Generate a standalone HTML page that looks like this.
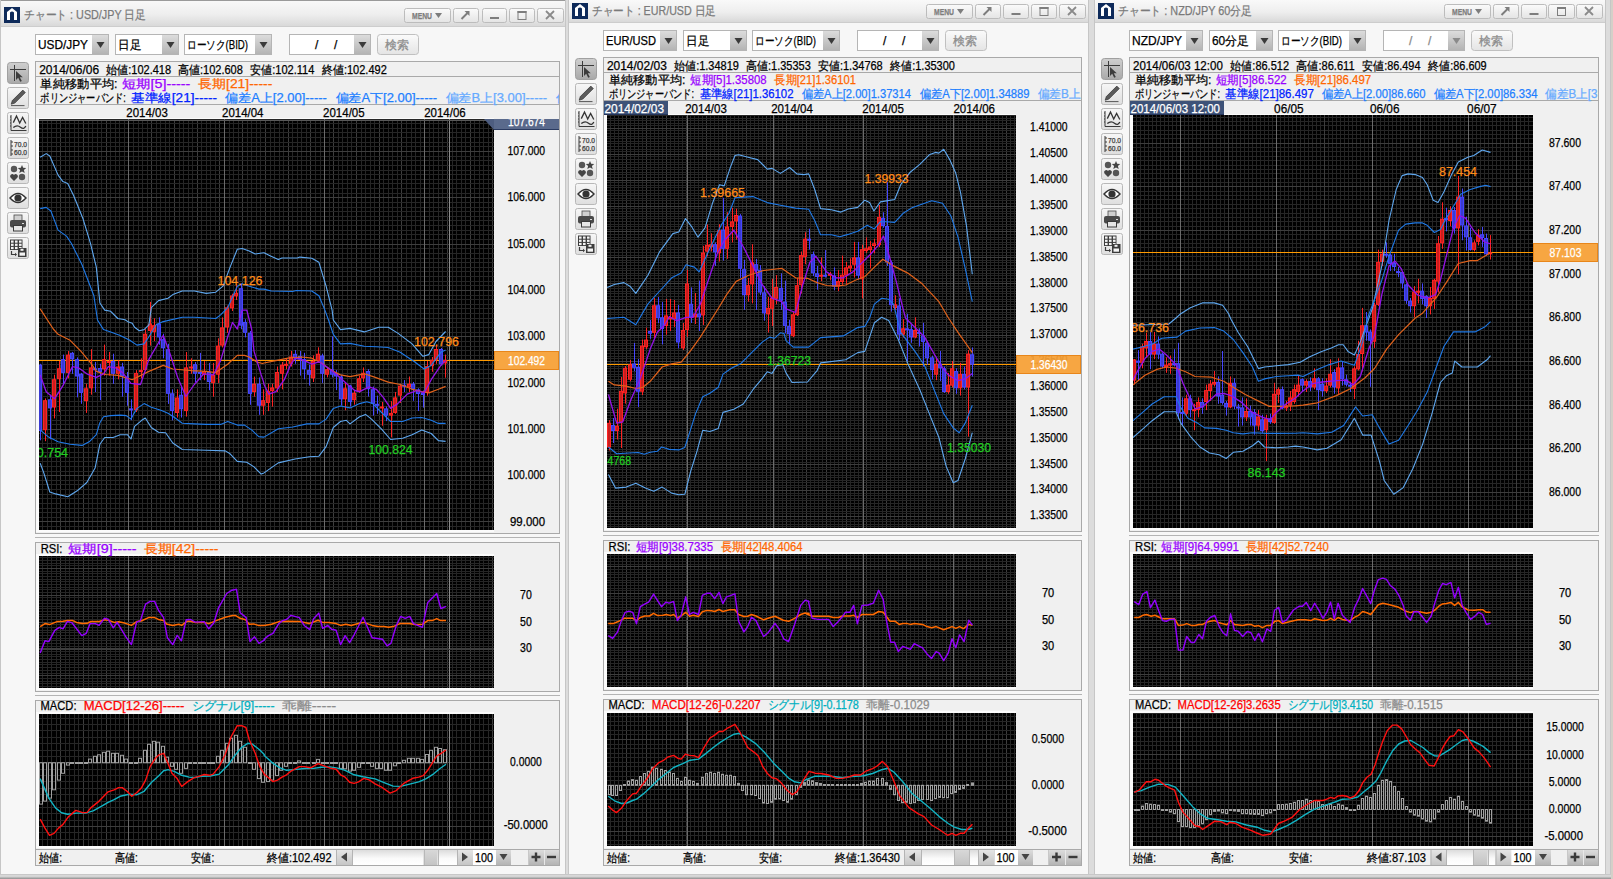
<!DOCTYPE html><html><head><meta charset="utf-8"><style>html,body{margin:0;padding:0;background:#d4d0c8;overflow:hidden}svg{display:block;font-family:"Liberation Sans",sans-serif;font-size:12px}</style></head><body>
<svg width="1613" height="879" viewBox="0 0 1613 879">
<defs>
<linearGradient id="gTitle" x1="0" y1="0" x2="0" y2="1"><stop offset="0" stop-color="#f9f9f9"/><stop offset="0.55" stop-color="#eeeeee"/><stop offset="1" stop-color="#d9d9d9"/></linearGradient>
<linearGradient id="gBtn" x1="0" y1="0" x2="0" y2="1"><stop offset="0" stop-color="#fbfbfb"/><stop offset="1" stop-color="#e4e4e4"/></linearGradient>
<linearGradient id="gDrop" x1="0" y1="0" x2="0" y2="1"><stop offset="0" stop-color="#dcdcdc"/><stop offset="1" stop-color="#b4b4b4"/></linearGradient>
<linearGradient id="gTool" x1="0" y1="0" x2="0" y2="1"><stop offset="0" stop-color="#f7f7f7"/><stop offset="1" stop-color="#dedede"/></linearGradient>
<linearGradient id="gToolSel" x1="0" y1="0" x2="0" y2="1"><stop offset="0" stop-color="#cfcfcf"/><stop offset="1" stop-color="#a9a9a9"/></linearGradient>
<linearGradient id="gBottom" x1="0" y1="0" x2="0" y2="1"><stop offset="0" stop-color="#dedede"/><stop offset="0.5" stop-color="#d4d4d4"/><stop offset="1" stop-color="#8f8f8f"/></linearGradient>
<linearGradient id="gTrack" x1="0" y1="0" x2="0" y2="1"><stop offset="0" stop-color="#dcdcdc"/><stop offset="0.55" stop-color="#fafafa"/><stop offset="1" stop-color="#ffffff"/></linearGradient>
<linearGradient id="gSBtn" x1="0" y1="0" x2="0" y2="1"><stop offset="0" stop-color="#e4e4e4"/><stop offset="1" stop-color="#c6c6c6"/></linearGradient>
<linearGradient id="gThumb" x1="0" y1="0" x2="0" y2="1"><stop offset="0" stop-color="#d8d8d8"/><stop offset="1" stop-color="#c4c4c4"/></linearGradient>
</defs>
<rect x="0" y="0" width="1613" height="879" fill="#d4d0c8"/>
<rect x="1" y="0" width="564" height="874" fill="#f7f7f7"/>
<rect x="1" y="0" width="564" height="26" fill="url(#gTitle)"/>
<rect x="1" y="26" width="564" height="1" fill="#cdcdcd"/>
<rect x="0" y="0" width="565" height="1" fill="#9a9a9a"/>
<rect x="4" y="7" width="16" height="16" fill="#0e2a5a"/>
<path d="M7,20 v-8 l5,-4 l5,4 v8 h-3 v-7.5 q-2,-2 -4,0 v7.5 z" fill="#fff"/>
<text x="24" y="19" fill="#7a7a7a" stroke="#7a7a7a" stroke-width="0.25" textLength="122" lengthAdjust="spacingAndGlyphs">チャート : USD/JPY 日足</text>
<rect x="404.5" y="8.5" width="46" height="14" rx="2" fill="url(#gBtn)" stroke="#bcbcbc"/>
<text x="412" y="19" fill="#7d7d7d" stroke="#7d7d7d" stroke-width="0.25" font-size="9" textLength="20" lengthAdjust="spacingAndGlyphs" font-weight="bold">MENU</text>
<path d="M435,13 h7 l-3.5,5 z" fill="#7d7d7d"/>
<rect x="453.5" y="8.5" width="25" height="14" rx="2" fill="url(#gBtn)" stroke="#bcbcbc"/>
<path d="M461.5,19.0 l6,-6" stroke="#7d7d7d" stroke-width="2"/><path d="M464.5,11.0 h5 v5 z" fill="#7d7d7d"/>
<rect x="482.5" y="8.5" width="24" height="14" rx="2" fill="url(#gBtn)" stroke="#bcbcbc"/>
<rect x="490.0" y="17.0" width="9" height="2" fill="#7d7d7d"/>
<rect x="509.5" y="8.5" width="25" height="14" rx="2" fill="url(#gBtn)" stroke="#bcbcbc"/>
<rect x="518.0" y="11.5" width="8" height="8" fill="none" stroke="#7d7d7d"/><rect x="517.5" y="11.0" width="9" height="2" fill="#7d7d7d"/>
<rect x="537.5" y="8.5" width="26" height="14" rx="2" fill="url(#gBtn)" stroke="#bcbcbc"/>
<path d="M546.0,11.0 l8,8 M554.0,11.0 l-8,8" stroke="#8a8a8a" stroke-width="1.8"/>
<rect x="35" y="34" width="74" height="21" fill="#ffffff"/>
<rect x="92" y="35" width="16" height="19" fill="url(#gDrop)"/>
<rect x="35" y="34" width="74" height="1" fill="#b5b5b5"/>
<rect x="35" y="54" width="74" height="1" fill="#b5b5b5"/>
<rect x="35" y="34" width="1" height="21" fill="#b5b5b5"/>
<rect x="108" y="34" width="1" height="21" fill="#b5b5b5"/>
<path d="M96.5,42 h8 l-4,6 z" fill="#3a3a3a"/>
<text x="38" y="49" fill="#000" stroke="#000" stroke-width="0.25" textLength="50" lengthAdjust="spacingAndGlyphs">USD/JPY</text>
<rect x="115" y="34" width="64" height="21" fill="#ffffff"/>
<rect x="162" y="35" width="16" height="19" fill="url(#gDrop)"/>
<rect x="115" y="34" width="64" height="1" fill="#b5b5b5"/>
<rect x="115" y="54" width="64" height="1" fill="#b5b5b5"/>
<rect x="115" y="34" width="1" height="21" fill="#b5b5b5"/>
<rect x="178" y="34" width="1" height="21" fill="#b5b5b5"/>
<path d="M166.5,42 h8 l-4,6 z" fill="#3a3a3a"/>
<text x="118" y="49" fill="#000" stroke="#000" stroke-width="0.25" textLength="23" lengthAdjust="spacingAndGlyphs">日足</text>
<rect x="184" y="34" width="88" height="21" fill="#ffffff"/>
<rect x="255" y="35" width="16" height="19" fill="url(#gDrop)"/>
<rect x="184" y="34" width="88" height="1" fill="#b5b5b5"/>
<rect x="184" y="54" width="88" height="1" fill="#b5b5b5"/>
<rect x="184" y="34" width="1" height="21" fill="#b5b5b5"/>
<rect x="271" y="34" width="1" height="21" fill="#b5b5b5"/>
<path d="M259.5,42 h8 l-4,6 z" fill="#3a3a3a"/>
<text x="187" y="49" fill="#000" stroke="#000" stroke-width="0.25" textLength="61" lengthAdjust="spacingAndGlyphs">ローソク(BID)</text>
<rect x="289" y="34" width="82" height="21" fill="#ffffff"/>
<rect x="354" y="35" width="16" height="19" fill="url(#gDrop)"/>
<rect x="289" y="34" width="82" height="1" fill="#b5b5b5"/>
<rect x="289" y="54" width="82" height="1" fill="#b5b5b5"/>
<rect x="289" y="34" width="1" height="21" fill="#b5b5b5"/>
<rect x="370" y="34" width="1" height="21" fill="#b5b5b5"/>
<path d="M358.5,42 h8 l-4,6 z" fill="#3a3a3a"/>
<text x="315" y="49" fill="#000" stroke="#000" stroke-width="0.25">/</text>
<text x="334" y="49" fill="#000" stroke="#000" stroke-width="0.25">/</text>
<rect x="377.5" y="34.5" width="41" height="20" rx="3" fill="url(#gBtn)" stroke="#c0c0c0"/>
<text x="385" y="49" fill="#8c8c8c" stroke="#8c8c8c" stroke-width="0.25" textLength="24" lengthAdjust="spacingAndGlyphs">検索</text>
<rect x="7.5" y="62.5" width="21" height="21" rx="3" fill="url(#gToolSel)" stroke="#a0a0a0"/>
<path d="M10,69.5 h16 M14.5,65 v16" stroke="#3c3c3c" stroke-width="1" fill="none"/>
<path d="M16,71 l0,9 l2.2,-2.2 l2,4 l1.6,-0.8 l-2,-3.8 l3,0 z" fill="#3c3c3c"/>
<rect x="7.5" y="87.5" width="21" height="21" rx="2" fill="url(#gTool)" stroke="#b8b8b8"/>
<path d="M11.2,104.2 L12.3,100.6 L22.8,90.1 L25.3,92.6 L14.8,103.1 Z" fill="#5a5a5a" stroke="#333" stroke-width="0.7"/>
<path d="M11,105.6 H24.5" stroke="#555" stroke-width="1"/>
<rect x="7.5" y="112.5" width="21" height="21" rx="2" fill="url(#gTool)" stroke="#b8b8b8"/>
<path d="M11,115 V130.5 H26.5" stroke="#3a3a3a" fill="none" stroke-width="1"/>
<path d="M10,117 h1 M10,120 h1 M10,123 h1 M10,126 h1" stroke="#3a3a3a" stroke-width="1"/>
<path d="M13.3,122.6 L16.5,116.1 L19.7,123 L22.6,117.5 L25.8,123.5" stroke="#333" fill="none" stroke-width="1.3"/>
<path d="M13.3,127.6 Q17,124.3 20.5,127.2 T25.8,126" stroke="#333" fill="none" stroke-width="1.3"/>
<rect x="7.5" y="137.5" width="21" height="21" rx="2" fill="url(#gTool)" stroke="#b8b8b8"/>
<path d="M11,140 v16 M11,142 h2 M11,146 h2 M11,150 h2 M11,154 h2" stroke="#3c3c3c" fill="none"/>
<text x="14" y="147" fill="#3c3c3c" stroke="#3c3c3c" stroke-width="0.25" font-size="7" textLength="13" lengthAdjust="spacingAndGlyphs">70.0</text>
<text x="14" y="155" fill="#3c3c3c" stroke="#3c3c3c" stroke-width="0.25" font-size="7" textLength="13" lengthAdjust="spacingAndGlyphs">60.0</text>
<rect x="7.5" y="162.5" width="21" height="21" rx="2" fill="url(#gTool)" stroke="#b8b8b8"/>
<circle cx="14" cy="169" r="3.2" fill="#555"/><circle cx="22" cy="177" r="3.2" fill="#555"/>
<path d="M22,165 l1.2,2.8 l3,0.2 l-2.3,2 l0.8,3 l-2.7,-1.6 l-2.7,1.6 l0.8,-3 l-2.3,-2 l3,-0.2 z" fill="#444"/>
<path d="M14,181 l-3.5,-3.5 a2,2 0 0 1 3.5,-2.5 a2,2 0 0 1 3.5,2.5 z" fill="#444"/>
<rect x="7.5" y="187.5" width="21" height="21" rx="2" fill="url(#gTool)" stroke="#b8b8b8"/>
<path d="M10,198 q8,-9 16,0 q-8,9 -16,0 z" fill="#fff" stroke="#333" stroke-width="1.4"/>
<circle cx="18" cy="198" r="3.6" fill="#333"/>
<rect x="7.5" y="212.5" width="21" height="21" rx="2" fill="url(#gTool)" stroke="#b8b8b8"/>
<rect x="14" y="215" width="8" height="6" fill="#d0d0d0" stroke="#4a4a4a" stroke-width="0.8"/>
<rect x="10" y="220" width="16" height="7.5" rx="2" fill="#4a4a4a"/>
<rect x="22" y="223" width="2" height="1" fill="#ddd"/>
<rect x="13.5" y="225.5" width="9" height="5.5" fill="#e6e6e6" stroke="#3a3a3a" stroke-width="1"/>
<rect x="7.5" y="237.5" width="21" height="21" rx="2" fill="url(#gTool)" stroke="#b8b8b8"/>
<rect x="10" y="239.5" width="12.5" height="10.5" fill="#3c3c3c"/>
<rect x="11" y="240.5" width="2.6" height="2.2" fill="#f4f4f4"/>
<rect x="15" y="240.5" width="2.6" height="2.2" fill="#f4f4f4"/>
<rect x="19" y="240.5" width="2.6" height="2.2" fill="#f4f4f4"/>
<rect x="11" y="243.7" width="2.6" height="2.2" fill="#f4f4f4"/>
<rect x="15" y="243.7" width="2.6" height="2.2" fill="#f4f4f4"/>
<rect x="19" y="243.7" width="2.6" height="2.2" fill="#f4f4f4"/>
<rect x="11" y="246.9" width="2.6" height="2.2" fill="#f4f4f4"/>
<rect x="15" y="246.9" width="2.6" height="2.2" fill="#f4f4f4"/>
<rect x="19" y="246.9" width="2.6" height="2.2" fill="#f4f4f4"/>
<path d="M11.5,251 v3.5 h3.5" stroke="#3c3c3c" fill="none" stroke-width="1.2"/><path d="M15,252.8 l2,1.7 l-2,1.7 z" fill="#3c3c3c"/>
<rect x="18" y="248" width="8.5" height="9" fill="#3c3c3c"/>
<rect x="19.5" y="252.5" width="5.5" height="3.2" fill="#f4f4f4"/><rect x="20.5" y="248.8" width="3" height="2" fill="#f4f4f4"/>
<rect x="35" y="61" width="525" height="473" fill="#f0f0f0"/>
<rect x="35" y="61" width="525" height="1" fill="#a9a9a9"/>
<rect x="35" y="533" width="525" height="1" fill="#a9a9a9"/>
<rect x="35" y="61" width="1" height="473" fill="#a9a9a9"/>
<rect x="559" y="61" width="1" height="473" fill="#a9a9a9"/>
<rect x="35" y="76" width="525" height="1" fill="#a9a9a9"/>
<rect x="35" y="104" width="525" height="1" fill="#a9a9a9"/>
<rect x="36" y="118" width="458" height="414" fill="#fbfbfb"/>
<rect x="39" y="119" width="455" height="411" fill="#000"/>
<rect x="494" y="118" width="65" height="414" fill="#f0f0f0"/>
<rect x="35" y="537" width="525" height="1" fill="#b4b4b4"/>
<rect x="35" y="542" width="525" height="150" fill="#f0f0f0"/>
<rect x="35" y="542" width="525" height="1" fill="#a9a9a9"/>
<rect x="35" y="691" width="525" height="1" fill="#a9a9a9"/>
<rect x="35" y="542" width="1" height="150" fill="#a9a9a9"/>
<rect x="559" y="542" width="1" height="150" fill="#a9a9a9"/>
<rect x="36" y="554" width="458" height="136" fill="#fbfbfb"/>
<rect x="39" y="556" width="455" height="132" fill="#000"/>
<rect x="494" y="554" width="65" height="136" fill="#f0f0f0"/>
<rect x="35" y="695" width="525" height="1" fill="#b4b4b4"/>
<rect x="35" y="700" width="525" height="166" fill="#f0f0f0"/>
<rect x="35" y="700" width="525" height="1" fill="#a9a9a9"/>
<rect x="35" y="865" width="525" height="1" fill="#a9a9a9"/>
<rect x="35" y="700" width="1" height="166" fill="#a9a9a9"/>
<rect x="559" y="700" width="1" height="166" fill="#a9a9a9"/>
<rect x="36" y="712" width="458" height="136" fill="#fbfbfb"/>
<rect x="39" y="714" width="455" height="132" fill="#000"/>
<rect x="494" y="712" width="65" height="136" fill="#f0f0f0"/>
<rect x="35" y="849" width="525" height="1" fill="#a9a9a9"/>
<rect x="569" y="0" width="519" height="874" fill="#f7f7f7"/>
<rect x="569" y="0" width="519" height="22" fill="url(#gTitle)"/>
<rect x="569" y="22" width="519" height="1" fill="#cdcdcd"/>
<rect x="572" y="3" width="16" height="16" fill="#0e2a5a"/>
<path d="M575,16 v-8 l5,-4 l5,4 v8 h-3 v-7.5 q-2,-2 -4,0 v7.5 z" fill="#fff"/>
<text x="592" y="15" fill="#7a7a7a" stroke="#7a7a7a" stroke-width="0.25" textLength="124" lengthAdjust="spacingAndGlyphs">チャート : EUR/USD 日足</text>
<rect x="926.5" y="4.5" width="46" height="14" rx="2" fill="url(#gBtn)" stroke="#bcbcbc"/>
<text x="934" y="15" fill="#7d7d7d" stroke="#7d7d7d" stroke-width="0.25" font-size="9" textLength="20" lengthAdjust="spacingAndGlyphs" font-weight="bold">MENU</text>
<path d="M957,9 h7 l-3.5,5 z" fill="#7d7d7d"/>
<rect x="975.5" y="4.5" width="25" height="14" rx="2" fill="url(#gBtn)" stroke="#bcbcbc"/>
<path d="M983.5,15.0 l6,-6" stroke="#7d7d7d" stroke-width="2"/><path d="M986.5,7.0 h5 v5 z" fill="#7d7d7d"/>
<rect x="1003.5" y="4.5" width="25" height="14" rx="2" fill="url(#gBtn)" stroke="#bcbcbc"/>
<rect x="1011.5" y="13.0" width="9" height="2" fill="#7d7d7d"/>
<rect x="1031.5" y="4.5" width="25" height="14" rx="2" fill="url(#gBtn)" stroke="#bcbcbc"/>
<rect x="1040.0" y="7.5" width="8" height="8" fill="none" stroke="#7d7d7d"/><rect x="1039.5" y="7.0" width="9" height="2" fill="#7d7d7d"/>
<rect x="1059.5" y="4.5" width="26" height="14" rx="2" fill="url(#gBtn)" stroke="#bcbcbc"/>
<path d="M1068.0,7.0 l8,8 M1076.0,7.0 l-8,8" stroke="#8a8a8a" stroke-width="1.8"/>
<rect x="603" y="30" width="74" height="21" fill="#ffffff"/>
<rect x="660" y="31" width="16" height="19" fill="url(#gDrop)"/>
<rect x="603" y="30" width="74" height="1" fill="#b5b5b5"/>
<rect x="603" y="50" width="74" height="1" fill="#b5b5b5"/>
<rect x="603" y="30" width="1" height="21" fill="#b5b5b5"/>
<rect x="676" y="30" width="1" height="21" fill="#b5b5b5"/>
<path d="M664.5,38 h8 l-4,6 z" fill="#3a3a3a"/>
<text x="606" y="45" fill="#000" stroke="#000" stroke-width="0.25" textLength="50" lengthAdjust="spacingAndGlyphs">EUR/USD</text>
<rect x="683" y="30" width="64" height="21" fill="#ffffff"/>
<rect x="730" y="31" width="16" height="19" fill="url(#gDrop)"/>
<rect x="683" y="30" width="64" height="1" fill="#b5b5b5"/>
<rect x="683" y="50" width="64" height="1" fill="#b5b5b5"/>
<rect x="683" y="30" width="1" height="21" fill="#b5b5b5"/>
<rect x="746" y="30" width="1" height="21" fill="#b5b5b5"/>
<path d="M734.5,38 h8 l-4,6 z" fill="#3a3a3a"/>
<text x="686" y="45" fill="#000" stroke="#000" stroke-width="0.25" textLength="23" lengthAdjust="spacingAndGlyphs">日足</text>
<rect x="752" y="30" width="88" height="21" fill="#ffffff"/>
<rect x="823" y="31" width="16" height="19" fill="url(#gDrop)"/>
<rect x="752" y="30" width="88" height="1" fill="#b5b5b5"/>
<rect x="752" y="50" width="88" height="1" fill="#b5b5b5"/>
<rect x="752" y="30" width="1" height="21" fill="#b5b5b5"/>
<rect x="839" y="30" width="1" height="21" fill="#b5b5b5"/>
<path d="M827.5,38 h8 l-4,6 z" fill="#3a3a3a"/>
<text x="755" y="45" fill="#000" stroke="#000" stroke-width="0.25" textLength="61" lengthAdjust="spacingAndGlyphs">ローソク(BID)</text>
<rect x="857" y="30" width="82" height="21" fill="#ffffff"/>
<rect x="922" y="31" width="16" height="19" fill="url(#gDrop)"/>
<rect x="857" y="30" width="82" height="1" fill="#b5b5b5"/>
<rect x="857" y="50" width="82" height="1" fill="#b5b5b5"/>
<rect x="857" y="30" width="1" height="21" fill="#b5b5b5"/>
<rect x="938" y="30" width="1" height="21" fill="#b5b5b5"/>
<path d="M926.5,38 h8 l-4,6 z" fill="#3a3a3a"/>
<text x="883" y="45" fill="#000" stroke="#000" stroke-width="0.25">/</text>
<text x="902" y="45" fill="#000" stroke="#000" stroke-width="0.25">/</text>
<rect x="945.5" y="30.5" width="41" height="20" rx="3" fill="url(#gBtn)" stroke="#c0c0c0"/>
<text x="953" y="45" fill="#8c8c8c" stroke="#8c8c8c" stroke-width="0.25" textLength="24" lengthAdjust="spacingAndGlyphs">検索</text>
<rect x="575.5" y="58.5" width="21" height="21" rx="3" fill="url(#gToolSel)" stroke="#a0a0a0"/>
<path d="M578,65.5 h16 M582.5,61 v16" stroke="#3c3c3c" stroke-width="1" fill="none"/>
<path d="M584,67 l0,9 l2.2,-2.2 l2,4 l1.6,-0.8 l-2,-3.8 l3,0 z" fill="#3c3c3c"/>
<rect x="575.5" y="83.5" width="21" height="21" rx="2" fill="url(#gTool)" stroke="#b8b8b8"/>
<path d="M579.2,100.2 L580.3,96.6 L590.8,86.1 L593.3,88.6 L582.8,99.1 Z" fill="#5a5a5a" stroke="#333" stroke-width="0.7"/>
<path d="M579,101.6 H592.5" stroke="#555" stroke-width="1"/>
<rect x="575.5" y="108.5" width="21" height="21" rx="2" fill="url(#gTool)" stroke="#b8b8b8"/>
<path d="M579,111 V126.5 H594.5" stroke="#3a3a3a" fill="none" stroke-width="1"/>
<path d="M578,113 h1 M578,116 h1 M578,119 h1 M578,122 h1" stroke="#3a3a3a" stroke-width="1"/>
<path d="M581.3,118.6 L584.5,112.1 L587.7,119 L590.6,113.5 L593.8,119.5" stroke="#333" fill="none" stroke-width="1.3"/>
<path d="M581.3,123.6 Q585,120.3 588.5,123.2 T593.8,122" stroke="#333" fill="none" stroke-width="1.3"/>
<rect x="575.5" y="133.5" width="21" height="21" rx="2" fill="url(#gTool)" stroke="#b8b8b8"/>
<path d="M579,136 v16 M579,138 h2 M579,142 h2 M579,146 h2 M579,150 h2" stroke="#3c3c3c" fill="none"/>
<text x="582" y="143" fill="#3c3c3c" stroke="#3c3c3c" stroke-width="0.25" font-size="7" textLength="13" lengthAdjust="spacingAndGlyphs">70.0</text>
<text x="582" y="151" fill="#3c3c3c" stroke="#3c3c3c" stroke-width="0.25" font-size="7" textLength="13" lengthAdjust="spacingAndGlyphs">60.0</text>
<rect x="575.5" y="158.5" width="21" height="21" rx="2" fill="url(#gTool)" stroke="#b8b8b8"/>
<circle cx="582" cy="165" r="3.2" fill="#555"/><circle cx="590" cy="173" r="3.2" fill="#555"/>
<path d="M590,161 l1.2,2.8 l3,0.2 l-2.3,2 l0.8,3 l-2.7,-1.6 l-2.7,1.6 l0.8,-3 l-2.3,-2 l3,-0.2 z" fill="#444"/>
<path d="M582,177 l-3.5,-3.5 a2,2 0 0 1 3.5,-2.5 a2,2 0 0 1 3.5,2.5 z" fill="#444"/>
<rect x="575.5" y="183.5" width="21" height="21" rx="2" fill="url(#gTool)" stroke="#b8b8b8"/>
<path d="M578,194 q8,-9 16,0 q-8,9 -16,0 z" fill="#fff" stroke="#333" stroke-width="1.4"/>
<circle cx="586" cy="194" r="3.6" fill="#333"/>
<rect x="575.5" y="208.5" width="21" height="21" rx="2" fill="url(#gTool)" stroke="#b8b8b8"/>
<rect x="582" y="211" width="8" height="6" fill="#d0d0d0" stroke="#4a4a4a" stroke-width="0.8"/>
<rect x="578" y="216" width="16" height="7.5" rx="2" fill="#4a4a4a"/>
<rect x="590" y="219" width="2" height="1" fill="#ddd"/>
<rect x="581.5" y="221.5" width="9" height="5.5" fill="#e6e6e6" stroke="#3a3a3a" stroke-width="1"/>
<rect x="575.5" y="233.5" width="21" height="21" rx="2" fill="url(#gTool)" stroke="#b8b8b8"/>
<rect x="578" y="235.5" width="12.5" height="10.5" fill="#3c3c3c"/>
<rect x="579" y="236.5" width="2.6" height="2.2" fill="#f4f4f4"/>
<rect x="583" y="236.5" width="2.6" height="2.2" fill="#f4f4f4"/>
<rect x="587" y="236.5" width="2.6" height="2.2" fill="#f4f4f4"/>
<rect x="579" y="239.7" width="2.6" height="2.2" fill="#f4f4f4"/>
<rect x="583" y="239.7" width="2.6" height="2.2" fill="#f4f4f4"/>
<rect x="587" y="239.7" width="2.6" height="2.2" fill="#f4f4f4"/>
<rect x="579" y="242.9" width="2.6" height="2.2" fill="#f4f4f4"/>
<rect x="583" y="242.9" width="2.6" height="2.2" fill="#f4f4f4"/>
<rect x="587" y="242.9" width="2.6" height="2.2" fill="#f4f4f4"/>
<path d="M579.5,247 v3.5 h3.5" stroke="#3c3c3c" fill="none" stroke-width="1.2"/><path d="M583,248.8 l2,1.7 l-2,1.7 z" fill="#3c3c3c"/>
<rect x="586" y="244" width="8.5" height="9" fill="#3c3c3c"/>
<rect x="587.5" y="248.5" width="5.5" height="3.2" fill="#f4f4f4"/><rect x="588.5" y="244.8" width="3" height="2" fill="#f4f4f4"/>
<rect x="603" y="57" width="479" height="475" fill="#f0f0f0"/>
<rect x="603" y="57" width="479" height="1" fill="#a9a9a9"/>
<rect x="603" y="531" width="479" height="1" fill="#a9a9a9"/>
<rect x="603" y="57" width="1" height="475" fill="#a9a9a9"/>
<rect x="1081" y="57" width="1" height="475" fill="#a9a9a9"/>
<rect x="603" y="72" width="479" height="1" fill="#a9a9a9"/>
<rect x="603" y="100" width="479" height="1" fill="#a9a9a9"/>
<rect x="604" y="114" width="412" height="416" fill="#fbfbfb"/>
<rect x="607" y="115" width="409" height="413" fill="#000"/>
<rect x="1016" y="114" width="65" height="416" fill="#f0f0f0"/>
<rect x="603" y="535" width="479" height="1" fill="#b4b4b4"/>
<rect x="603" y="540" width="479" height="151" fill="#f0f0f0"/>
<rect x="603" y="540" width="479" height="1" fill="#a9a9a9"/>
<rect x="603" y="690" width="479" height="1" fill="#a9a9a9"/>
<rect x="603" y="540" width="1" height="151" fill="#a9a9a9"/>
<rect x="1081" y="540" width="1" height="151" fill="#a9a9a9"/>
<rect x="604" y="552" width="412" height="137" fill="#fbfbfb"/>
<rect x="607" y="554" width="409" height="133" fill="#000"/>
<rect x="1016" y="552" width="65" height="137" fill="#f0f0f0"/>
<rect x="603" y="694" width="479" height="1" fill="#b4b4b4"/>
<rect x="603" y="699" width="479" height="167" fill="#f0f0f0"/>
<rect x="603" y="699" width="479" height="1" fill="#a9a9a9"/>
<rect x="603" y="865" width="479" height="1" fill="#a9a9a9"/>
<rect x="603" y="699" width="1" height="167" fill="#a9a9a9"/>
<rect x="1081" y="699" width="1" height="167" fill="#a9a9a9"/>
<rect x="604" y="711" width="412" height="137" fill="#fbfbfb"/>
<rect x="607" y="713" width="409" height="133" fill="#000"/>
<rect x="1016" y="711" width="65" height="137" fill="#f0f0f0"/>
<rect x="603" y="849" width="479" height="1" fill="#a9a9a9"/>
<rect x="1095" y="0" width="510" height="874" fill="#f7f7f7"/>
<rect x="1095" y="0" width="510" height="22" fill="url(#gTitle)"/>
<rect x="1095" y="22" width="510" height="1" fill="#cdcdcd"/>
<rect x="1098" y="3" width="16" height="16" fill="#0e2a5a"/>
<path d="M1101,16 v-8 l5,-4 l5,4 v8 h-3 v-7.5 q-2,-2 -4,0 v7.5 z" fill="#fff"/>
<text x="1118" y="15" fill="#7a7a7a" stroke="#7a7a7a" stroke-width="0.25" textLength="134" lengthAdjust="spacingAndGlyphs">チャート : NZD/JPY 60分足</text>
<rect x="1444.5" y="4.5" width="46" height="14" rx="2" fill="url(#gBtn)" stroke="#bcbcbc"/>
<text x="1452" y="15" fill="#7d7d7d" stroke="#7d7d7d" stroke-width="0.25" font-size="9" textLength="20" lengthAdjust="spacingAndGlyphs" font-weight="bold">MENU</text>
<path d="M1475,9 h7 l-3.5,5 z" fill="#7d7d7d"/>
<rect x="1493.5" y="4.5" width="25" height="14" rx="2" fill="url(#gBtn)" stroke="#bcbcbc"/>
<path d="M1501.5,15.0 l6,-6" stroke="#7d7d7d" stroke-width="2"/><path d="M1504.5,7.0 h5 v5 z" fill="#7d7d7d"/>
<rect x="1521.5" y="4.5" width="25" height="14" rx="2" fill="url(#gBtn)" stroke="#bcbcbc"/>
<rect x="1529.5" y="13.0" width="9" height="2" fill="#7d7d7d"/>
<rect x="1548.5" y="4.5" width="26" height="14" rx="2" fill="url(#gBtn)" stroke="#bcbcbc"/>
<rect x="1557.5" y="7.5" width="8" height="8" fill="none" stroke="#7d7d7d"/><rect x="1557.0" y="7.0" width="9" height="2" fill="#7d7d7d"/>
<rect x="1576.5" y="4.5" width="26" height="14" rx="2" fill="url(#gBtn)" stroke="#bcbcbc"/>
<path d="M1585.0,7.0 l8,8 M1593.0,7.0 l-8,8" stroke="#8a8a8a" stroke-width="1.8"/>
<rect x="1129" y="30" width="74" height="21" fill="#ffffff"/>
<rect x="1186" y="31" width="16" height="19" fill="url(#gDrop)"/>
<rect x="1129" y="30" width="74" height="1" fill="#b5b5b5"/>
<rect x="1129" y="50" width="74" height="1" fill="#b5b5b5"/>
<rect x="1129" y="30" width="1" height="21" fill="#b5b5b5"/>
<rect x="1202" y="30" width="1" height="21" fill="#b5b5b5"/>
<path d="M1190.5,38 h8 l-4,6 z" fill="#3a3a3a"/>
<text x="1132" y="45" fill="#000" stroke="#000" stroke-width="0.25" textLength="50" lengthAdjust="spacingAndGlyphs">NZD/JPY</text>
<rect x="1209" y="30" width="64" height="21" fill="#ffffff"/>
<rect x="1256" y="31" width="16" height="19" fill="url(#gDrop)"/>
<rect x="1209" y="30" width="64" height="1" fill="#b5b5b5"/>
<rect x="1209" y="50" width="64" height="1" fill="#b5b5b5"/>
<rect x="1209" y="30" width="1" height="21" fill="#b5b5b5"/>
<rect x="1272" y="30" width="1" height="21" fill="#b5b5b5"/>
<path d="M1260.5,38 h8 l-4,6 z" fill="#3a3a3a"/>
<text x="1212" y="45" fill="#000" stroke="#000" stroke-width="0.25" textLength="37" lengthAdjust="spacingAndGlyphs">60分足</text>
<rect x="1278" y="30" width="88" height="21" fill="#ffffff"/>
<rect x="1349" y="31" width="16" height="19" fill="url(#gDrop)"/>
<rect x="1278" y="30" width="88" height="1" fill="#b5b5b5"/>
<rect x="1278" y="50" width="88" height="1" fill="#b5b5b5"/>
<rect x="1278" y="30" width="1" height="21" fill="#b5b5b5"/>
<rect x="1365" y="30" width="1" height="21" fill="#b5b5b5"/>
<path d="M1353.5,38 h8 l-4,6 z" fill="#3a3a3a"/>
<text x="1281" y="45" fill="#000" stroke="#000" stroke-width="0.25" textLength="61" lengthAdjust="spacingAndGlyphs">ローソク(BID)</text>
<rect x="1383" y="30" width="82" height="21" fill="#ffffff"/>
<rect x="1448" y="31" width="16" height="19" fill="url(#gDrop)"/>
<rect x="1383" y="30" width="82" height="1" fill="#b5b5b5"/>
<rect x="1383" y="50" width="82" height="1" fill="#b5b5b5"/>
<rect x="1383" y="30" width="1" height="21" fill="#b5b5b5"/>
<rect x="1464" y="30" width="1" height="21" fill="#b5b5b5"/>
<path d="M1452.5,38 h8 l-4,6 z" fill="#8a8a8a"/>
<text x="1409" y="45" fill="#8a8a8a" stroke="#8a8a8a" stroke-width="0.25">/</text>
<text x="1428" y="45" fill="#8a8a8a" stroke="#8a8a8a" stroke-width="0.25">/</text>
<rect x="1471.5" y="30.5" width="41" height="20" rx="3" fill="url(#gBtn)" stroke="#c0c0c0"/>
<text x="1479" y="45" fill="#8c8c8c" stroke="#8c8c8c" stroke-width="0.25" textLength="24" lengthAdjust="spacingAndGlyphs">検索</text>
<rect x="1101.5" y="58.5" width="21" height="21" rx="3" fill="url(#gToolSel)" stroke="#a0a0a0"/>
<path d="M1104,65.5 h16 M1108.5,61 v16" stroke="#3c3c3c" stroke-width="1" fill="none"/>
<path d="M1110,67 l0,9 l2.2,-2.2 l2,4 l1.6,-0.8 l-2,-3.8 l3,0 z" fill="#3c3c3c"/>
<rect x="1101.5" y="83.5" width="21" height="21" rx="2" fill="url(#gTool)" stroke="#b8b8b8"/>
<path d="M1105.2,100.2 L1106.3,96.6 L1116.8,86.1 L1119.3,88.6 L1108.8,99.1 Z" fill="#5a5a5a" stroke="#333" stroke-width="0.7"/>
<path d="M1105,101.6 H1118.5" stroke="#555" stroke-width="1"/>
<rect x="1101.5" y="108.5" width="21" height="21" rx="2" fill="url(#gTool)" stroke="#b8b8b8"/>
<path d="M1105,111 V126.5 H1120.5" stroke="#3a3a3a" fill="none" stroke-width="1"/>
<path d="M1104,113 h1 M1104,116 h1 M1104,119 h1 M1104,122 h1" stroke="#3a3a3a" stroke-width="1"/>
<path d="M1107.3,118.6 L1110.5,112.1 L1113.7,119 L1116.6,113.5 L1119.8,119.5" stroke="#333" fill="none" stroke-width="1.3"/>
<path d="M1107.3,123.6 Q1111,120.3 1114.5,123.2 T1119.8,122" stroke="#333" fill="none" stroke-width="1.3"/>
<rect x="1101.5" y="133.5" width="21" height="21" rx="2" fill="url(#gTool)" stroke="#b8b8b8"/>
<path d="M1105,136 v16 M1105,138 h2 M1105,142 h2 M1105,146 h2 M1105,150 h2" stroke="#3c3c3c" fill="none"/>
<text x="1108" y="143" fill="#3c3c3c" stroke="#3c3c3c" stroke-width="0.25" font-size="7" textLength="13" lengthAdjust="spacingAndGlyphs">70.0</text>
<text x="1108" y="151" fill="#3c3c3c" stroke="#3c3c3c" stroke-width="0.25" font-size="7" textLength="13" lengthAdjust="spacingAndGlyphs">60.0</text>
<rect x="1101.5" y="158.5" width="21" height="21" rx="2" fill="url(#gTool)" stroke="#b8b8b8"/>
<circle cx="1108" cy="165" r="3.2" fill="#555"/><circle cx="1116" cy="173" r="3.2" fill="#555"/>
<path d="M1116,161 l1.2,2.8 l3,0.2 l-2.3,2 l0.8,3 l-2.7,-1.6 l-2.7,1.6 l0.8,-3 l-2.3,-2 l3,-0.2 z" fill="#444"/>
<path d="M1108,177 l-3.5,-3.5 a2,2 0 0 1 3.5,-2.5 a2,2 0 0 1 3.5,2.5 z" fill="#444"/>
<rect x="1101.5" y="183.5" width="21" height="21" rx="2" fill="url(#gTool)" stroke="#b8b8b8"/>
<path d="M1104,194 q8,-9 16,0 q-8,9 -16,0 z" fill="#fff" stroke="#333" stroke-width="1.4"/>
<circle cx="1112" cy="194" r="3.6" fill="#333"/>
<rect x="1101.5" y="208.5" width="21" height="21" rx="2" fill="url(#gTool)" stroke="#b8b8b8"/>
<rect x="1108" y="211" width="8" height="6" fill="#d0d0d0" stroke="#4a4a4a" stroke-width="0.8"/>
<rect x="1104" y="216" width="16" height="7.5" rx="2" fill="#4a4a4a"/>
<rect x="1116" y="219" width="2" height="1" fill="#ddd"/>
<rect x="1107.5" y="221.5" width="9" height="5.5" fill="#e6e6e6" stroke="#3a3a3a" stroke-width="1"/>
<rect x="1101.5" y="233.5" width="21" height="21" rx="2" fill="url(#gTool)" stroke="#b8b8b8"/>
<rect x="1104" y="235.5" width="12.5" height="10.5" fill="#3c3c3c"/>
<rect x="1105" y="236.5" width="2.6" height="2.2" fill="#f4f4f4"/>
<rect x="1109" y="236.5" width="2.6" height="2.2" fill="#f4f4f4"/>
<rect x="1113" y="236.5" width="2.6" height="2.2" fill="#f4f4f4"/>
<rect x="1105" y="239.7" width="2.6" height="2.2" fill="#f4f4f4"/>
<rect x="1109" y="239.7" width="2.6" height="2.2" fill="#f4f4f4"/>
<rect x="1113" y="239.7" width="2.6" height="2.2" fill="#f4f4f4"/>
<rect x="1105" y="242.9" width="2.6" height="2.2" fill="#f4f4f4"/>
<rect x="1109" y="242.9" width="2.6" height="2.2" fill="#f4f4f4"/>
<rect x="1113" y="242.9" width="2.6" height="2.2" fill="#f4f4f4"/>
<path d="M1105.5,247 v3.5 h3.5" stroke="#3c3c3c" fill="none" stroke-width="1.2"/><path d="M1109,248.8 l2,1.7 l-2,1.7 z" fill="#3c3c3c"/>
<rect x="1112" y="244" width="8.5" height="9" fill="#3c3c3c"/>
<rect x="1113.5" y="248.5" width="5.5" height="3.2" fill="#f4f4f4"/><rect x="1114.5" y="244.8" width="3" height="2" fill="#f4f4f4"/>
<rect x="1129" y="57" width="470" height="475" fill="#f0f0f0"/>
<rect x="1129" y="57" width="470" height="1" fill="#a9a9a9"/>
<rect x="1129" y="531" width="470" height="1" fill="#a9a9a9"/>
<rect x="1129" y="57" width="1" height="475" fill="#a9a9a9"/>
<rect x="1598" y="57" width="1" height="475" fill="#a9a9a9"/>
<rect x="1129" y="72" width="470" height="1" fill="#a9a9a9"/>
<rect x="1129" y="100" width="470" height="1" fill="#a9a9a9"/>
<rect x="1130" y="114" width="403" height="416" fill="#fbfbfb"/>
<rect x="1133" y="115" width="400" height="413" fill="#000"/>
<rect x="1533" y="114" width="65" height="416" fill="#f0f0f0"/>
<rect x="1129" y="535" width="470" height="1" fill="#b4b4b4"/>
<rect x="1129" y="540" width="470" height="151" fill="#f0f0f0"/>
<rect x="1129" y="540" width="470" height="1" fill="#a9a9a9"/>
<rect x="1129" y="690" width="470" height="1" fill="#a9a9a9"/>
<rect x="1129" y="540" width="1" height="151" fill="#a9a9a9"/>
<rect x="1598" y="540" width="1" height="151" fill="#a9a9a9"/>
<rect x="1130" y="552" width="403" height="137" fill="#fbfbfb"/>
<rect x="1133" y="554" width="400" height="133" fill="#000"/>
<rect x="1533" y="552" width="65" height="137" fill="#f0f0f0"/>
<rect x="1129" y="694" width="470" height="1" fill="#b4b4b4"/>
<rect x="1129" y="699" width="470" height="167" fill="#f0f0f0"/>
<rect x="1129" y="699" width="470" height="1" fill="#a9a9a9"/>
<rect x="1129" y="865" width="470" height="1" fill="#a9a9a9"/>
<rect x="1129" y="699" width="1" height="167" fill="#a9a9a9"/>
<rect x="1598" y="699" width="1" height="167" fill="#a9a9a9"/>
<rect x="1130" y="711" width="403" height="137" fill="#fbfbfb"/>
<rect x="1133" y="713" width="400" height="133" fill="#000"/>
<rect x="1533" y="711" width="65" height="137" fill="#f0f0f0"/>
<rect x="1129" y="849" width="470" height="1" fill="#a9a9a9"/>
<rect x="565" y="0" width="4" height="879" fill="#dcdcdc"/>
<rect x="565" y="0" width="1" height="874" fill="#c6c6c6"/>
<rect x="568" y="0" width="1" height="874" fill="#c6c6c6"/>
<rect x="1088" y="0" width="7" height="879" fill="#dcdcdc"/>
<rect x="1088" y="0" width="1" height="874" fill="#c6c6c6"/>
<rect x="1094" y="0" width="1" height="874" fill="#c6c6c6"/>
<rect x="1605" y="0" width="6" height="879" fill="#dcdcdc"/>
<rect x="1605" y="0" width="1" height="874" fill="#c6c6c6"/>
<rect x="1610" y="0" width="1" height="874" fill="#c6c6c6"/>
<rect x="0" y="0" width="1" height="880" fill="#c6c6c6"/>
<rect x="0" y="874" width="1611" height="5" fill="url(#gBottom)"/>
<rect x="0" y="874" width="1611" height="1" fill="#c8c8c8"/>
<rect x="1611" y="0" width="2" height="879" fill="#d4d0c8"/>
<clipPath id="c1"><rect x="36" y="60" width="523" height="60"/></clipPath>
<clipPath id="c2"><rect x="604" y="56" width="477" height="60"/></clipPath>
<clipPath id="c3"><rect x="1130" y="56" width="468" height="60"/></clipPath>
<g clip-path="url(#c1)">
<text x="39.2" y="74" fill="#000" stroke="#000" stroke-width="0.25" textLength="59.9" lengthAdjust="spacingAndGlyphs">2014/06/06</text>
<text x="106.2" y="74" fill="#000" stroke="#000" stroke-width="0.25" textLength="64.9" lengthAdjust="spacingAndGlyphs">始値:102.418</text>
<text x="178.0" y="74" fill="#000" stroke="#000" stroke-width="0.25" textLength="64.8" lengthAdjust="spacingAndGlyphs">高値:102.608</text>
<text x="250.1" y="74" fill="#000" stroke="#000" stroke-width="0.25" textLength="64.3" lengthAdjust="spacingAndGlyphs">安値:102.114</text>
<text x="321.9" y="74" fill="#000" stroke="#000" stroke-width="0.25" textLength="64.9" lengthAdjust="spacingAndGlyphs">終値:102.492</text>
<text x="40.4" y="88" fill="#000" stroke="#000" stroke-width="0.25" textLength="77.1" lengthAdjust="spacingAndGlyphs">単純移動平均:</text>
<text x="121.9" y="88" fill="#9900ff" stroke="#9900ff" stroke-width="0.25" textLength="68.5" lengthAdjust="spacingAndGlyphs">短期[5]-----</text>
<text x="198.2" y="88" fill="#ff6600" stroke="#ff6600" stroke-width="0.25" textLength="74.2" lengthAdjust="spacingAndGlyphs">長期[21]-----</text>
<text x="40.4" y="102" fill="#000" stroke="#000" stroke-width="0.25" textLength="85.5" lengthAdjust="spacingAndGlyphs">ボリンジャーバンド:</text>
<text x="131.1" y="102" fill="#0022ff" stroke="#0022ff" stroke-width="0.25" textLength="86.0" lengthAdjust="spacingAndGlyphs">基準線[21]-----</text>
<text x="225.3" y="102" fill="#1e7fff" stroke="#1e7fff" stroke-width="0.25" textLength="101.6" lengthAdjust="spacingAndGlyphs">偏差A上[2.00]-----</text>
<text x="335.5" y="102" fill="#1e7fff" stroke="#1e7fff" stroke-width="0.25" textLength="101.6" lengthAdjust="spacingAndGlyphs">偏差A下[2.00]-----</text>
<text x="445.5" y="102" fill="#66aaff" stroke="#66aaff" stroke-width="0.25" textLength="101.6" lengthAdjust="spacingAndGlyphs">偏差B上[3.00]-----</text>
<text x="555.5" y="102" fill="#66aaff" stroke="#66aaff" stroke-width="0.25" textLength="13" lengthAdjust="spacingAndGlyphs">偏</text>
</g>
<g clip-path="url(#c2)">
<text x="606.9" y="70" fill="#000" stroke="#000" stroke-width="0.25" textLength="59.9" lengthAdjust="spacingAndGlyphs">2014/02/03</text>
<text x="674.2" y="70" fill="#000" stroke="#000" stroke-width="0.25" textLength="64.7" lengthAdjust="spacingAndGlyphs">始値:1.34819</text>
<text x="746.0" y="70" fill="#000" stroke="#000" stroke-width="0.25" textLength="64.8" lengthAdjust="spacingAndGlyphs">高値:1.35353</text>
<text x="818.0" y="70" fill="#000" stroke="#000" stroke-width="0.25" textLength="64.7" lengthAdjust="spacingAndGlyphs">安値:1.34768</text>
<text x="890.3" y="70" fill="#000" stroke="#000" stroke-width="0.25" textLength="64.6" lengthAdjust="spacingAndGlyphs">終値:1.35300</text>
<text x="608.5" y="84" fill="#000" stroke="#000" stroke-width="0.25" textLength="77" lengthAdjust="spacingAndGlyphs">単純移動平均:</text>
<text x="690.2" y="84" fill="#9900ff" stroke="#9900ff" stroke-width="0.25" textLength="76.4" lengthAdjust="spacingAndGlyphs">短期[5]1.35808</text>
<text x="774.3" y="84" fill="#ff6600" stroke="#ff6600" stroke-width="0.25" textLength="81.7" lengthAdjust="spacingAndGlyphs">長期[21]1.36101</text>
<text x="608.5" y="98" fill="#000" stroke="#000" stroke-width="0.25" textLength="85.5" lengthAdjust="spacingAndGlyphs">ボリンジャーバンド:</text>
<text x="699.5" y="98" fill="#0022ff" stroke="#0022ff" stroke-width="0.25" textLength="94" lengthAdjust="spacingAndGlyphs">基準線[21]1.36102</text>
<text x="801.8" y="98" fill="#1e7fff" stroke="#1e7fff" stroke-width="0.25" textLength="109.2" lengthAdjust="spacingAndGlyphs">偏差A上[2.00]1.37314</text>
<text x="919.8" y="98" fill="#1e7fff" stroke="#1e7fff" stroke-width="0.25" textLength="109.8" lengthAdjust="spacingAndGlyphs">偏差A下[2.00]1.34889</text>
<text x="1037.5" y="98" fill="#66aaff" stroke="#66aaff" stroke-width="0.25" textLength="43" lengthAdjust="spacingAndGlyphs">偏差B上</text>
</g>
<g clip-path="url(#c3)">
<text x="1133.0" y="70" fill="#000" stroke="#000" stroke-width="0.25" textLength="89.8" lengthAdjust="spacingAndGlyphs">2014/06/03 12:00</text>
<text x="1230.4" y="70" fill="#000" stroke="#000" stroke-width="0.25" textLength="58.6" lengthAdjust="spacingAndGlyphs">始値:86.512</text>
<text x="1296.2" y="70" fill="#000" stroke="#000" stroke-width="0.25" textLength="58.4" lengthAdjust="spacingAndGlyphs">高値:86.611</text>
<text x="1362.4" y="70" fill="#000" stroke="#000" stroke-width="0.25" textLength="58.1" lengthAdjust="spacingAndGlyphs">安値:86.494</text>
<text x="1428.4" y="70" fill="#000" stroke="#000" stroke-width="0.25" textLength="58.3" lengthAdjust="spacingAndGlyphs">終値:86.609</text>
<text x="1134.5" y="84" fill="#000" stroke="#000" stroke-width="0.25" textLength="77" lengthAdjust="spacingAndGlyphs">単純移動平均:</text>
<text x="1215.9" y="84" fill="#9900ff" stroke="#9900ff" stroke-width="0.25" textLength="70.8" lengthAdjust="spacingAndGlyphs">短期[5]86.522</text>
<text x="1294.2" y="84" fill="#ff6600" stroke="#ff6600" stroke-width="0.25" textLength="77.0" lengthAdjust="spacingAndGlyphs">長期[21]86.497</text>
<text x="1134.5" y="98" fill="#000" stroke="#000" stroke-width="0.25" textLength="85.5" lengthAdjust="spacingAndGlyphs">ボリンジャーバンド:</text>
<text x="1225.2" y="98" fill="#0022ff" stroke="#0022ff" stroke-width="0.25" textLength="88.6" lengthAdjust="spacingAndGlyphs">基準線[21]86.497</text>
<text x="1321.6" y="98" fill="#1e7fff" stroke="#1e7fff" stroke-width="0.25" textLength="103.9" lengthAdjust="spacingAndGlyphs">偏差A上[2.00]86.660</text>
<text x="1433.5" y="98" fill="#1e7fff" stroke="#1e7fff" stroke-width="0.25" textLength="104" lengthAdjust="spacingAndGlyphs">偏差A下[2.00]86.334</text>
<text x="1545.4" y="98" fill="#66aaff" stroke="#66aaff" stroke-width="0.25" textLength="52.1" lengthAdjust="spacingAndGlyphs">偏差B上[3</text>
</g>
<text x="126.3" y="117" fill="#000" stroke="#000" stroke-width="0.25" textLength="41.5" lengthAdjust="spacingAndGlyphs">2014/03</text>
<text x="222.0" y="117" fill="#000" stroke="#000" stroke-width="0.25" textLength="41.5" lengthAdjust="spacingAndGlyphs">2014/04</text>
<text x="323.1" y="117" fill="#000" stroke="#000" stroke-width="0.25" textLength="41.5" lengthAdjust="spacingAndGlyphs">2014/05</text>
<text x="424.2" y="117" fill="#000" stroke="#000" stroke-width="0.25" textLength="41.5" lengthAdjust="spacingAndGlyphs">2014/06</text>
<text x="507.5" y="155.0" fill="#000" stroke="#000" stroke-width="0.25" textLength="37.5" lengthAdjust="spacingAndGlyphs">107.000</text>
<text x="507.5" y="201.3" fill="#000" stroke="#000" stroke-width="0.25" textLength="37.5" lengthAdjust="spacingAndGlyphs">106.000</text>
<text x="507.5" y="247.6" fill="#000" stroke="#000" stroke-width="0.25" textLength="37.5" lengthAdjust="spacingAndGlyphs">105.000</text>
<text x="507.5" y="293.9" fill="#000" stroke="#000" stroke-width="0.25" textLength="37.5" lengthAdjust="spacingAndGlyphs">104.000</text>
<text x="507.5" y="340.2" fill="#000" stroke="#000" stroke-width="0.25" textLength="37.5" lengthAdjust="spacingAndGlyphs">103.000</text>
<text x="507.5" y="386.6" fill="#000" stroke="#000" stroke-width="0.25" textLength="37.5" lengthAdjust="spacingAndGlyphs">102.000</text>
<text x="507.5" y="432.9" fill="#000" stroke="#000" stroke-width="0.25" textLength="37.5" lengthAdjust="spacingAndGlyphs">101.000</text>
<text x="507.5" y="479.2" fill="#000" stroke="#000" stroke-width="0.25" textLength="37.5" lengthAdjust="spacingAndGlyphs">100.000</text>
<text x="510.0" y="525.5" fill="#000" stroke="#000" stroke-width="0.25" textLength="35.0" lengthAdjust="spacingAndGlyphs">99.000</text>
<text x="520.1" y="598.5" fill="#000" stroke="#000" stroke-width="0.25" textLength="11.7" lengthAdjust="spacingAndGlyphs">70</text>
<text x="520.1" y="625.8" fill="#000" stroke="#000" stroke-width="0.25" textLength="11.7" lengthAdjust="spacingAndGlyphs">50</text>
<text x="520.1" y="652" fill="#000" stroke="#000" stroke-width="0.25" textLength="11.7" lengthAdjust="spacingAndGlyphs">30</text>
<text x="510.1" y="766" fill="#000" stroke="#000" stroke-width="0.25" textLength="31.6" lengthAdjust="spacingAndGlyphs">0.0000</text>
<text x="503.7" y="829" fill="#000" stroke="#000" stroke-width="0.25" textLength="44.0" lengthAdjust="spacingAndGlyphs">-50.0000</text>
<text x="40.7" y="553" fill="#000" stroke="#000" stroke-width="0.25" textLength="21.8" lengthAdjust="spacingAndGlyphs">RSI:</text>
<text x="68.2" y="553" fill="#9900ff" stroke="#9900ff" stroke-width="0.25" textLength="68.3" lengthAdjust="spacingAndGlyphs">短期[9]-----</text>
<text x="143.9" y="553" fill="#ff6600" stroke="#ff6600" stroke-width="0.25" textLength="74.6" lengthAdjust="spacingAndGlyphs">長期[42]-----</text>
<text x="40.5" y="709.5" fill="#000" stroke="#000" stroke-width="0.25" textLength="36" lengthAdjust="spacingAndGlyphs">MACD:</text>
<text x="83.7" y="709.5" fill="#ff0000" stroke="#ff0000" stroke-width="0.25" textLength="100.7" lengthAdjust="spacingAndGlyphs">MACD[12-26]-----</text>
<text x="191.7" y="709.5" fill="#00b0c0" stroke="#00b0c0" stroke-width="0.25" textLength="82.8" lengthAdjust="spacingAndGlyphs">シグナル[9]-----</text>
<text x="282.2" y="709.5" fill="#8c8c8c" stroke="#8c8c8c" stroke-width="0.25" textLength="54.1" lengthAdjust="spacingAndGlyphs">乖離-----</text>
<text x="685.2" y="113" fill="#000" stroke="#000" stroke-width="0.25" textLength="41.6" lengthAdjust="spacingAndGlyphs">2014/03</text>
<text x="771.2" y="113" fill="#000" stroke="#000" stroke-width="0.25" textLength="41.6" lengthAdjust="spacingAndGlyphs">2014/04</text>
<text x="862.3" y="113" fill="#000" stroke="#000" stroke-width="0.25" textLength="41.6" lengthAdjust="spacingAndGlyphs">2014/05</text>
<text x="953.4" y="113" fill="#000" stroke="#000" stroke-width="0.25" textLength="41.6" lengthAdjust="spacingAndGlyphs">2014/06</text>
<text x="1030.0" y="131.2" fill="#000" stroke="#000" stroke-width="0.25" textLength="37.5" lengthAdjust="spacingAndGlyphs">1.41000</text>
<text x="1030.0" y="157.1" fill="#000" stroke="#000" stroke-width="0.25" textLength="37.5" lengthAdjust="spacingAndGlyphs">1.40500</text>
<text x="1030.0" y="183.0" fill="#000" stroke="#000" stroke-width="0.25" textLength="37.5" lengthAdjust="spacingAndGlyphs">1.40000</text>
<text x="1030.0" y="208.9" fill="#000" stroke="#000" stroke-width="0.25" textLength="37.5" lengthAdjust="spacingAndGlyphs">1.39500</text>
<text x="1030.0" y="234.7" fill="#000" stroke="#000" stroke-width="0.25" textLength="37.5" lengthAdjust="spacingAndGlyphs">1.39000</text>
<text x="1030.0" y="260.6" fill="#000" stroke="#000" stroke-width="0.25" textLength="37.5" lengthAdjust="spacingAndGlyphs">1.38500</text>
<text x="1030.0" y="286.5" fill="#000" stroke="#000" stroke-width="0.25" textLength="37.5" lengthAdjust="spacingAndGlyphs">1.38000</text>
<text x="1030.0" y="312.3" fill="#000" stroke="#000" stroke-width="0.25" textLength="37.5" lengthAdjust="spacingAndGlyphs">1.37500</text>
<text x="1030.0" y="338.2" fill="#000" stroke="#000" stroke-width="0.25" textLength="37.5" lengthAdjust="spacingAndGlyphs">1.37000</text>
<text x="1030.0" y="364.1" fill="#000" stroke="#000" stroke-width="0.25" textLength="37.5" lengthAdjust="spacingAndGlyphs">1.36500</text>
<text x="1030.0" y="389.9" fill="#000" stroke="#000" stroke-width="0.25" textLength="37.5" lengthAdjust="spacingAndGlyphs">1.36000</text>
<text x="1030.0" y="415.8" fill="#000" stroke="#000" stroke-width="0.25" textLength="37.5" lengthAdjust="spacingAndGlyphs">1.35500</text>
<text x="1030.0" y="441.7" fill="#000" stroke="#000" stroke-width="0.25" textLength="37.5" lengthAdjust="spacingAndGlyphs">1.35000</text>
<text x="1030.0" y="467.6" fill="#000" stroke="#000" stroke-width="0.25" textLength="37.5" lengthAdjust="spacingAndGlyphs">1.34500</text>
<text x="1030.0" y="493.4" fill="#000" stroke="#000" stroke-width="0.25" textLength="37.5" lengthAdjust="spacingAndGlyphs">1.34000</text>
<text x="1030.0" y="519.3" fill="#000" stroke="#000" stroke-width="0.25" textLength="37.5" lengthAdjust="spacingAndGlyphs">1.33500</text>
<text x="1041.9" y="596.5" fill="#000" stroke="#000" stroke-width="0.25" textLength="12.3" lengthAdjust="spacingAndGlyphs">70</text>
<text x="1041.9" y="623.8" fill="#000" stroke="#000" stroke-width="0.25" textLength="12.3" lengthAdjust="spacingAndGlyphs">50</text>
<text x="1041.9" y="650.4" fill="#000" stroke="#000" stroke-width="0.25" textLength="12.3" lengthAdjust="spacingAndGlyphs">30</text>
<text x="1031.7" y="743" fill="#000" stroke="#000" stroke-width="0.25" textLength="32.4" lengthAdjust="spacingAndGlyphs">0.5000</text>
<text x="1031.7" y="789" fill="#000" stroke="#000" stroke-width="0.25" textLength="32.4" lengthAdjust="spacingAndGlyphs">0.0000</text>
<text x="1028.3" y="835" fill="#000" stroke="#000" stroke-width="0.25" textLength="38.5" lengthAdjust="spacingAndGlyphs">-0.5000</text>
<text x="608.6" y="551" fill="#000" stroke="#000" stroke-width="0.25" textLength="21.9" lengthAdjust="spacingAndGlyphs">RSI:</text>
<text x="636.0" y="551" fill="#9900ff" stroke="#9900ff" stroke-width="0.25" textLength="77.0" lengthAdjust="spacingAndGlyphs">短期[9]38.7335</text>
<text x="720.5" y="551" fill="#ff6600" stroke="#ff6600" stroke-width="0.25" textLength="82.1" lengthAdjust="spacingAndGlyphs">長期[42]48.4064</text>
<text x="608.5" y="709" fill="#000" stroke="#000" stroke-width="0.25" textLength="36" lengthAdjust="spacingAndGlyphs">MACD:</text>
<text x="651.8" y="709" fill="#ff0000" stroke="#ff0000" stroke-width="0.25" textLength="108.9" lengthAdjust="spacingAndGlyphs">MACD[12-26]-0.2207</text>
<text x="767.5" y="709" fill="#00b0c0" stroke="#00b0c0" stroke-width="0.25" textLength="91.4" lengthAdjust="spacingAndGlyphs">シグナル[9]-0.1178</text>
<text x="866.4" y="709" fill="#8c8c8c" stroke="#8c8c8c" stroke-width="0.25" textLength="63.0" lengthAdjust="spacingAndGlyphs">乖離-0.1029</text>
<text x="1274.1" y="113" fill="#000" stroke="#000" stroke-width="0.25" textLength="29.6" lengthAdjust="spacingAndGlyphs">06/05</text>
<text x="1369.9" y="113" fill="#000" stroke="#000" stroke-width="0.25" textLength="29.6" lengthAdjust="spacingAndGlyphs">06/06</text>
<text x="1467.1" y="113" fill="#000" stroke="#000" stroke-width="0.25" textLength="29.6" lengthAdjust="spacingAndGlyphs">06/07</text>
<text x="1549.0" y="146.8" fill="#000" stroke="#000" stroke-width="0.25" textLength="32.0" lengthAdjust="spacingAndGlyphs">87.600</text>
<text x="1549.0" y="190.4" fill="#000" stroke="#000" stroke-width="0.25" textLength="32.0" lengthAdjust="spacingAndGlyphs">87.400</text>
<text x="1549.0" y="234.0" fill="#000" stroke="#000" stroke-width="0.25" textLength="32.0" lengthAdjust="spacingAndGlyphs">87.200</text>
<text x="1549.0" y="277.6" fill="#000" stroke="#000" stroke-width="0.25" textLength="32.0" lengthAdjust="spacingAndGlyphs">87.000</text>
<text x="1549.0" y="321.2" fill="#000" stroke="#000" stroke-width="0.25" textLength="32.0" lengthAdjust="spacingAndGlyphs">86.800</text>
<text x="1549.0" y="364.9" fill="#000" stroke="#000" stroke-width="0.25" textLength="32.0" lengthAdjust="spacingAndGlyphs">86.600</text>
<text x="1549.0" y="408.5" fill="#000" stroke="#000" stroke-width="0.25" textLength="32.0" lengthAdjust="spacingAndGlyphs">86.400</text>
<text x="1549.0" y="452.1" fill="#000" stroke="#000" stroke-width="0.25" textLength="32.0" lengthAdjust="spacingAndGlyphs">86.200</text>
<text x="1549.0" y="495.8" fill="#000" stroke="#000" stroke-width="0.25" textLength="32.0" lengthAdjust="spacingAndGlyphs">86.000</text>
<text x="1558.9" y="596.5" fill="#000" stroke="#000" stroke-width="0.25" textLength="12.3" lengthAdjust="spacingAndGlyphs">70</text>
<text x="1558.9" y="623.8" fill="#000" stroke="#000" stroke-width="0.25" textLength="12.3" lengthAdjust="spacingAndGlyphs">50</text>
<text x="1558.9" y="650.4" fill="#000" stroke="#000" stroke-width="0.25" textLength="12.3" lengthAdjust="spacingAndGlyphs">30</text>
<text x="1546.3" y="731" fill="#000" stroke="#000" stroke-width="0.25" textLength="37.5" lengthAdjust="spacingAndGlyphs">15.0000</text>
<text x="1546.3" y="759" fill="#000" stroke="#000" stroke-width="0.25" textLength="37.5" lengthAdjust="spacingAndGlyphs">10.0000</text>
<text x="1548.7" y="786" fill="#000" stroke="#000" stroke-width="0.25" textLength="32.4" lengthAdjust="spacingAndGlyphs">5.0000</text>
<text x="1548.7" y="813" fill="#000" stroke="#000" stroke-width="0.25" textLength="32.4" lengthAdjust="spacingAndGlyphs">0.0000</text>
<text x="1544.5" y="840" fill="#000" stroke="#000" stroke-width="0.25" textLength="38.5" lengthAdjust="spacingAndGlyphs">-5.0000</text>
<text x="1135.1" y="551" fill="#000" stroke="#000" stroke-width="0.25" textLength="21.9" lengthAdjust="spacingAndGlyphs">RSI:</text>
<text x="1161.4" y="551" fill="#9900ff" stroke="#9900ff" stroke-width="0.25" textLength="77.6" lengthAdjust="spacingAndGlyphs">短期[9]64.9991</text>
<text x="1246.1" y="551" fill="#ff6600" stroke="#ff6600" stroke-width="0.25" textLength="82.7" lengthAdjust="spacingAndGlyphs">長期[42]52.7240</text>
<text x="1135.1" y="709" fill="#000" stroke="#000" stroke-width="0.25" textLength="35.9" lengthAdjust="spacingAndGlyphs">MACD:</text>
<text x="1177.5" y="709" fill="#ff0000" stroke="#ff0000" stroke-width="0.25" textLength="103.2" lengthAdjust="spacingAndGlyphs">MACD[12-26]3.2635</text>
<text x="1287.9" y="709" fill="#00b0c0" stroke="#00b0c0" stroke-width="0.25" textLength="85.1" lengthAdjust="spacingAndGlyphs">シグナル[9]3.4150</text>
<text x="1380.2" y="709" fill="#8c8c8c" stroke="#8c8c8c" stroke-width="0.25" textLength="62.4" lengthAdjust="spacingAndGlyphs">乖離-0.1515</text>
<clipPath id="w1m"><rect x="39" y="119" width="455" height="411"/></clipPath><g clip-path="url(#w1m)">
<rect x="42" y="119" width="1" height="411" fill="#262626"/><rect x="47" y="119" width="1" height="411" fill="#262626"/><rect x="51" y="119" width="1" height="411" fill="#262626"/><rect x="56" y="119" width="1" height="411" fill="#262626"/><rect x="60" y="119" width="1" height="411" fill="#3d3d3d"/><rect x="65" y="119" width="1" height="411" fill="#262626"/><rect x="69" y="119" width="1" height="411" fill="#262626"/><rect x="74" y="119" width="1" height="411" fill="#262626"/><rect x="78" y="119" width="1" height="411" fill="#262626"/><rect x="83" y="119" width="1" height="411" fill="#3d3d3d"/><rect x="88" y="119" width="1" height="411" fill="#262626"/><rect x="92" y="119" width="1" height="411" fill="#262626"/><rect x="97" y="119" width="1" height="411" fill="#262626"/><rect x="101" y="119" width="1" height="411" fill="#262626"/><rect x="106" y="119" width="1" height="411" fill="#3d3d3d"/><rect x="110" y="119" width="1" height="411" fill="#262626"/><rect x="115" y="119" width="1" height="411" fill="#262626"/><rect x="119" y="119" width="1" height="411" fill="#262626"/><rect x="124" y="119" width="1" height="411" fill="#262626"/><rect x="128" y="119" width="1" height="411" fill="#3d3d3d"/><rect x="133" y="119" width="1" height="411" fill="#262626"/><rect x="138" y="119" width="1" height="411" fill="#262626"/><rect x="142" y="119" width="1" height="411" fill="#262626"/><rect x="147" y="119" width="1" height="411" fill="#262626"/><rect x="151" y="119" width="1" height="411" fill="#3d3d3d"/><rect x="156" y="119" width="1" height="411" fill="#262626"/><rect x="160" y="119" width="1" height="411" fill="#262626"/><rect x="165" y="119" width="1" height="411" fill="#262626"/><rect x="169" y="119" width="1" height="411" fill="#262626"/><rect x="174" y="119" width="1" height="411" fill="#3d3d3d"/><rect x="179" y="119" width="1" height="411" fill="#262626"/><rect x="183" y="119" width="1" height="411" fill="#262626"/><rect x="188" y="119" width="1" height="411" fill="#262626"/><rect x="192" y="119" width="1" height="411" fill="#262626"/><rect x="197" y="119" width="1" height="411" fill="#3d3d3d"/><rect x="201" y="119" width="1" height="411" fill="#262626"/><rect x="206" y="119" width="1" height="411" fill="#262626"/><rect x="210" y="119" width="1" height="411" fill="#262626"/><rect x="215" y="119" width="1" height="411" fill="#262626"/><rect x="219" y="119" width="1" height="411" fill="#3d3d3d"/><rect x="224" y="119" width="1" height="411" fill="#262626"/><rect x="229" y="119" width="1" height="411" fill="#262626"/><rect x="233" y="119" width="1" height="411" fill="#262626"/><rect x="238" y="119" width="1" height="411" fill="#262626"/><rect x="242" y="119" width="1" height="411" fill="#3d3d3d"/><rect x="247" y="119" width="1" height="411" fill="#262626"/><rect x="251" y="119" width="1" height="411" fill="#262626"/><rect x="256" y="119" width="1" height="411" fill="#262626"/><rect x="260" y="119" width="1" height="411" fill="#262626"/><rect x="265" y="119" width="1" height="411" fill="#3d3d3d"/><rect x="270" y="119" width="1" height="411" fill="#262626"/><rect x="274" y="119" width="1" height="411" fill="#262626"/><rect x="279" y="119" width="1" height="411" fill="#262626"/><rect x="283" y="119" width="1" height="411" fill="#262626"/><rect x="288" y="119" width="1" height="411" fill="#3d3d3d"/><rect x="292" y="119" width="1" height="411" fill="#262626"/><rect x="297" y="119" width="1" height="411" fill="#262626"/><rect x="301" y="119" width="1" height="411" fill="#262626"/><rect x="306" y="119" width="1" height="411" fill="#262626"/><rect x="310" y="119" width="1" height="411" fill="#3d3d3d"/><rect x="315" y="119" width="1" height="411" fill="#262626"/><rect x="320" y="119" width="1" height="411" fill="#262626"/><rect x="324" y="119" width="1" height="411" fill="#262626"/><rect x="329" y="119" width="1" height="411" fill="#262626"/><rect x="333" y="119" width="1" height="411" fill="#3d3d3d"/><rect x="338" y="119" width="1" height="411" fill="#262626"/><rect x="342" y="119" width="1" height="411" fill="#262626"/><rect x="347" y="119" width="1" height="411" fill="#262626"/><rect x="351" y="119" width="1" height="411" fill="#262626"/><rect x="356" y="119" width="1" height="411" fill="#3d3d3d"/><rect x="361" y="119" width="1" height="411" fill="#262626"/><rect x="365" y="119" width="1" height="411" fill="#262626"/><rect x="370" y="119" width="1" height="411" fill="#262626"/><rect x="374" y="119" width="1" height="411" fill="#262626"/><rect x="379" y="119" width="1" height="411" fill="#3d3d3d"/><rect x="383" y="119" width="1" height="411" fill="#262626"/><rect x="388" y="119" width="1" height="411" fill="#262626"/><rect x="392" y="119" width="1" height="411" fill="#262626"/><rect x="397" y="119" width="1" height="411" fill="#262626"/><rect x="401" y="119" width="1" height="411" fill="#3d3d3d"/><rect x="406" y="119" width="1" height="411" fill="#262626"/><rect x="411" y="119" width="1" height="411" fill="#262626"/><rect x="415" y="119" width="1" height="411" fill="#262626"/><rect x="420" y="119" width="1" height="411" fill="#262626"/><rect x="424" y="119" width="1" height="411" fill="#3d3d3d"/><rect x="429" y="119" width="1" height="411" fill="#262626"/><rect x="433" y="119" width="1" height="411" fill="#262626"/><rect x="438" y="119" width="1" height="411" fill="#262626"/><rect x="442" y="119" width="1" height="411" fill="#262626"/><rect x="447" y="119" width="1" height="411" fill="#3d3d3d"/><rect x="452" y="119" width="1" height="411" fill="#262626"/><rect x="456" y="119" width="1" height="411" fill="#262626"/><rect x="461" y="119" width="1" height="411" fill="#262626"/><rect x="465" y="119" width="1" height="411" fill="#262626"/><rect x="470" y="119" width="1" height="411" fill="#3d3d3d"/><rect x="474" y="119" width="1" height="411" fill="#262626"/><rect x="479" y="119" width="1" height="411" fill="#262626"/><rect x="483" y="119" width="1" height="411" fill="#262626"/><rect x="488" y="119" width="1" height="411" fill="#262626"/><rect x="492" y="119" width="1" height="411" fill="#3d3d3d"/><rect x="39" y="119" width="455" height="1" fill="#262626"/><rect x="39" y="123" width="455" height="1" fill="#262626"/><rect x="39" y="128" width="455" height="1" fill="#262626"/><rect x="39" y="132" width="455" height="1" fill="#262626"/><rect x="39" y="137" width="455" height="1" fill="#262626"/><rect x="39" y="142" width="455" height="1" fill="#262626"/><rect x="39" y="146" width="455" height="1" fill="#262626"/><rect x="39" y="151" width="455" height="1" fill="#3d3d3d"/><rect x="39" y="156" width="455" height="1" fill="#262626"/><rect x="39" y="160" width="455" height="1" fill="#262626"/><rect x="39" y="165" width="455" height="1" fill="#262626"/><rect x="39" y="170" width="455" height="1" fill="#262626"/><rect x="39" y="174" width="455" height="1" fill="#262626"/><rect x="39" y="179" width="455" height="1" fill="#262626"/><rect x="39" y="183" width="455" height="1" fill="#262626"/><rect x="39" y="188" width="455" height="1" fill="#262626"/><rect x="39" y="193" width="455" height="1" fill="#262626"/><rect x="39" y="197" width="455" height="1" fill="#3d3d3d"/><rect x="39" y="202" width="455" height="1" fill="#262626"/><rect x="39" y="207" width="455" height="1" fill="#262626"/><rect x="39" y="211" width="455" height="1" fill="#262626"/><rect x="39" y="216" width="455" height="1" fill="#262626"/><rect x="39" y="220" width="455" height="1" fill="#262626"/><rect x="39" y="225" width="455" height="1" fill="#262626"/><rect x="39" y="230" width="455" height="1" fill="#262626"/><rect x="39" y="234" width="455" height="1" fill="#262626"/><rect x="39" y="239" width="455" height="1" fill="#262626"/><rect x="39" y="244" width="455" height="1" fill="#3d3d3d"/><rect x="39" y="248" width="455" height="1" fill="#262626"/><rect x="39" y="253" width="455" height="1" fill="#262626"/><rect x="39" y="258" width="455" height="1" fill="#262626"/><rect x="39" y="262" width="455" height="1" fill="#262626"/><rect x="39" y="267" width="455" height="1" fill="#262626"/><rect x="39" y="271" width="455" height="1" fill="#262626"/><rect x="39" y="276" width="455" height="1" fill="#262626"/><rect x="39" y="281" width="455" height="1" fill="#262626"/><rect x="39" y="285" width="455" height="1" fill="#262626"/><rect x="39" y="290" width="455" height="1" fill="#3d3d3d"/><rect x="39" y="295" width="455" height="1" fill="#262626"/><rect x="39" y="299" width="455" height="1" fill="#262626"/><rect x="39" y="304" width="455" height="1" fill="#262626"/><rect x="39" y="308" width="455" height="1" fill="#262626"/><rect x="39" y="313" width="455" height="1" fill="#262626"/><rect x="39" y="318" width="455" height="1" fill="#262626"/><rect x="39" y="322" width="455" height="1" fill="#262626"/><rect x="39" y="327" width="455" height="1" fill="#262626"/><rect x="39" y="332" width="455" height="1" fill="#262626"/><rect x="39" y="336" width="455" height="1" fill="#3d3d3d"/><rect x="39" y="341" width="455" height="1" fill="#262626"/><rect x="39" y="346" width="455" height="1" fill="#262626"/><rect x="39" y="350" width="455" height="1" fill="#262626"/><rect x="39" y="355" width="455" height="1" fill="#262626"/><rect x="39" y="359" width="455" height="1" fill="#262626"/><rect x="39" y="364" width="455" height="1" fill="#262626"/><rect x="39" y="369" width="455" height="1" fill="#262626"/><rect x="39" y="373" width="455" height="1" fill="#262626"/><rect x="39" y="378" width="455" height="1" fill="#262626"/><rect x="39" y="383" width="455" height="1" fill="#3d3d3d"/><rect x="39" y="387" width="455" height="1" fill="#262626"/><rect x="39" y="392" width="455" height="1" fill="#262626"/><rect x="39" y="396" width="455" height="1" fill="#262626"/><rect x="39" y="401" width="455" height="1" fill="#262626"/><rect x="39" y="406" width="455" height="1" fill="#262626"/><rect x="39" y="410" width="455" height="1" fill="#262626"/><rect x="39" y="415" width="455" height="1" fill="#262626"/><rect x="39" y="420" width="455" height="1" fill="#262626"/><rect x="39" y="424" width="455" height="1" fill="#262626"/><rect x="39" y="429" width="455" height="1" fill="#3d3d3d"/><rect x="39" y="433" width="455" height="1" fill="#262626"/><rect x="39" y="438" width="455" height="1" fill="#262626"/><rect x="39" y="443" width="455" height="1" fill="#262626"/><rect x="39" y="447" width="455" height="1" fill="#262626"/><rect x="39" y="452" width="455" height="1" fill="#262626"/><rect x="39" y="457" width="455" height="1" fill="#262626"/><rect x="39" y="461" width="455" height="1" fill="#262626"/><rect x="39" y="466" width="455" height="1" fill="#262626"/><rect x="39" y="471" width="455" height="1" fill="#262626"/><rect x="39" y="475" width="455" height="1" fill="#3d3d3d"/><rect x="39" y="480" width="455" height="1" fill="#262626"/><rect x="39" y="484" width="455" height="1" fill="#262626"/><rect x="39" y="489" width="455" height="1" fill="#262626"/><rect x="39" y="494" width="455" height="1" fill="#262626"/><rect x="39" y="498" width="455" height="1" fill="#262626"/><rect x="39" y="503" width="455" height="1" fill="#262626"/><rect x="39" y="508" width="455" height="1" fill="#262626"/><rect x="39" y="512" width="455" height="1" fill="#262626"/><rect x="39" y="517" width="455" height="1" fill="#262626"/><rect x="39" y="521" width="455" height="1" fill="#3d3d3d"/><rect x="39" y="526" width="455" height="1" fill="#262626"/><rect x="128" y="119" width="1" height="411" fill="#6a6a6a"/><rect x="224" y="119" width="1" height="411" fill="#6a6a6a"/><rect x="324" y="119" width="1" height="411" fill="#6a6a6a"/><rect x="424" y="119" width="1" height="411" fill="#6a6a6a"/><rect x="449" y="119" width="1" height="411" fill="#8a8a8a"/>
<rect x="39" y="120" width="455" height="1" fill="#5a5a5a"/>
<rect x="39" y="360" width="455" height="1" fill="#ff9a00"/>
<rect x="40" y="363.8" width="1" height="76.5" fill="#4646ff"/><rect x="38.5" y="365.2" width="3" height="65.3" fill="#3a3ad0" stroke="#4646ff" stroke-width="1"/><rect x="45" y="398.4" width="1" height="42.8" fill="#ff2222"/><rect x="43.5" y="400.7" width="3" height="29.0" fill="#c81e1e" stroke="#ff2222" stroke-width="1"/><rect x="50" y="394.7" width="1" height="44.6" fill="#4646ff"/><rect x="48.5" y="399.8" width="3" height="8.1" fill="#3a3ad0" stroke="#4646ff" stroke-width="1"/><rect x="54" y="374.7" width="1" height="43.7" fill="#ff2222"/><rect x="52.5" y="379.7" width="3" height="27.3" fill="#c81e1e" stroke="#ff2222" stroke-width="1"/><rect x="59" y="361.0" width="1" height="51.0" fill="#ff2222"/><rect x="57.5" y="368.8" width="3" height="9.9" fill="#c81e1e" stroke="#ff2222" stroke-width="1"/><rect x="63" y="354.6" width="1" height="29.2" fill="#4646ff"/><rect x="61.5" y="359.7" width="3" height="12.7" fill="#3a3ad0" stroke="#4646ff" stroke-width="1"/><rect x="68" y="351.0" width="1" height="27.3" fill="#ff2222"/><rect x="66.5" y="355.1" width="3" height="17.3" fill="#c81e1e" stroke="#ff2222" stroke-width="1"/><rect x="72" y="351.9" width="1" height="21.9" fill="#4646ff"/><rect x="70.5" y="353.3" width="3" height="5.4" fill="#3a3ad0" stroke="#4646ff" stroke-width="1"/><rect x="77" y="357.4" width="1" height="40.0" fill="#4646ff"/><rect x="75.5" y="359.7" width="3" height="16.3" fill="#3a3ad0" stroke="#4646ff" stroke-width="1"/><rect x="81" y="372.9" width="1" height="30.9" fill="#4646ff"/><rect x="79.5" y="374.3" width="3" height="18.1" fill="#3a3ad0" stroke="#4646ff" stroke-width="1"/><rect x="86" y="383.8" width="1" height="29.1" fill="#ff2222"/><rect x="84.5" y="388.8" width="3" height="11.8" fill="#c81e1e" stroke="#ff2222" stroke-width="1"/><rect x="91" y="349.2" width="1" height="45.5" fill="#ff2222"/><rect x="89.5" y="367.9" width="3" height="19.9" fill="#c81e1e" stroke="#ff2222" stroke-width="1"/><rect x="95" y="361.9" width="1" height="30.1" fill="#4646ff"/><rect x="93.5" y="368.8" width="3" height="1.0" fill="#3a3ad0" stroke="#4646ff" stroke-width="1"/><rect x="100" y="363.8" width="1" height="36.4" fill="#4646ff"/><rect x="98.5" y="368.5" width="3" height="3.0" fill="#3a3ad0" stroke="#4646ff" stroke-width="1"/><rect x="104" y="344.6" width="1" height="31.0" fill="#ff2222"/><rect x="102.5" y="359.7" width="3" height="9.0" fill="#c81e1e" stroke="#ff2222" stroke-width="1"/><rect x="109" y="351.9" width="1" height="23.7" fill="#ff2222"/><rect x="107.5" y="361.5" width="3" height="1.0" fill="#c81e1e" stroke="#ff2222" stroke-width="1"/><rect x="113" y="353.7" width="1" height="30.1" fill="#4646ff"/><rect x="111.5" y="361.5" width="3" height="11.8" fill="#3a3ad0" stroke="#4646ff" stroke-width="1"/><rect x="118" y="360.1" width="1" height="19.2" fill="#ff2222"/><rect x="116.5" y="367.0" width="3" height="6.3" fill="#c81e1e" stroke="#ff2222" stroke-width="1"/><rect x="122" y="362.8" width="1" height="33.8" fill="#4646ff"/><rect x="120.5" y="367.0" width="3" height="9.0" fill="#3a3ad0" stroke="#4646ff" stroke-width="1"/><rect x="127" y="372.0" width="1" height="33.7" fill="#4646ff"/><rect x="125.5" y="377.0" width="3" height="15.4" fill="#3a3ad0" stroke="#4646ff" stroke-width="1"/><rect x="131" y="399.3" width="1" height="20.9" fill="#4646ff"/><rect x="129.5" y="408.9" width="3" height="1.0" fill="#3a3ad0" stroke="#4646ff" stroke-width="1"/><rect x="136" y="370.1" width="1" height="41.9" fill="#ff2222"/><rect x="134.5" y="373.4" width="3" height="36.3" fill="#c81e1e" stroke="#ff2222" stroke-width="1"/><rect x="141" y="358.3" width="1" height="20.0" fill="#ff2222"/><rect x="139.5" y="370.6" width="3" height="1.0" fill="#c81e1e" stroke="#ff2222" stroke-width="1"/><rect x="145" y="329.2" width="1" height="41.8" fill="#ff2222"/><rect x="143.5" y="334.2" width="3" height="35.4" fill="#c81e1e" stroke="#ff2222" stroke-width="1"/><rect x="150" y="301.9" width="1" height="43.7" fill="#ff2222"/><rect x="148.5" y="324.2" width="3" height="6.3" fill="#c81e1e" stroke="#ff2222" stroke-width="1"/><rect x="154" y="318.3" width="1" height="22.7" fill="#ff2222"/><rect x="152.5" y="325.7" width="3" height="5.7" fill="#c81e1e" stroke="#ff2222" stroke-width="1"/><rect x="159" y="317.3" width="1" height="27.4" fill="#4646ff"/><rect x="157.5" y="324.2" width="3" height="12.7" fill="#3a3ad0" stroke="#4646ff" stroke-width="1"/><rect x="163" y="333.7" width="1" height="24.6" fill="#4646ff"/><rect x="161.5" y="339.7" width="3" height="8.1" fill="#3a3ad0" stroke="#4646ff" stroke-width="1"/><rect x="168" y="343.8" width="1" height="60.1" fill="#4646ff"/><rect x="166.5" y="349.7" width="3" height="43.6" fill="#3a3ad0" stroke="#4646ff" stroke-width="1"/><rect x="172" y="389.3" width="1" height="31.0" fill="#4646ff"/><rect x="170.5" y="393.8" width="3" height="16.8" fill="#3a3ad0" stroke="#4646ff" stroke-width="1"/><rect x="177" y="389.3" width="1" height="28.2" fill="#ff2222"/><rect x="175.5" y="398.0" width="3" height="14.5" fill="#c81e1e" stroke="#ff2222" stroke-width="1"/><rect x="181" y="386.6" width="1" height="30.9" fill="#4646ff"/><rect x="179.5" y="395.3" width="3" height="13.5" fill="#3a3ad0" stroke="#4646ff" stroke-width="1"/><rect x="186" y="352.0" width="1" height="64.6" fill="#ff2222"/><rect x="184.5" y="367.9" width="3" height="42.7" fill="#c81e1e" stroke="#ff2222" stroke-width="1"/><rect x="191" y="358.3" width="1" height="15.5" fill="#ff2222"/><rect x="189.5" y="367.0" width="3" height="1.0" fill="#c81e1e" stroke="#ff2222" stroke-width="1"/><rect x="195" y="362.0" width="1" height="20.0" fill="#4646ff"/><rect x="193.5" y="364.7" width="3" height="8.6" fill="#3a3ad0" stroke="#4646ff" stroke-width="1"/><rect x="200" y="352.9" width="1" height="27.3" fill="#4646ff"/><rect x="198.5" y="372.5" width="3" height="1.0" fill="#3a3ad0" stroke="#4646ff" stroke-width="1"/><rect x="204" y="361.1" width="1" height="19.1" fill="#ff2222"/><rect x="202.5" y="371.6" width="3" height="2.6" fill="#c81e1e" stroke="#ff2222" stroke-width="1"/><rect x="209" y="362.9" width="1" height="27.3" fill="#4646ff"/><rect x="207.5" y="372.5" width="3" height="9.0" fill="#3a3ad0" stroke="#4646ff" stroke-width="1"/><rect x="213" y="362.9" width="1" height="33.7" fill="#ff2222"/><rect x="211.5" y="375.2" width="3" height="7.2" fill="#c81e1e" stroke="#ff2222" stroke-width="1"/><rect x="218" y="338.3" width="1" height="44.6" fill="#ff2222"/><rect x="216.5" y="346.1" width="3" height="28.1" fill="#c81e1e" stroke="#ff2222" stroke-width="1"/><rect x="222" y="317.4" width="1" height="30.0" fill="#ff2222"/><rect x="220.5" y="327.9" width="3" height="17.2" fill="#c81e1e" stroke="#ff2222" stroke-width="1"/><rect x="227" y="305.5" width="1" height="27.3" fill="#ff2222"/><rect x="225.5" y="307.8" width="3" height="19.1" fill="#c81e1e" stroke="#ff2222" stroke-width="1"/><rect x="232" y="293.7" width="1" height="17.3" fill="#ff2222"/><rect x="230.5" y="296.0" width="3" height="11.8" fill="#c81e1e" stroke="#ff2222" stroke-width="1"/><rect x="236" y="284.6" width="1" height="15.4" fill="#ff2222"/><rect x="234.5" y="293.3" width="3" height="2.6" fill="#c81e1e" stroke="#ff2222" stroke-width="1"/><rect x="241" y="283.7" width="1" height="45.5" fill="#4646ff"/><rect x="239.5" y="288.7" width="3" height="36.4" fill="#3a3ad0" stroke="#4646ff" stroke-width="1"/><rect x="245" y="319.2" width="1" height="18.2" fill="#4646ff"/><rect x="243.5" y="322.4" width="3" height="9.9" fill="#3a3ad0" stroke="#4646ff" stroke-width="1"/><rect x="250" y="331.0" width="1" height="73.8" fill="#4646ff"/><rect x="248.5" y="333.3" width="3" height="60.1" fill="#3a3ad0" stroke="#4646ff" stroke-width="1"/><rect x="254" y="376.6" width="1" height="20.0" fill="#ff2222"/><rect x="252.5" y="384.3" width="3" height="7.2" fill="#c81e1e" stroke="#ff2222" stroke-width="1"/><rect x="259" y="377.4" width="1" height="37.4" fill="#4646ff"/><rect x="257.5" y="384.3" width="3" height="20.9" fill="#3a3ad0" stroke="#4646ff" stroke-width="1"/><rect x="263" y="389.3" width="1" height="25.5" fill="#ff2222"/><rect x="261.5" y="400.7" width="3" height="4.5" fill="#c81e1e" stroke="#ff2222" stroke-width="1"/><rect x="268" y="383.8" width="1" height="27.3" fill="#ff2222"/><rect x="266.5" y="391.6" width="3" height="10.8" fill="#c81e1e" stroke="#ff2222" stroke-width="1"/><rect x="272" y="383.8" width="1" height="22.8" fill="#ff2222"/><rect x="270.5" y="388.0" width="3" height="2.6" fill="#c81e1e" stroke="#ff2222" stroke-width="1"/><rect x="277" y="366.5" width="1" height="25.5" fill="#ff2222"/><rect x="275.5" y="372.5" width="3" height="15.4" fill="#c81e1e" stroke="#ff2222" stroke-width="1"/><rect x="282" y="362.0" width="1" height="27.3" fill="#ff2222"/><rect x="280.5" y="365.2" width="3" height="8.1" fill="#c81e1e" stroke="#ff2222" stroke-width="1"/><rect x="286" y="358.3" width="1" height="10.9" fill="#ff2222"/><rect x="284.5" y="364.3" width="3" height="1.0" fill="#c81e1e" stroke="#ff2222" stroke-width="1"/><rect x="291" y="351.0" width="1" height="15.5" fill="#ff2222"/><rect x="289.5" y="357.0" width="3" height="6.3" fill="#c81e1e" stroke="#ff2222" stroke-width="1"/><rect x="295" y="350.1" width="1" height="13.7" fill="#4646ff"/><rect x="293.5" y="354.3" width="3" height="3.5" fill="#3a3ad0" stroke="#4646ff" stroke-width="1"/><rect x="300" y="351.0" width="1" height="24.6" fill="#4646ff"/><rect x="298.5" y="356.4" width="3" height="2.3" fill="#3a3ad0" stroke="#4646ff" stroke-width="1"/><rect x="304" y="352.8" width="1" height="26.5" fill="#4646ff"/><rect x="302.5" y="359.7" width="3" height="9.0" fill="#3a3ad0" stroke="#4646ff" stroke-width="1"/><rect x="309" y="364.7" width="1" height="20.9" fill="#4646ff"/><rect x="307.5" y="370.6" width="3" height="3.6" fill="#3a3ad0" stroke="#4646ff" stroke-width="1"/><rect x="313" y="355.5" width="1" height="26.5" fill="#ff2222"/><rect x="311.5" y="361.5" width="3" height="16.3" fill="#c81e1e" stroke="#ff2222" stroke-width="1"/><rect x="318" y="347.3" width="1" height="15.5" fill="#ff2222"/><rect x="316.5" y="354.2" width="3" height="6.3" fill="#c81e1e" stroke="#ff2222" stroke-width="1"/><rect x="322" y="353.7" width="1" height="29.2" fill="#4646ff"/><rect x="320.5" y="356.0" width="3" height="17.3" fill="#3a3ad0" stroke="#4646ff" stroke-width="1"/><rect x="327" y="367.4" width="1" height="10.0" fill="#ff2222"/><rect x="325.5" y="369.7" width="3" height="4.5" fill="#c81e1e" stroke="#ff2222" stroke-width="1"/><rect x="332" y="336.4" width="1" height="41.0" fill="#4646ff"/><rect x="330.5" y="369.7" width="3" height="4.5" fill="#3a3ad0" stroke="#4646ff" stroke-width="1"/><rect x="336" y="370.1" width="1" height="20.0" fill="#4646ff"/><rect x="334.5" y="373.4" width="3" height="2.6" fill="#3a3ad0" stroke="#4646ff" stroke-width="1"/><rect x="341" y="374.7" width="1" height="30.9" fill="#4646ff"/><rect x="339.5" y="377.0" width="3" height="21.8" fill="#3a3ad0" stroke="#4646ff" stroke-width="1"/><rect x="345" y="382.9" width="1" height="27.3" fill="#ff2222"/><rect x="343.5" y="388.8" width="3" height="10.0" fill="#c81e1e" stroke="#ff2222" stroke-width="1"/><rect x="350" y="384.7" width="1" height="21.8" fill="#4646ff"/><rect x="348.5" y="386.1" width="3" height="15.4" fill="#3a3ad0" stroke="#4646ff" stroke-width="1"/><rect x="354" y="390.1" width="1" height="14.6" fill="#ff2222"/><rect x="352.5" y="393.4" width="3" height="6.3" fill="#c81e1e" stroke="#ff2222" stroke-width="1"/><rect x="359" y="375.6" width="1" height="17.3" fill="#ff2222"/><rect x="357.5" y="378.8" width="3" height="12.7" fill="#c81e1e" stroke="#ff2222" stroke-width="1"/><rect x="363" y="367.4" width="1" height="14.6" fill="#ff2222"/><rect x="361.5" y="373.3" width="3" height="4.5" fill="#c81e1e" stroke="#ff2222" stroke-width="1"/><rect x="368" y="369.2" width="1" height="27.3" fill="#4646ff"/><rect x="366.5" y="371.5" width="3" height="17.2" fill="#3a3ad0" stroke="#4646ff" stroke-width="1"/><rect x="373" y="386.5" width="1" height="29.1" fill="#4646ff"/><rect x="371.5" y="389.7" width="3" height="13.6" fill="#3a3ad0" stroke="#4646ff" stroke-width="1"/><rect x="377" y="395.6" width="1" height="18.2" fill="#4646ff"/><rect x="375.5" y="404.3" width="3" height="1.0" fill="#3a3ad0" stroke="#4646ff" stroke-width="1"/><rect x="382" y="402.0" width="1" height="23.7" fill="#ff2222"/><rect x="380.5" y="407.0" width="3" height="1.0" fill="#c81e1e" stroke="#ff2222" stroke-width="1"/><rect x="386" y="406.5" width="1" height="14.6" fill="#4646ff"/><rect x="384.5" y="408.9" width="3" height="6.2" fill="#3a3ad0" stroke="#4646ff" stroke-width="1"/><rect x="391" y="401.1" width="1" height="36.3" fill="#ff2222"/><rect x="389.5" y="413.4" width="3" height="1.7" fill="#c81e1e" stroke="#ff2222" stroke-width="1"/><rect x="395" y="392.0" width="1" height="21.8" fill="#ff2222"/><rect x="393.5" y="397.9" width="3" height="14.5" fill="#c81e1e" stroke="#ff2222" stroke-width="1"/><rect x="400" y="383.8" width="1" height="19.1" fill="#ff2222"/><rect x="398.5" y="386.1" width="3" height="9.0" fill="#c81e1e" stroke="#ff2222" stroke-width="1"/><rect x="404" y="380.1" width="1" height="11.9" fill="#4646ff"/><rect x="402.5" y="385.2" width="3" height="1.0" fill="#3a3ad0" stroke="#4646ff" stroke-width="1"/><rect x="409" y="376.5" width="1" height="15.5" fill="#ff2222"/><rect x="407.5" y="384.3" width="3" height="2.6" fill="#c81e1e" stroke="#ff2222" stroke-width="1"/><rect x="413" y="382.0" width="1" height="18.8" fill="#4646ff"/><rect x="411.5" y="384.3" width="3" height="4.6" fill="#3a3ad0" stroke="#4646ff" stroke-width="1"/><rect x="418" y="388.3" width="1" height="22.7" fill="#4646ff"/><rect x="416.5" y="389.9" width="3" height="3.6" fill="#3a3ad0" stroke="#4646ff" stroke-width="1"/><rect x="423" y="390.5" width="1" height="17.1" fill="#4646ff"/><rect x="421.5" y="393.3" width="3" height="1.2" fill="#3a3ad0" stroke="#4646ff" stroke-width="1"/><rect x="427" y="361.0" width="1" height="34.7" fill="#ff2222"/><rect x="425.5" y="366.6" width="3" height="25.7" fill="#c81e1e" stroke="#ff2222" stroke-width="1"/><rect x="432" y="357.0" width="1" height="14.8" fill="#ff2222"/><rect x="430.5" y="360.3" width="3" height="5.3" fill="#c81e1e" stroke="#ff2222" stroke-width="1"/><rect x="436" y="345.6" width="1" height="18.2" fill="#ff2222"/><rect x="434.5" y="349.5" width="3" height="9.8" fill="#c81e1e" stroke="#ff2222" stroke-width="1"/><rect x="441" y="347.9" width="1" height="17.6" fill="#4646ff"/><rect x="439.5" y="349.5" width="3" height="14.4" fill="#3a3ad0" stroke="#4646ff" stroke-width="1"/><rect x="445" y="354.6" width="1" height="23.1" fill="#ff2222"/><rect x="443.5" y="360.5" width="3" height="2.4" fill="#c81e1e" stroke="#ff2222" stroke-width="1"/>
<polyline points="40.2,157.2 46.2,153.6 49.8,156.0 58.1,175.1 62.9,181.6 67.7,183.5 73.6,195.5 83.2,219.3 90.4,243.2 96.3,267.1 99.9,303.0 104.7,310.1 110.7,311.3 117.8,318.5 125.0,319.7 128.6,322.1 132.2,323.3 134.6,327.2 139.3,330.8 144.1,329.6 148.9,324.8 151.3,307.7 158.5,300.6 168.0,298.2 172.8,294.6 182.3,291.0 194.3,291.0 206.2,293.4 215.8,292.2 223.0,286.2 230.1,267.1 237.3,249.2 242.1,248.5 249.2,250.9 255.2,254.0 263.6,252.8 264.0,252.8 270.0,255.7 278.3,259.5 281.9,258.0 297.4,258.0 299.8,257.1 311.8,258.3 318.9,262.3 326.1,286.2 332.1,310.1 333.3,320.0 340.5,329.6 350.0,328.4 364.3,331.9 378.7,327.2 388.2,327.2 397.8,333.1 412.1,343.9 422.9,356.3 428.8,354.6 436.0,341.5 445.6,331.5" fill="none" stroke="#5fa8f0" stroke-width="1.1" stroke-linejoin="round"/>
<polyline points="40.2,208.6 46.2,207.4 50.9,211.0 58.1,230.1 66.5,236.1 71.3,243.2 82.0,264.7 93.9,295.8 97.5,320.0 103.5,329.6 110.7,331.9 120.2,335.5 129.8,340.3 137.0,345.1 144.1,343.9 148.9,336.7 156.1,324.8 163.2,321.6 182.3,317.3 194.3,317.3 215.8,318.5 220.6,314.9 227.7,307.7 237.3,286.2 242.1,283.8 249.2,286.2 258.8,289.1 264.0,289.1 271.2,291.0 292.7,291.5 296.3,290.5 311.8,291.0 318.9,295.8 324.9,310.1 328.5,320.0 333.3,334.3 340.5,343.9 350.0,343.4 364.3,346.3 376.3,346.8 388.2,347.5 400.2,352.3 414.5,361.8 424.1,369.0 431.2,365.4 440.8,352.3 445.6,349.9" fill="none" stroke="#1f7ae8" stroke-width="1.1" stroke-linejoin="round"/>
<polyline points="40.2,429.9 48.6,437.1 58.1,441.8 70.1,444.2 82.0,445.4 89.2,441.8 96.3,434.7 99.9,422.7 103.5,416.8 110.7,415.6 120.2,415.1 126.2,415.6 131.0,419.1 133.4,414.4 137.0,408.4 144.1,403.6 151.3,407.2 160.8,410.3 168.0,413.2 175.2,418.0 182.3,423.2 194.3,423.9 206.2,424.4 220.6,424.4 227.7,421.5 237.3,425.1 244.5,425.1 251.6,429.9 258.8,436.6 263.6,437.1 264.0,437.1 278.3,428.7 292.7,427.0 307.0,423.9 318.9,423.9 326.1,419.1 333.3,408.4 340.5,406.0 350.0,407.9 359.6,403.6 366.7,401.7 372.7,403.6 381.1,412.0 390.6,421.5 402.6,421.5 412.1,418.0 421.7,417.5 431.2,420.3 438.4,423.4 445.6,423.4" fill="none" stroke="#1f7ae8" stroke-width="1.1" stroke-linejoin="round"/>
<polyline points="40.2,463.3 43.8,472.9 49.8,492.0 55.7,493.9 67.7,496.8 77.2,490.8 86.8,482.5 95.1,468.1 99.9,444.2 104.7,437.5 113.1,437.5 120.2,434.7 127.4,434.7 131.0,439.0 134.6,426.3 141.7,420.3 145.3,418.0 151.3,427.5 158.5,432.3 165.6,432.8 172.8,443.0 182.3,449.5 206.2,450.2 225.3,450.9 230.1,453.8 237.3,461.4 246.8,462.2 254.0,466.9 261.2,474.1 264.0,472.9 278.3,462.9 295.1,459.0 309.4,456.7 318.9,456.2 326.1,446.6 333.3,427.5 340.5,421.5 346.4,420.3 350.0,423.9 359.6,416.8 365.5,414.4 371.5,419.1 381.1,428.7 390.6,439.5 402.6,438.3 412.1,434.7 421.7,429.9 431.2,433.5 438.4,440.6 445.6,441.4" fill="none" stroke="#5fa8f0" stroke-width="1.1" stroke-linejoin="round"/>
<polyline points="40.2,308.9 53.3,329.0 58.1,334.3 70.1,340.3 80.8,351.1 91.6,364.2 96.3,371.4 105.9,374.5 117.8,375.4 132.2,379.7 139.3,376.1 148.9,371.4 163.2,365.4 172.8,369.0 191.9,370.6 206.2,371.4 215.8,372.6 227.7,364.2 237.3,355.4 244.5,355.4 249.2,357.0 256.4,361.8 262.4,363.5 264.0,363.0 275.9,360.6 287.9,358.2 302.2,357.0 311.8,358.2 321.3,363.0 333.3,371.4 340.5,374.9 350.0,376.6 364.3,373.8 373.9,376.9 388.2,382.1 400.2,384.5 412.1,389.3 421.7,391.7 428.8,392.9 438.4,389.3 445.6,386.4" fill="none" stroke="#e2621a" stroke-width="1.2" stroke-linejoin="round"/>
<polyline points="40.2,374.9 46.2,391.7 54.5,398.8 62.9,385.7 72.4,366.6 78.4,367.8 86.8,373.8 96.3,377.3 103.5,373.8 108.3,366.6 115.5,367.8 122.6,372.6 131.0,383.3 140.5,384.5 148.9,359.4 158.5,342.7 163.2,335.5 169.2,351.1 177.6,377.3 185.9,396.5 194.3,384.5 203.8,373.8 213.4,374.9 220.6,360.6 227.7,336.7 232.5,322.4 237.3,329.0 242.1,310.1 246.8,310.1 251.6,329.0 254.0,351.1 261.2,374.9 263.6,382.1 264.0,384.5 268.8,394.1 275.9,391.7 284.3,379.7 290.3,365.4 295.1,358.2 304.6,360.6 311.8,364.2 318.9,361.8 326.1,366.6 335.7,373.8 347.6,384.5 354.8,390.5 359.6,391.7 369.1,386.9 376.3,389.3 383.5,397.6 390.6,408.4 397.8,403.6 407.3,394.1 416.9,390.5 424.1,392.9 431.2,379.7 440.8,365.4 445.6,360.6" fill="none" stroke="#9412e8" stroke-width="1.3" stroke-linejoin="round"/>
<text x="217.5" y="284.5" fill="#ff8c1a" stroke="#ff8c1a" stroke-width="0.25" textLength="45" lengthAdjust="spacingAndGlyphs">104.126</text>
<text x="414" y="345.5" fill="#ff8c1a" stroke="#ff8c1a" stroke-width="0.25" textLength="45" lengthAdjust="spacingAndGlyphs">102.796</text>
<text x="368.5" y="454" fill="#22cc22" stroke="#22cc22" stroke-width="0.25" textLength="44" lengthAdjust="spacingAndGlyphs">100.824</text>
<text x="23" y="456.5" fill="#22cc22" stroke="#22cc22" stroke-width="0.25" textLength="45" lengthAdjust="spacingAndGlyphs">100.754</text>
</g>
<path d="M484,119 h75 v11 h-65 z" fill="#4d5d80"/>
<rect x="494" y="119" width="65" height="11" fill="#5a6a8c"/>
<rect x="494" y="129" width="65" height="1" fill="#2a3a60"/>
<clipPath id="w1t"><rect x="494" y="119" width="65" height="11"/></clipPath>
<g clip-path="url(#w1t)">
<text x="508" y="125.5" fill="#ffffff" stroke="#ffffff" stroke-width="0.25" textLength="37" lengthAdjust="spacingAndGlyphs">107.674</text>
</g>
<rect x="494" y="351" width="65" height="19" fill="#f7a035" fill-opacity="0.93"/>
<rect x="494" y="351" width="65" height="1" fill="#e8861a"/>
<rect x="494" y="369" width="65" height="1" fill="#e8861a"/>
<rect x="494" y="351" width="1" height="19" fill="#e8861a"/>
<rect x="558" y="351" width="1" height="19" fill="#e8861a"/>
<text x="508" y="364.5" fill="#ffffff" stroke="#ffffff" stroke-width="0.25" textLength="37" lengthAdjust="spacingAndGlyphs">102.492</text>
<clipPath id="w1r"><rect x="39" y="556" width="455" height="132"/></clipPath><g clip-path="url(#w1r)">
<rect x="42" y="556" width="1" height="132" fill="#262626"/><rect x="47" y="556" width="1" height="132" fill="#262626"/><rect x="51" y="556" width="1" height="132" fill="#262626"/><rect x="56" y="556" width="1" height="132" fill="#262626"/><rect x="60" y="556" width="1" height="132" fill="#3d3d3d"/><rect x="65" y="556" width="1" height="132" fill="#262626"/><rect x="69" y="556" width="1" height="132" fill="#262626"/><rect x="74" y="556" width="1" height="132" fill="#262626"/><rect x="78" y="556" width="1" height="132" fill="#262626"/><rect x="83" y="556" width="1" height="132" fill="#3d3d3d"/><rect x="88" y="556" width="1" height="132" fill="#262626"/><rect x="92" y="556" width="1" height="132" fill="#262626"/><rect x="97" y="556" width="1" height="132" fill="#262626"/><rect x="101" y="556" width="1" height="132" fill="#262626"/><rect x="106" y="556" width="1" height="132" fill="#3d3d3d"/><rect x="110" y="556" width="1" height="132" fill="#262626"/><rect x="115" y="556" width="1" height="132" fill="#262626"/><rect x="119" y="556" width="1" height="132" fill="#262626"/><rect x="124" y="556" width="1" height="132" fill="#262626"/><rect x="128" y="556" width="1" height="132" fill="#3d3d3d"/><rect x="133" y="556" width="1" height="132" fill="#262626"/><rect x="138" y="556" width="1" height="132" fill="#262626"/><rect x="142" y="556" width="1" height="132" fill="#262626"/><rect x="147" y="556" width="1" height="132" fill="#262626"/><rect x="151" y="556" width="1" height="132" fill="#3d3d3d"/><rect x="156" y="556" width="1" height="132" fill="#262626"/><rect x="160" y="556" width="1" height="132" fill="#262626"/><rect x="165" y="556" width="1" height="132" fill="#262626"/><rect x="169" y="556" width="1" height="132" fill="#262626"/><rect x="174" y="556" width="1" height="132" fill="#3d3d3d"/><rect x="179" y="556" width="1" height="132" fill="#262626"/><rect x="183" y="556" width="1" height="132" fill="#262626"/><rect x="188" y="556" width="1" height="132" fill="#262626"/><rect x="192" y="556" width="1" height="132" fill="#262626"/><rect x="197" y="556" width="1" height="132" fill="#3d3d3d"/><rect x="201" y="556" width="1" height="132" fill="#262626"/><rect x="206" y="556" width="1" height="132" fill="#262626"/><rect x="210" y="556" width="1" height="132" fill="#262626"/><rect x="215" y="556" width="1" height="132" fill="#262626"/><rect x="219" y="556" width="1" height="132" fill="#3d3d3d"/><rect x="224" y="556" width="1" height="132" fill="#262626"/><rect x="229" y="556" width="1" height="132" fill="#262626"/><rect x="233" y="556" width="1" height="132" fill="#262626"/><rect x="238" y="556" width="1" height="132" fill="#262626"/><rect x="242" y="556" width="1" height="132" fill="#3d3d3d"/><rect x="247" y="556" width="1" height="132" fill="#262626"/><rect x="251" y="556" width="1" height="132" fill="#262626"/><rect x="256" y="556" width="1" height="132" fill="#262626"/><rect x="260" y="556" width="1" height="132" fill="#262626"/><rect x="265" y="556" width="1" height="132" fill="#3d3d3d"/><rect x="270" y="556" width="1" height="132" fill="#262626"/><rect x="274" y="556" width="1" height="132" fill="#262626"/><rect x="279" y="556" width="1" height="132" fill="#262626"/><rect x="283" y="556" width="1" height="132" fill="#262626"/><rect x="288" y="556" width="1" height="132" fill="#3d3d3d"/><rect x="292" y="556" width="1" height="132" fill="#262626"/><rect x="297" y="556" width="1" height="132" fill="#262626"/><rect x="301" y="556" width="1" height="132" fill="#262626"/><rect x="306" y="556" width="1" height="132" fill="#262626"/><rect x="310" y="556" width="1" height="132" fill="#3d3d3d"/><rect x="315" y="556" width="1" height="132" fill="#262626"/><rect x="320" y="556" width="1" height="132" fill="#262626"/><rect x="324" y="556" width="1" height="132" fill="#262626"/><rect x="329" y="556" width="1" height="132" fill="#262626"/><rect x="333" y="556" width="1" height="132" fill="#3d3d3d"/><rect x="338" y="556" width="1" height="132" fill="#262626"/><rect x="342" y="556" width="1" height="132" fill="#262626"/><rect x="347" y="556" width="1" height="132" fill="#262626"/><rect x="351" y="556" width="1" height="132" fill="#262626"/><rect x="356" y="556" width="1" height="132" fill="#3d3d3d"/><rect x="361" y="556" width="1" height="132" fill="#262626"/><rect x="365" y="556" width="1" height="132" fill="#262626"/><rect x="370" y="556" width="1" height="132" fill="#262626"/><rect x="374" y="556" width="1" height="132" fill="#262626"/><rect x="379" y="556" width="1" height="132" fill="#3d3d3d"/><rect x="383" y="556" width="1" height="132" fill="#262626"/><rect x="388" y="556" width="1" height="132" fill="#262626"/><rect x="392" y="556" width="1" height="132" fill="#262626"/><rect x="397" y="556" width="1" height="132" fill="#262626"/><rect x="401" y="556" width="1" height="132" fill="#3d3d3d"/><rect x="406" y="556" width="1" height="132" fill="#262626"/><rect x="411" y="556" width="1" height="132" fill="#262626"/><rect x="415" y="556" width="1" height="132" fill="#262626"/><rect x="420" y="556" width="1" height="132" fill="#262626"/><rect x="424" y="556" width="1" height="132" fill="#3d3d3d"/><rect x="429" y="556" width="1" height="132" fill="#262626"/><rect x="433" y="556" width="1" height="132" fill="#262626"/><rect x="438" y="556" width="1" height="132" fill="#262626"/><rect x="442" y="556" width="1" height="132" fill="#262626"/><rect x="447" y="556" width="1" height="132" fill="#3d3d3d"/><rect x="452" y="556" width="1" height="132" fill="#262626"/><rect x="456" y="556" width="1" height="132" fill="#262626"/><rect x="461" y="556" width="1" height="132" fill="#262626"/><rect x="465" y="556" width="1" height="132" fill="#262626"/><rect x="470" y="556" width="1" height="132" fill="#3d3d3d"/><rect x="474" y="556" width="1" height="132" fill="#262626"/><rect x="479" y="556" width="1" height="132" fill="#262626"/><rect x="483" y="556" width="1" height="132" fill="#262626"/><rect x="488" y="556" width="1" height="132" fill="#262626"/><rect x="492" y="556" width="1" height="132" fill="#3d3d3d"/><rect x="39" y="557" width="455" height="1" fill="#262626"/><rect x="39" y="560" width="455" height="1" fill="#262626"/><rect x="39" y="563" width="455" height="1" fill="#262626"/><rect x="39" y="565" width="455" height="1" fill="#262626"/><rect x="39" y="568" width="455" height="1" fill="#3d3d3d"/><rect x="39" y="571" width="455" height="1" fill="#262626"/><rect x="39" y="573" width="455" height="1" fill="#262626"/><rect x="39" y="576" width="455" height="1" fill="#262626"/><rect x="39" y="579" width="455" height="1" fill="#262626"/><rect x="39" y="581" width="455" height="1" fill="#262626"/><rect x="39" y="584" width="455" height="1" fill="#262626"/><rect x="39" y="587" width="455" height="1" fill="#262626"/><rect x="39" y="589" width="455" height="1" fill="#262626"/><rect x="39" y="592" width="455" height="1" fill="#262626"/><rect x="39" y="595" width="455" height="1" fill="#3d3d3d"/><rect x="39" y="597" width="455" height="1" fill="#262626"/><rect x="39" y="600" width="455" height="1" fill="#262626"/><rect x="39" y="603" width="455" height="1" fill="#262626"/><rect x="39" y="606" width="455" height="1" fill="#262626"/><rect x="39" y="608" width="455" height="1" fill="#262626"/><rect x="39" y="611" width="455" height="1" fill="#262626"/><rect x="39" y="614" width="455" height="1" fill="#262626"/><rect x="39" y="616" width="455" height="1" fill="#262626"/><rect x="39" y="619" width="455" height="1" fill="#262626"/><rect x="39" y="622" width="455" height="1" fill="#3d3d3d"/><rect x="39" y="624" width="455" height="1" fill="#262626"/><rect x="39" y="627" width="455" height="1" fill="#262626"/><rect x="39" y="630" width="455" height="1" fill="#262626"/><rect x="39" y="632" width="455" height="1" fill="#262626"/><rect x="39" y="635" width="455" height="1" fill="#262626"/><rect x="39" y="638" width="455" height="1" fill="#262626"/><rect x="39" y="640" width="455" height="1" fill="#262626"/><rect x="39" y="643" width="455" height="1" fill="#262626"/><rect x="39" y="646" width="455" height="1" fill="#262626"/><rect x="39" y="648" width="455" height="1" fill="#3d3d3d"/><rect x="39" y="651" width="455" height="1" fill="#262626"/><rect x="39" y="654" width="455" height="1" fill="#262626"/><rect x="39" y="656" width="455" height="1" fill="#262626"/><rect x="39" y="659" width="455" height="1" fill="#262626"/><rect x="39" y="662" width="455" height="1" fill="#262626"/><rect x="39" y="664" width="455" height="1" fill="#262626"/><rect x="39" y="667" width="455" height="1" fill="#262626"/><rect x="39" y="670" width="455" height="1" fill="#262626"/><rect x="39" y="673" width="455" height="1" fill="#262626"/><rect x="39" y="675" width="455" height="1" fill="#3d3d3d"/><rect x="39" y="678" width="455" height="1" fill="#262626"/><rect x="39" y="681" width="455" height="1" fill="#262626"/><rect x="39" y="683" width="455" height="1" fill="#262626"/><rect x="39" y="686" width="455" height="1" fill="#262626"/><rect x="128" y="556" width="1" height="132" fill="#6a6a6a"/><rect x="224" y="556" width="1" height="132" fill="#6a6a6a"/><rect x="324" y="556" width="1" height="132" fill="#6a6a6a"/><rect x="424" y="556" width="1" height="132" fill="#6a6a6a"/><rect x="449" y="556" width="1" height="132" fill="#8a8a8a"/>
<rect x="39" y="622" width="455" height="1" fill="#3d3d3d"/>
<rect x="39" y="649" width="455" height="1" fill="#3d3d3d"/>
<polyline points="40.2,626.6 45.0,623.6 49.5,624.6 57.0,621.6 63.0,621.3 67.5,620.6 72.8,620.6 76.5,622.4 82.5,623.6 87.1,623.3 90.8,621.5 99.1,621.5 105.1,619.8 109.6,620.6 114.1,622.4 118.6,621.8 124.6,623.1 131.4,625.4 136.6,621.6 141.1,621.0 148.6,617.6 154.6,617.6 158.4,619.4 163.6,620.6 166.6,623.9 172.7,625.4 178.7,624.3 181.7,625.4 186.9,621.3 190.7,621.3 195.2,622.4 204.2,622.4 208.7,623.6 216.2,620.6 225.2,617.3 232.7,615.6 235.7,615.6 240.2,618.3 245.5,619.8 249.2,624.3 253.7,623.9 258.2,625.4 264.3,625.4 264.0,625.4 271.5,624.3 279.0,621.6 286.5,621.3 300.0,621.6 309.1,623.6 318.1,620.3 322.6,622.4 328.6,622.4 336.1,623.6 340.6,625.4 345.8,624.3 351.1,625.4 360.1,623.1 363.9,622.4 372.1,625.4 378.1,626.6 384.1,626.6 388.6,627.3 393.1,626.6 399.9,623.6 409.7,623.6 414.2,624.6 422.4,624.3 427.7,620.6 432.2,620.6 436.7,618.6 440.5,620.6 446.0,620.6" fill="none" stroke="#ff6a00" stroke-width="1.5" stroke-linejoin="round"/>
<polyline points="40.2,652.9 45.0,640.8 48.8,641.6 54.8,630.3 59.3,627.3 63.0,628.8 67.5,621.3 72.0,622.8 81.8,635.6 86.3,633.3 90.1,623.6 95.3,623.6 99.1,625.4 104.3,618.3 108.1,619.1 113.3,627.8 117.1,622.4 126.1,637.1 131.4,644.6 136.6,622.1 140.4,620.6 145.6,604.1 150.1,601.4 154.6,601.4 158.4,610.1 163.6,617.6 167.4,637.8 172.7,644.6 177.2,635.3 181.4,640.8 186.2,619.8 190.7,619.5 195.2,622.1 204.2,621.6 208.7,628.8 213.9,622.8 218.5,607.8 226.7,593.5 232.0,590.2 236.5,589.3 240.2,612.8 246.2,617.6 250.0,641.6 254.5,636.8 259.0,643.4 264.3,640.1 264.0,639.3 268.5,635.6 273.0,633.3 278.3,624.3 282.0,620.9 286.5,619.4 291.0,615.3 299.3,617.6 304.5,625.8 309.8,629.6 313.6,618.8 318.8,613.1 322.6,628.4 327.8,625.4 331.6,629.3 336.1,630.3 340.6,644.6 345.1,635.6 349.6,642.6 354.1,634.8 363.1,617.3 372.1,637.8 382.6,639.3 387.1,645.8 390.9,643.4 396.2,625.8 400.7,616.4 405.2,618.3 409.7,616.4 413.4,623.6 422.4,627.3 427.7,602.6 436.7,593.5 440.9,608.6 446.0,606.3" fill="none" stroke="#9400ff" stroke-width="1.4" stroke-linejoin="round"/>
</g>
<clipPath id="w1c"><rect x="39" y="714" width="455" height="132"/></clipPath><g clip-path="url(#w1c)">
<rect x="42" y="714" width="1" height="132" fill="#262626"/><rect x="47" y="714" width="1" height="132" fill="#262626"/><rect x="51" y="714" width="1" height="132" fill="#262626"/><rect x="56" y="714" width="1" height="132" fill="#262626"/><rect x="60" y="714" width="1" height="132" fill="#3d3d3d"/><rect x="65" y="714" width="1" height="132" fill="#262626"/><rect x="69" y="714" width="1" height="132" fill="#262626"/><rect x="74" y="714" width="1" height="132" fill="#262626"/><rect x="78" y="714" width="1" height="132" fill="#262626"/><rect x="83" y="714" width="1" height="132" fill="#3d3d3d"/><rect x="88" y="714" width="1" height="132" fill="#262626"/><rect x="92" y="714" width="1" height="132" fill="#262626"/><rect x="97" y="714" width="1" height="132" fill="#262626"/><rect x="101" y="714" width="1" height="132" fill="#262626"/><rect x="106" y="714" width="1" height="132" fill="#3d3d3d"/><rect x="110" y="714" width="1" height="132" fill="#262626"/><rect x="115" y="714" width="1" height="132" fill="#262626"/><rect x="119" y="714" width="1" height="132" fill="#262626"/><rect x="124" y="714" width="1" height="132" fill="#262626"/><rect x="128" y="714" width="1" height="132" fill="#3d3d3d"/><rect x="133" y="714" width="1" height="132" fill="#262626"/><rect x="138" y="714" width="1" height="132" fill="#262626"/><rect x="142" y="714" width="1" height="132" fill="#262626"/><rect x="147" y="714" width="1" height="132" fill="#262626"/><rect x="151" y="714" width="1" height="132" fill="#3d3d3d"/><rect x="156" y="714" width="1" height="132" fill="#262626"/><rect x="160" y="714" width="1" height="132" fill="#262626"/><rect x="165" y="714" width="1" height="132" fill="#262626"/><rect x="169" y="714" width="1" height="132" fill="#262626"/><rect x="174" y="714" width="1" height="132" fill="#3d3d3d"/><rect x="179" y="714" width="1" height="132" fill="#262626"/><rect x="183" y="714" width="1" height="132" fill="#262626"/><rect x="188" y="714" width="1" height="132" fill="#262626"/><rect x="192" y="714" width="1" height="132" fill="#262626"/><rect x="197" y="714" width="1" height="132" fill="#3d3d3d"/><rect x="201" y="714" width="1" height="132" fill="#262626"/><rect x="206" y="714" width="1" height="132" fill="#262626"/><rect x="210" y="714" width="1" height="132" fill="#262626"/><rect x="215" y="714" width="1" height="132" fill="#262626"/><rect x="219" y="714" width="1" height="132" fill="#3d3d3d"/><rect x="224" y="714" width="1" height="132" fill="#262626"/><rect x="229" y="714" width="1" height="132" fill="#262626"/><rect x="233" y="714" width="1" height="132" fill="#262626"/><rect x="238" y="714" width="1" height="132" fill="#262626"/><rect x="242" y="714" width="1" height="132" fill="#3d3d3d"/><rect x="247" y="714" width="1" height="132" fill="#262626"/><rect x="251" y="714" width="1" height="132" fill="#262626"/><rect x="256" y="714" width="1" height="132" fill="#262626"/><rect x="260" y="714" width="1" height="132" fill="#262626"/><rect x="265" y="714" width="1" height="132" fill="#3d3d3d"/><rect x="270" y="714" width="1" height="132" fill="#262626"/><rect x="274" y="714" width="1" height="132" fill="#262626"/><rect x="279" y="714" width="1" height="132" fill="#262626"/><rect x="283" y="714" width="1" height="132" fill="#262626"/><rect x="288" y="714" width="1" height="132" fill="#3d3d3d"/><rect x="292" y="714" width="1" height="132" fill="#262626"/><rect x="297" y="714" width="1" height="132" fill="#262626"/><rect x="301" y="714" width="1" height="132" fill="#262626"/><rect x="306" y="714" width="1" height="132" fill="#262626"/><rect x="310" y="714" width="1" height="132" fill="#3d3d3d"/><rect x="315" y="714" width="1" height="132" fill="#262626"/><rect x="320" y="714" width="1" height="132" fill="#262626"/><rect x="324" y="714" width="1" height="132" fill="#262626"/><rect x="329" y="714" width="1" height="132" fill="#262626"/><rect x="333" y="714" width="1" height="132" fill="#3d3d3d"/><rect x="338" y="714" width="1" height="132" fill="#262626"/><rect x="342" y="714" width="1" height="132" fill="#262626"/><rect x="347" y="714" width="1" height="132" fill="#262626"/><rect x="351" y="714" width="1" height="132" fill="#262626"/><rect x="356" y="714" width="1" height="132" fill="#3d3d3d"/><rect x="361" y="714" width="1" height="132" fill="#262626"/><rect x="365" y="714" width="1" height="132" fill="#262626"/><rect x="370" y="714" width="1" height="132" fill="#262626"/><rect x="374" y="714" width="1" height="132" fill="#262626"/><rect x="379" y="714" width="1" height="132" fill="#3d3d3d"/><rect x="383" y="714" width="1" height="132" fill="#262626"/><rect x="388" y="714" width="1" height="132" fill="#262626"/><rect x="392" y="714" width="1" height="132" fill="#262626"/><rect x="397" y="714" width="1" height="132" fill="#262626"/><rect x="401" y="714" width="1" height="132" fill="#3d3d3d"/><rect x="406" y="714" width="1" height="132" fill="#262626"/><rect x="411" y="714" width="1" height="132" fill="#262626"/><rect x="415" y="714" width="1" height="132" fill="#262626"/><rect x="420" y="714" width="1" height="132" fill="#262626"/><rect x="424" y="714" width="1" height="132" fill="#3d3d3d"/><rect x="429" y="714" width="1" height="132" fill="#262626"/><rect x="433" y="714" width="1" height="132" fill="#262626"/><rect x="438" y="714" width="1" height="132" fill="#262626"/><rect x="442" y="714" width="1" height="132" fill="#262626"/><rect x="447" y="714" width="1" height="132" fill="#3d3d3d"/><rect x="452" y="714" width="1" height="132" fill="#262626"/><rect x="456" y="714" width="1" height="132" fill="#262626"/><rect x="461" y="714" width="1" height="132" fill="#262626"/><rect x="465" y="714" width="1" height="132" fill="#262626"/><rect x="470" y="714" width="1" height="132" fill="#3d3d3d"/><rect x="474" y="714" width="1" height="132" fill="#262626"/><rect x="479" y="714" width="1" height="132" fill="#262626"/><rect x="483" y="714" width="1" height="132" fill="#262626"/><rect x="488" y="714" width="1" height="132" fill="#262626"/><rect x="492" y="714" width="1" height="132" fill="#3d3d3d"/><rect x="39" y="718" width="455" height="1" fill="#262626"/><rect x="39" y="724" width="455" height="1" fill="#262626"/><rect x="39" y="730" width="455" height="1" fill="#262626"/><rect x="39" y="737" width="455" height="1" fill="#262626"/><rect x="39" y="743" width="455" height="1" fill="#262626"/><rect x="39" y="750" width="455" height="1" fill="#262626"/><rect x="39" y="756" width="455" height="1" fill="#262626"/><rect x="39" y="762" width="455" height="1" fill="#3d3d3d"/><rect x="39" y="769" width="455" height="1" fill="#262626"/><rect x="39" y="775" width="455" height="1" fill="#262626"/><rect x="39" y="781" width="455" height="1" fill="#262626"/><rect x="39" y="788" width="455" height="1" fill="#262626"/><rect x="39" y="794" width="455" height="1" fill="#262626"/><rect x="39" y="801" width="455" height="1" fill="#262626"/><rect x="39" y="807" width="455" height="1" fill="#262626"/><rect x="39" y="813" width="455" height="1" fill="#262626"/><rect x="39" y="820" width="455" height="1" fill="#262626"/><rect x="39" y="826" width="455" height="1" fill="#3d3d3d"/><rect x="39" y="832" width="455" height="1" fill="#262626"/><rect x="39" y="839" width="455" height="1" fill="#262626"/><rect x="128" y="714" width="1" height="132" fill="#6a6a6a"/><rect x="224" y="714" width="1" height="132" fill="#6a6a6a"/><rect x="324" y="714" width="1" height="132" fill="#6a6a6a"/><rect x="424" y="714" width="1" height="132" fill="#6a6a6a"/><rect x="449" y="714" width="1" height="132" fill="#8a8a8a"/>
<rect x="39.5" y="762.8" width="3" height="41.3" fill="none" stroke="#a0a0a0" stroke-width="1"/><rect x="43.5" y="762.8" width="3" height="38.3" fill="none" stroke="#a0a0a0" stroke-width="1"/><rect x="48.5" y="762.8" width="3" height="35.3" fill="none" stroke="#a0a0a0" stroke-width="1"/><rect x="52.5" y="762.8" width="3" height="27.0" fill="none" stroke="#a0a0a0" stroke-width="1"/><rect x="57.5" y="762.8" width="3" height="17.3" fill="none" stroke="#a0a0a0" stroke-width="1"/><rect x="61.5" y="762.8" width="3" height="10.5" fill="none" stroke="#a0a0a0" stroke-width="1"/><rect x="66.5" y="762.8" width="3" height="2.3" fill="none" stroke="#a0a0a0" stroke-width="1"/><rect x="70" y="762" width="4" height="2" fill="#a0a0a0"/><rect x="75" y="762" width="4" height="2" fill="#a0a0a0"/><rect x="79" y="762" width="4" height="2" fill="#a0a0a0"/><rect x="84" y="762" width="4" height="2" fill="#a0a0a0"/><rect x="88.5" y="759.1" width="3" height="3.7" fill="none" stroke="#a0a0a0" stroke-width="1"/><rect x="93.5" y="756.3" width="3" height="6.5" fill="none" stroke="#a0a0a0" stroke-width="1"/><rect x="97.5" y="754.8" width="3" height="8.0" fill="none" stroke="#a0a0a0" stroke-width="1"/><rect x="102.5" y="752.3" width="3" height="10.5" fill="none" stroke="#a0a0a0" stroke-width="1"/><rect x="106.5" y="751.2" width="3" height="11.6" fill="none" stroke="#a0a0a0" stroke-width="1"/><rect x="111.5" y="753.3" width="3" height="9.5" fill="none" stroke="#a0a0a0" stroke-width="1"/><rect x="115.5" y="753.3" width="3" height="9.5" fill="none" stroke="#a0a0a0" stroke-width="1"/><rect x="120.5" y="755.3" width="3" height="7.5" fill="none" stroke="#a0a0a0" stroke-width="1"/><rect x="124.5" y="759.1" width="3" height="3.7" fill="none" stroke="#a0a0a0" stroke-width="1"/><rect x="129" y="762" width="4" height="2" fill="#a0a0a0"/><rect x="134" y="762" width="4" height="2" fill="#a0a0a0"/><rect x="138.5" y="758.3" width="3" height="4.5" fill="none" stroke="#a0a0a0" stroke-width="1"/><rect x="143.5" y="750.3" width="3" height="12.5" fill="none" stroke="#a0a0a0" stroke-width="1"/><rect x="147.5" y="744.3" width="3" height="18.5" fill="none" stroke="#a0a0a0" stroke-width="1"/><rect x="152.5" y="741.3" width="3" height="21.5" fill="none" stroke="#a0a0a0" stroke-width="1"/><rect x="156.5" y="742.2" width="3" height="20.6" fill="none" stroke="#a0a0a0" stroke-width="1"/><rect x="161.5" y="746.3" width="3" height="16.5" fill="none" stroke="#a0a0a0" stroke-width="1"/><rect x="165.5" y="757.2" width="3" height="5.5" fill="none" stroke="#a0a0a0" stroke-width="1"/><rect x="170.5" y="762.8" width="3" height="3.5" fill="none" stroke="#a0a0a0" stroke-width="1"/><rect x="174.5" y="762.8" width="3" height="6.5" fill="none" stroke="#a0a0a0" stroke-width="1"/><rect x="179.5" y="762.8" width="3" height="10.5" fill="none" stroke="#a0a0a0" stroke-width="1"/><rect x="184.5" y="762.8" width="3" height="5.6" fill="none" stroke="#a0a0a0" stroke-width="1"/><rect x="188" y="762" width="4" height="2" fill="#a0a0a0"/><rect x="193" y="762" width="4" height="2" fill="#a0a0a0"/><rect x="198" y="762" width="4" height="2" fill="#a0a0a0"/><rect x="202" y="762" width="4" height="2" fill="#a0a0a0"/><rect x="207" y="762" width="4" height="2" fill="#a0a0a0"/><rect x="211" y="762" width="4" height="2" fill="#a0a0a0"/><rect x="216.5" y="756.3" width="3" height="6.5" fill="none" stroke="#a0a0a0" stroke-width="1"/><rect x="220.5" y="750.3" width="3" height="12.5" fill="none" stroke="#a0a0a0" stroke-width="1"/><rect x="225.5" y="743.3" width="3" height="19.5" fill="none" stroke="#a0a0a0" stroke-width="1"/><rect x="229.5" y="738.3" width="3" height="24.5" fill="none" stroke="#a0a0a0" stroke-width="1"/><rect x="234.5" y="735.3" width="3" height="27.5" fill="none" stroke="#a0a0a0" stroke-width="1"/><rect x="238.5" y="741.3" width="3" height="21.5" fill="none" stroke="#a0a0a0" stroke-width="1"/><rect x="243.5" y="747.3" width="3" height="15.5" fill="none" stroke="#a0a0a0" stroke-width="1"/><rect x="248" y="762" width="4" height="2" fill="#a0a0a0"/><rect x="252.5" y="762.8" width="3" height="6.5" fill="none" stroke="#a0a0a0" stroke-width="1"/><rect x="257.5" y="762.8" width="3" height="15.8" fill="none" stroke="#a0a0a0" stroke-width="1"/><rect x="261.5" y="762.8" width="3" height="19.5" fill="none" stroke="#a0a0a0" stroke-width="1"/><rect x="266.5" y="762.8" width="3" height="18.8" fill="none" stroke="#a0a0a0" stroke-width="1"/><rect x="270.5" y="762.8" width="3" height="17.3" fill="none" stroke="#a0a0a0" stroke-width="1"/><rect x="275.5" y="762.8" width="3" height="12.8" fill="none" stroke="#a0a0a0" stroke-width="1"/><rect x="279.5" y="762.8" width="3" height="7.5" fill="none" stroke="#a0a0a0" stroke-width="1"/><rect x="284.5" y="762.8" width="3" height="3.5" fill="none" stroke="#a0a0a0" stroke-width="1"/><rect x="288" y="762" width="4" height="2" fill="#a0a0a0"/><rect x="293" y="762" width="4" height="2" fill="#a0a0a0"/><rect x="297.5" y="760.9" width="3" height="1.9" fill="none" stroke="#a0a0a0" stroke-width="1"/><rect x="302" y="762" width="4" height="2" fill="#a0a0a0"/><rect x="306" y="762" width="4" height="2" fill="#a0a0a0"/><rect x="312" y="762" width="4" height="2" fill="#a0a0a0"/><rect x="316.5" y="759.4" width="3" height="3.4" fill="none" stroke="#a0a0a0" stroke-width="1"/><rect x="321" y="762" width="4" height="2" fill="#a0a0a0"/><rect x="325" y="762" width="4" height="2" fill="#a0a0a0"/><rect x="330" y="762" width="4" height="2" fill="#a0a0a0"/><rect x="334" y="762" width="4" height="2" fill="#a0a0a0"/><rect x="339.5" y="762.8" width="3" height="5.6" fill="none" stroke="#a0a0a0" stroke-width="1"/><rect x="343.5" y="762.8" width="3" height="6.0" fill="none" stroke="#a0a0a0" stroke-width="1"/><rect x="348.5" y="762.8" width="3" height="8.3" fill="none" stroke="#a0a0a0" stroke-width="1"/><rect x="352.5" y="762.8" width="3" height="7.5" fill="none" stroke="#a0a0a0" stroke-width="1"/><rect x="357.5" y="762.8" width="3" height="4.5" fill="none" stroke="#a0a0a0" stroke-width="1"/><rect x="361" y="762" width="4" height="2" fill="#a0a0a0"/><rect x="366" y="762" width="4" height="2" fill="#a0a0a0"/><rect x="370.5" y="762.8" width="3" height="3.5" fill="none" stroke="#a0a0a0" stroke-width="1"/><rect x="375.5" y="762.8" width="3" height="5.6" fill="none" stroke="#a0a0a0" stroke-width="1"/><rect x="379.5" y="762.8" width="3" height="5.6" fill="none" stroke="#a0a0a0" stroke-width="1"/><rect x="384.5" y="762.8" width="3" height="7.5" fill="none" stroke="#a0a0a0" stroke-width="1"/><rect x="388.5" y="762.8" width="3" height="7.5" fill="none" stroke="#a0a0a0" stroke-width="1"/><rect x="393.5" y="762.8" width="3" height="3.0" fill="none" stroke="#a0a0a0" stroke-width="1"/><rect x="397" y="762" width="4" height="2" fill="#a0a0a0"/><rect x="402.5" y="760.3" width="3" height="2.5" fill="none" stroke="#a0a0a0" stroke-width="1"/><rect x="407.5" y="758.3" width="3" height="4.5" fill="none" stroke="#a0a0a0" stroke-width="1"/><rect x="411.5" y="758.3" width="3" height="4.5" fill="none" stroke="#a0a0a0" stroke-width="1"/><rect x="416.5" y="758.3" width="3" height="4.5" fill="none" stroke="#a0a0a0" stroke-width="1"/><rect x="420.5" y="759.4" width="3" height="3.4" fill="none" stroke="#a0a0a0" stroke-width="1"/><rect x="425.5" y="754.5" width="3" height="8.3" fill="none" stroke="#a0a0a0" stroke-width="1"/><rect x="429.5" y="750.3" width="3" height="12.5" fill="none" stroke="#a0a0a0" stroke-width="1"/><rect x="434.5" y="747.3" width="3" height="15.5" fill="none" stroke="#a0a0a0" stroke-width="1"/><rect x="438.5" y="748.5" width="3" height="14.3" fill="none" stroke="#a0a0a0" stroke-width="1"/><rect x="443.5" y="749.7" width="3" height="13.1" fill="none" stroke="#a0a0a0" stroke-width="1"/>
<polyline points="40.2,778.6 48.8,798.1 55.5,807.9 61.5,812.8 67.5,814.3 76.5,813.1 85.6,813.1 93.1,810.9 102.1,805.9 108.1,802.3 114.1,799.6 120.1,796.3 129.1,794.3 136.6,794.8 144.1,791.3 151.6,782.3 159.1,775.6 163.6,770.8 168.1,769.6 174.2,771.4 181.7,775.3 189.2,777.1 195.2,777.5 201.2,776.3 210.2,776.0 219.2,774.1 228.2,765.1 234.2,756.3 241.7,747.3 247.7,743.3 252.2,744.0 259.8,750.0 264.3,754.5 264.0,755.3 271.5,762.1 279.0,767.3 286.5,770.3 294.0,769.6 304.5,768.5 313.6,768.4 321.1,767.3 330.1,766.9 337.6,768.1 345.1,770.3 354.1,774.8 363.1,776.8 375.1,778.9 384.1,782.6 393.1,786.1 400.7,786.4 409.7,784.1 418.7,781.9 426.2,778.6 433.7,773.8 439.7,768.8 446.0,764.3" fill="none" stroke="#12b4c4" stroke-width="1.4" stroke-linejoin="round"/>
<polyline points="40.2,819.1 45.0,828.1 49.5,835.3 54.0,833.4 58.5,828.1 63.0,824.4 68.3,816.9 75.8,810.4 82.5,812.7 87.1,812.4 90.8,807.9 99.1,801.1 108.1,791.8 114.1,789.8 118.6,787.6 122.3,787.6 127.6,791.8 131.8,796.3 136.6,792.8 141.1,788.3 145.6,780.1 150.1,766.6 155.4,758.3 159.1,754.8 163.6,753.3 167.4,762.1 171.9,773.3 177.2,778.6 181.7,786.5 187.7,781.6 193.7,777.8 200.4,775.9 204.2,774.5 209.4,775.3 213.2,774.1 219.2,766.6 225.2,754.5 231.2,736.5 237.2,725.7 241.7,725.7 245.9,727.5 249.2,739.5 255.2,753.3 259.8,766.6 264.3,774.1 264.0,774.1 268.5,777.8 273.0,781.6 277.5,780.1 282.0,777.1 286.5,774.8 291.0,771.1 299.3,766.6 304.5,766.6 310.6,767.8 318.1,763.6 324.1,765.8 330.1,768.1 336.1,769.3 340.6,774.8 345.1,777.1 349.6,782.3 354.1,783.4 358.6,781.9 363.9,778.3 369.1,779.8 375.1,783.8 381.1,786.8 390.1,793.1 396.2,790.6 403.7,783.4 412.7,778.3 418.7,777.1 423.2,775.6 427.7,770.3 432.9,762.1 436.7,756.0 441.2,753.3 446.0,750.0" fill="none" stroke="#ff1010" stroke-width="1.4" stroke-linejoin="round"/>
</g>
<rect x="604" y="101" width="64" height="14" fill="#3d5278"/>
<rect x="604" y="114" width="64" height="1" fill="#24345a"/>
<text x="604.5" y="113" fill="#ffffff" stroke="#ffffff" stroke-width="0.25" textLength="59.5" lengthAdjust="spacingAndGlyphs">2014/02/03</text>
<clipPath id="w2m"><rect x="607" y="115" width="409" height="413"/></clipPath><g clip-path="url(#w2m)">
<rect x="610" y="115" width="1" height="413" fill="#262626"/><rect x="614" y="115" width="1" height="413" fill="#262626"/><rect x="618" y="115" width="1" height="413" fill="#262626"/><rect x="622" y="115" width="1" height="413" fill="#262626"/><rect x="626" y="115" width="1" height="413" fill="#3d3d3d"/><rect x="630" y="115" width="1" height="413" fill="#262626"/><rect x="634" y="115" width="1" height="413" fill="#262626"/><rect x="638" y="115" width="1" height="413" fill="#262626"/><rect x="642" y="115" width="1" height="413" fill="#262626"/><rect x="646" y="115" width="1" height="413" fill="#3d3d3d"/><rect x="650" y="115" width="1" height="413" fill="#262626"/><rect x="654" y="115" width="1" height="413" fill="#262626"/><rect x="658" y="115" width="1" height="413" fill="#262626"/><rect x="662" y="115" width="1" height="413" fill="#262626"/><rect x="666" y="115" width="1" height="413" fill="#3d3d3d"/><rect x="670" y="115" width="1" height="413" fill="#262626"/><rect x="674" y="115" width="1" height="413" fill="#262626"/><rect x="678" y="115" width="1" height="413" fill="#262626"/><rect x="682" y="115" width="1" height="413" fill="#262626"/><rect x="686" y="115" width="1" height="413" fill="#3d3d3d"/><rect x="690" y="115" width="1" height="413" fill="#262626"/><rect x="694" y="115" width="1" height="413" fill="#262626"/><rect x="698" y="115" width="1" height="413" fill="#262626"/><rect x="702" y="115" width="1" height="413" fill="#262626"/><rect x="706" y="115" width="1" height="413" fill="#3d3d3d"/><rect x="710" y="115" width="1" height="413" fill="#262626"/><rect x="714" y="115" width="1" height="413" fill="#262626"/><rect x="718" y="115" width="1" height="413" fill="#262626"/><rect x="722" y="115" width="1" height="413" fill="#262626"/><rect x="726" y="115" width="1" height="413" fill="#3d3d3d"/><rect x="730" y="115" width="1" height="413" fill="#262626"/><rect x="734" y="115" width="1" height="413" fill="#262626"/><rect x="738" y="115" width="1" height="413" fill="#262626"/><rect x="742" y="115" width="1" height="413" fill="#262626"/><rect x="746" y="115" width="1" height="413" fill="#3d3d3d"/><rect x="750" y="115" width="1" height="413" fill="#262626"/><rect x="754" y="115" width="1" height="413" fill="#262626"/><rect x="758" y="115" width="1" height="413" fill="#262626"/><rect x="762" y="115" width="1" height="413" fill="#262626"/><rect x="766" y="115" width="1" height="413" fill="#3d3d3d"/><rect x="770" y="115" width="1" height="413" fill="#262626"/><rect x="774" y="115" width="1" height="413" fill="#262626"/><rect x="778" y="115" width="1" height="413" fill="#262626"/><rect x="782" y="115" width="1" height="413" fill="#262626"/><rect x="786" y="115" width="1" height="413" fill="#3d3d3d"/><rect x="790" y="115" width="1" height="413" fill="#262626"/><rect x="794" y="115" width="1" height="413" fill="#262626"/><rect x="798" y="115" width="1" height="413" fill="#262626"/><rect x="802" y="115" width="1" height="413" fill="#262626"/><rect x="806" y="115" width="1" height="413" fill="#3d3d3d"/><rect x="810" y="115" width="1" height="413" fill="#262626"/><rect x="814" y="115" width="1" height="413" fill="#262626"/><rect x="818" y="115" width="1" height="413" fill="#262626"/><rect x="822" y="115" width="1" height="413" fill="#262626"/><rect x="826" y="115" width="1" height="413" fill="#3d3d3d"/><rect x="830" y="115" width="1" height="413" fill="#262626"/><rect x="834" y="115" width="1" height="413" fill="#262626"/><rect x="838" y="115" width="1" height="413" fill="#262626"/><rect x="842" y="115" width="1" height="413" fill="#262626"/><rect x="846" y="115" width="1" height="413" fill="#3d3d3d"/><rect x="850" y="115" width="1" height="413" fill="#262626"/><rect x="854" y="115" width="1" height="413" fill="#262626"/><rect x="858" y="115" width="1" height="413" fill="#262626"/><rect x="862" y="115" width="1" height="413" fill="#262626"/><rect x="866" y="115" width="1" height="413" fill="#3d3d3d"/><rect x="870" y="115" width="1" height="413" fill="#262626"/><rect x="874" y="115" width="1" height="413" fill="#262626"/><rect x="878" y="115" width="1" height="413" fill="#262626"/><rect x="882" y="115" width="1" height="413" fill="#262626"/><rect x="886" y="115" width="1" height="413" fill="#3d3d3d"/><rect x="890" y="115" width="1" height="413" fill="#262626"/><rect x="894" y="115" width="1" height="413" fill="#262626"/><rect x="898" y="115" width="1" height="413" fill="#262626"/><rect x="902" y="115" width="1" height="413" fill="#262626"/><rect x="906" y="115" width="1" height="413" fill="#3d3d3d"/><rect x="910" y="115" width="1" height="413" fill="#262626"/><rect x="914" y="115" width="1" height="413" fill="#262626"/><rect x="918" y="115" width="1" height="413" fill="#262626"/><rect x="922" y="115" width="1" height="413" fill="#262626"/><rect x="926" y="115" width="1" height="413" fill="#3d3d3d"/><rect x="930" y="115" width="1" height="413" fill="#262626"/><rect x="934" y="115" width="1" height="413" fill="#262626"/><rect x="938" y="115" width="1" height="413" fill="#262626"/><rect x="942" y="115" width="1" height="413" fill="#262626"/><rect x="946" y="115" width="1" height="413" fill="#3d3d3d"/><rect x="950" y="115" width="1" height="413" fill="#262626"/><rect x="954" y="115" width="1" height="413" fill="#262626"/><rect x="958" y="115" width="1" height="413" fill="#262626"/><rect x="962" y="115" width="1" height="413" fill="#262626"/><rect x="966" y="115" width="1" height="413" fill="#3d3d3d"/><rect x="970" y="115" width="1" height="413" fill="#262626"/><rect x="974" y="115" width="1" height="413" fill="#262626"/><rect x="978" y="115" width="1" height="413" fill="#262626"/><rect x="982" y="115" width="1" height="413" fill="#262626"/><rect x="986" y="115" width="1" height="413" fill="#3d3d3d"/><rect x="990" y="115" width="1" height="413" fill="#262626"/><rect x="994" y="115" width="1" height="413" fill="#262626"/><rect x="998" y="115" width="1" height="413" fill="#262626"/><rect x="1002" y="115" width="1" height="413" fill="#262626"/><rect x="1006" y="115" width="1" height="413" fill="#3d3d3d"/><rect x="1010" y="115" width="1" height="413" fill="#262626"/><rect x="1014" y="115" width="1" height="413" fill="#262626"/><rect x="607" y="115" width="409" height="1" fill="#262626"/><rect x="607" y="118" width="409" height="1" fill="#262626"/><rect x="607" y="120" width="409" height="1" fill="#262626"/><rect x="607" y="123" width="409" height="1" fill="#262626"/><rect x="607" y="125" width="409" height="1" fill="#262626"/><rect x="607" y="128" width="409" height="1" fill="#3d3d3d"/><rect x="607" y="130" width="409" height="1" fill="#262626"/><rect x="607" y="133" width="409" height="1" fill="#262626"/><rect x="607" y="136" width="409" height="1" fill="#262626"/><rect x="607" y="138" width="409" height="1" fill="#262626"/><rect x="607" y="141" width="409" height="1" fill="#262626"/><rect x="607" y="143" width="409" height="1" fill="#262626"/><rect x="607" y="146" width="409" height="1" fill="#262626"/><rect x="607" y="149" width="409" height="1" fill="#262626"/><rect x="607" y="151" width="409" height="1" fill="#262626"/><rect x="607" y="154" width="409" height="1" fill="#3d3d3d"/><rect x="607" y="156" width="409" height="1" fill="#262626"/><rect x="607" y="159" width="409" height="1" fill="#262626"/><rect x="607" y="162" width="409" height="1" fill="#262626"/><rect x="607" y="164" width="409" height="1" fill="#262626"/><rect x="607" y="167" width="409" height="1" fill="#262626"/><rect x="607" y="169" width="409" height="1" fill="#262626"/><rect x="607" y="172" width="409" height="1" fill="#262626"/><rect x="607" y="174" width="409" height="1" fill="#262626"/><rect x="607" y="177" width="409" height="1" fill="#262626"/><rect x="607" y="180" width="409" height="1" fill="#3d3d3d"/><rect x="607" y="182" width="409" height="1" fill="#262626"/><rect x="607" y="185" width="409" height="1" fill="#262626"/><rect x="607" y="187" width="409" height="1" fill="#262626"/><rect x="607" y="190" width="409" height="1" fill="#262626"/><rect x="607" y="193" width="409" height="1" fill="#262626"/><rect x="607" y="195" width="409" height="1" fill="#262626"/><rect x="607" y="198" width="409" height="1" fill="#262626"/><rect x="607" y="200" width="409" height="1" fill="#262626"/><rect x="607" y="203" width="409" height="1" fill="#262626"/><rect x="607" y="206" width="409" height="1" fill="#3d3d3d"/><rect x="607" y="208" width="409" height="1" fill="#262626"/><rect x="607" y="211" width="409" height="1" fill="#262626"/><rect x="607" y="213" width="409" height="1" fill="#262626"/><rect x="607" y="216" width="409" height="1" fill="#262626"/><rect x="607" y="218" width="409" height="1" fill="#262626"/><rect x="607" y="221" width="409" height="1" fill="#262626"/><rect x="607" y="224" width="409" height="1" fill="#262626"/><rect x="607" y="226" width="409" height="1" fill="#262626"/><rect x="607" y="229" width="409" height="1" fill="#262626"/><rect x="607" y="231" width="409" height="1" fill="#3d3d3d"/><rect x="607" y="234" width="409" height="1" fill="#262626"/><rect x="607" y="237" width="409" height="1" fill="#262626"/><rect x="607" y="239" width="409" height="1" fill="#262626"/><rect x="607" y="242" width="409" height="1" fill="#262626"/><rect x="607" y="244" width="409" height="1" fill="#262626"/><rect x="607" y="247" width="409" height="1" fill="#262626"/><rect x="607" y="249" width="409" height="1" fill="#262626"/><rect x="607" y="252" width="409" height="1" fill="#262626"/><rect x="607" y="255" width="409" height="1" fill="#262626"/><rect x="607" y="257" width="409" height="1" fill="#3d3d3d"/><rect x="607" y="260" width="409" height="1" fill="#262626"/><rect x="607" y="262" width="409" height="1" fill="#262626"/><rect x="607" y="265" width="409" height="1" fill="#262626"/><rect x="607" y="268" width="409" height="1" fill="#262626"/><rect x="607" y="270" width="409" height="1" fill="#262626"/><rect x="607" y="273" width="409" height="1" fill="#262626"/><rect x="607" y="275" width="409" height="1" fill="#262626"/><rect x="607" y="278" width="409" height="1" fill="#262626"/><rect x="607" y="281" width="409" height="1" fill="#262626"/><rect x="607" y="283" width="409" height="1" fill="#3d3d3d"/><rect x="607" y="286" width="409" height="1" fill="#262626"/><rect x="607" y="288" width="409" height="1" fill="#262626"/><rect x="607" y="291" width="409" height="1" fill="#262626"/><rect x="607" y="293" width="409" height="1" fill="#262626"/><rect x="607" y="296" width="409" height="1" fill="#262626"/><rect x="607" y="299" width="409" height="1" fill="#262626"/><rect x="607" y="301" width="409" height="1" fill="#262626"/><rect x="607" y="304" width="409" height="1" fill="#262626"/><rect x="607" y="306" width="409" height="1" fill="#262626"/><rect x="607" y="309" width="409" height="1" fill="#3d3d3d"/><rect x="607" y="312" width="409" height="1" fill="#262626"/><rect x="607" y="314" width="409" height="1" fill="#262626"/><rect x="607" y="317" width="409" height="1" fill="#262626"/><rect x="607" y="319" width="409" height="1" fill="#262626"/><rect x="607" y="322" width="409" height="1" fill="#262626"/><rect x="607" y="325" width="409" height="1" fill="#262626"/><rect x="607" y="327" width="409" height="1" fill="#262626"/><rect x="607" y="330" width="409" height="1" fill="#262626"/><rect x="607" y="332" width="409" height="1" fill="#262626"/><rect x="607" y="335" width="409" height="1" fill="#3d3d3d"/><rect x="607" y="337" width="409" height="1" fill="#262626"/><rect x="607" y="340" width="409" height="1" fill="#262626"/><rect x="607" y="343" width="409" height="1" fill="#262626"/><rect x="607" y="345" width="409" height="1" fill="#262626"/><rect x="607" y="348" width="409" height="1" fill="#262626"/><rect x="607" y="350" width="409" height="1" fill="#262626"/><rect x="607" y="353" width="409" height="1" fill="#262626"/><rect x="607" y="356" width="409" height="1" fill="#262626"/><rect x="607" y="358" width="409" height="1" fill="#262626"/><rect x="607" y="361" width="409" height="1" fill="#3d3d3d"/><rect x="607" y="363" width="409" height="1" fill="#262626"/><rect x="607" y="366" width="409" height="1" fill="#262626"/><rect x="607" y="368" width="409" height="1" fill="#262626"/><rect x="607" y="371" width="409" height="1" fill="#262626"/><rect x="607" y="374" width="409" height="1" fill="#262626"/><rect x="607" y="376" width="409" height="1" fill="#262626"/><rect x="607" y="379" width="409" height="1" fill="#262626"/><rect x="607" y="381" width="409" height="1" fill="#262626"/><rect x="607" y="384" width="409" height="1" fill="#262626"/><rect x="607" y="387" width="409" height="1" fill="#3d3d3d"/><rect x="607" y="389" width="409" height="1" fill="#262626"/><rect x="607" y="392" width="409" height="1" fill="#262626"/><rect x="607" y="394" width="409" height="1" fill="#262626"/><rect x="607" y="397" width="409" height="1" fill="#262626"/><rect x="607" y="400" width="409" height="1" fill="#262626"/><rect x="607" y="402" width="409" height="1" fill="#262626"/><rect x="607" y="405" width="409" height="1" fill="#262626"/><rect x="607" y="407" width="409" height="1" fill="#262626"/><rect x="607" y="410" width="409" height="1" fill="#262626"/><rect x="607" y="412" width="409" height="1" fill="#3d3d3d"/><rect x="607" y="415" width="409" height="1" fill="#262626"/><rect x="607" y="418" width="409" height="1" fill="#262626"/><rect x="607" y="420" width="409" height="1" fill="#262626"/><rect x="607" y="423" width="409" height="1" fill="#262626"/><rect x="607" y="425" width="409" height="1" fill="#262626"/><rect x="607" y="428" width="409" height="1" fill="#262626"/><rect x="607" y="431" width="409" height="1" fill="#262626"/><rect x="607" y="433" width="409" height="1" fill="#262626"/><rect x="607" y="436" width="409" height="1" fill="#262626"/><rect x="607" y="438" width="409" height="1" fill="#3d3d3d"/><rect x="607" y="441" width="409" height="1" fill="#262626"/><rect x="607" y="444" width="409" height="1" fill="#262626"/><rect x="607" y="446" width="409" height="1" fill="#262626"/><rect x="607" y="449" width="409" height="1" fill="#262626"/><rect x="607" y="451" width="409" height="1" fill="#262626"/><rect x="607" y="454" width="409" height="1" fill="#262626"/><rect x="607" y="456" width="409" height="1" fill="#262626"/><rect x="607" y="459" width="409" height="1" fill="#262626"/><rect x="607" y="462" width="409" height="1" fill="#262626"/><rect x="607" y="464" width="409" height="1" fill="#3d3d3d"/><rect x="607" y="467" width="409" height="1" fill="#262626"/><rect x="607" y="469" width="409" height="1" fill="#262626"/><rect x="607" y="472" width="409" height="1" fill="#262626"/><rect x="607" y="475" width="409" height="1" fill="#262626"/><rect x="607" y="477" width="409" height="1" fill="#262626"/><rect x="607" y="480" width="409" height="1" fill="#262626"/><rect x="607" y="482" width="409" height="1" fill="#262626"/><rect x="607" y="485" width="409" height="1" fill="#262626"/><rect x="607" y="487" width="409" height="1" fill="#262626"/><rect x="607" y="490" width="409" height="1" fill="#3d3d3d"/><rect x="607" y="493" width="409" height="1" fill="#262626"/><rect x="607" y="495" width="409" height="1" fill="#262626"/><rect x="607" y="498" width="409" height="1" fill="#262626"/><rect x="607" y="500" width="409" height="1" fill="#262626"/><rect x="607" y="503" width="409" height="1" fill="#262626"/><rect x="607" y="506" width="409" height="1" fill="#262626"/><rect x="607" y="508" width="409" height="1" fill="#262626"/><rect x="607" y="511" width="409" height="1" fill="#262626"/><rect x="607" y="513" width="409" height="1" fill="#262626"/><rect x="607" y="516" width="409" height="1" fill="#3d3d3d"/><rect x="607" y="519" width="409" height="1" fill="#262626"/><rect x="607" y="521" width="409" height="1" fill="#262626"/><rect x="607" y="524" width="409" height="1" fill="#262626"/><rect x="607" y="526" width="409" height="1" fill="#262626"/><rect x="687" y="115" width="1" height="413" fill="#6a6a6a"/><rect x="773" y="115" width="1" height="413" fill="#6a6a6a"/><rect x="863" y="115" width="1" height="413" fill="#6a6a6a"/><rect x="953" y="115" width="1" height="413" fill="#6a6a6a"/>
<rect x="607" y="364" width="409" height="1" fill="#ff9a00"/>
<rect x="609" y="420.1" width="1" height="30.4" fill="#ff2222"/><rect x="607.5" y="423.3" width="3" height="23.7" fill="#c81e1e" stroke="#ff2222" stroke-width="1"/><rect x="613" y="418.0" width="1" height="25.0" fill="#4646ff"/><rect x="611.5" y="425.5" width="3" height="5.0" fill="#3a3ad0" stroke="#4646ff" stroke-width="1"/><rect x="617" y="408.7" width="1" height="30.8" fill="#ff2222"/><rect x="615.5" y="426.3" width="3" height="4.2" fill="#c81e1e" stroke="#ff2222" stroke-width="1"/><rect x="621" y="377.0" width="1" height="71.0" fill="#ff2222"/><rect x="619.5" y="391.3" width="3" height="30.6" fill="#c81e1e" stroke="#ff2222" stroke-width="1"/><rect x="625" y="366.0" width="1" height="37.6" fill="#ff2222"/><rect x="623.5" y="368.3" width="3" height="24.6" fill="#c81e1e" stroke="#ff2222" stroke-width="1"/><rect x="630" y="360.0" width="1" height="21.4" fill="#ff2222"/><rect x="628.5" y="364.9" width="3" height="14.3" fill="#c81e1e" stroke="#ff2222" stroke-width="1"/><rect x="634" y="343.0" width="1" height="28.2" fill="#4646ff"/><rect x="632.5" y="364.0" width="3" height="3.3" fill="#3a3ad0" stroke="#4646ff" stroke-width="1"/><rect x="638" y="359.0" width="1" height="48.0" fill="#4646ff"/><rect x="636.5" y="367.5" width="3" height="23.7" fill="#3a3ad0" stroke="#4646ff" stroke-width="1"/><rect x="642" y="339.6" width="1" height="55.4" fill="#ff2222"/><rect x="640.5" y="346.1" width="3" height="45.1" fill="#c81e1e" stroke="#ff2222" stroke-width="1"/><rect x="646" y="327.7" width="1" height="21.3" fill="#ff2222"/><rect x="644.5" y="340.1" width="3" height="6.7" fill="#c81e1e" stroke="#ff2222" stroke-width="1"/><rect x="650" y="320.0" width="1" height="18.8" fill="#4646ff"/><rect x="648.5" y="331.5" width="3" height="1.7" fill="#3a3ad0" stroke="#4646ff" stroke-width="1"/><rect x="654" y="298.0" width="1" height="40.6" fill="#ff2222"/><rect x="652.5" y="305.8" width="3" height="26.5" fill="#c81e1e" stroke="#ff2222" stroke-width="1"/><rect x="658" y="297.0" width="1" height="26.0" fill="#4646ff"/><rect x="656.5" y="305.8" width="3" height="12.0" fill="#3a3ad0" stroke="#4646ff" stroke-width="1"/><rect x="662" y="301.9" width="1" height="42.5" fill="#4646ff"/><rect x="660.5" y="317.8" width="3" height="10.7" fill="#3a3ad0" stroke="#4646ff" stroke-width="1"/><rect x="666" y="299.0" width="1" height="35.7" fill="#ff2222"/><rect x="664.5" y="315.9" width="3" height="9.6" fill="#c81e1e" stroke="#ff2222" stroke-width="1"/><rect x="670" y="299.0" width="1" height="32.0" fill="#ff2222"/><rect x="668.5" y="317.8" width="3" height="1.0" fill="#c81e1e" stroke="#ff2222" stroke-width="1"/><rect x="674" y="300.0" width="1" height="27.0" fill="#ff2222"/><rect x="672.5" y="313.0" width="3" height="5.8" fill="#c81e1e" stroke="#ff2222" stroke-width="1"/><rect x="678" y="305.0" width="1" height="43.3" fill="#4646ff"/><rect x="676.5" y="313.0" width="3" height="29.0" fill="#3a3ad0" stroke="#4646ff" stroke-width="1"/><rect x="683" y="323.0" width="1" height="27.0" fill="#ff2222"/><rect x="681.5" y="330.5" width="3" height="17.3" fill="#c81e1e" stroke="#ff2222" stroke-width="1"/><rect x="687" y="270.0" width="1" height="66.7" fill="#ff2222"/><rect x="685.5" y="284.0" width="3" height="45.5" fill="#c81e1e" stroke="#ff2222" stroke-width="1"/><rect x="691" y="287.4" width="1" height="35.6" fill="#4646ff"/><rect x="689.5" y="304.3" width="3" height="12.5" fill="#3a3ad0" stroke="#4646ff" stroke-width="1"/><rect x="695" y="293.0" width="1" height="31.0" fill="#ff2222"/><rect x="693.5" y="314.0" width="3" height="2.8" fill="#c81e1e" stroke="#ff2222" stroke-width="1"/><rect x="699" y="280.6" width="1" height="50.4" fill="#4646ff"/><rect x="697.5" y="314.0" width="3" height="2.8" fill="#3a3ad0" stroke="#4646ff" stroke-width="1"/><rect x="703" y="245.8" width="1" height="79.2" fill="#ff2222"/><rect x="701.5" y="253.0" width="3" height="61.9" fill="#c81e1e" stroke="#ff2222" stroke-width="1"/><rect x="707" y="224.5" width="1" height="31.9" fill="#ff2222"/><rect x="705.5" y="245.3" width="3" height="5.8" fill="#c81e1e" stroke="#ff2222" stroke-width="1"/><rect x="711" y="233.3" width="1" height="18.2" fill="#ff2222"/><rect x="709.5" y="244.7" width="3" height="1.8" fill="#c81e1e" stroke="#ff2222" stroke-width="1"/><rect x="715" y="242.4" width="1" height="23.6" fill="#4646ff"/><rect x="713.5" y="244.7" width="3" height="7.2" fill="#3a3ad0" stroke="#4646ff" stroke-width="1"/><rect x="719" y="224.2" width="1" height="37.3" fill="#ff2222"/><rect x="717.5" y="230.7" width="3" height="22.1" fill="#c81e1e" stroke="#ff2222" stroke-width="1"/><rect x="723" y="197.8" width="1" height="62.8" fill="#4646ff"/><rect x="721.5" y="230.1" width="3" height="18.2" fill="#3a3ad0" stroke="#4646ff" stroke-width="1"/><rect x="727" y="212.3" width="1" height="46.5" fill="#ff2222"/><rect x="725.5" y="227.0" width="3" height="21.3" fill="#c81e1e" stroke="#ff2222" stroke-width="1"/><rect x="732" y="207.8" width="1" height="34.6" fill="#ff2222"/><rect x="730.5" y="221.9" width="3" height="4.5" fill="#c81e1e" stroke="#ff2222" stroke-width="1"/><rect x="736" y="208.7" width="1" height="30.9" fill="#ff2222"/><rect x="734.5" y="215.5" width="3" height="5.4" fill="#c81e1e" stroke="#ff2222" stroke-width="1"/><rect x="740" y="214.1" width="1" height="63.8" fill="#4646ff"/><rect x="738.5" y="216.1" width="3" height="52.2" fill="#3a3ad0" stroke="#4646ff" stroke-width="1"/><rect x="744" y="259.7" width="1" height="50.1" fill="#4646ff"/><rect x="742.5" y="269.7" width="3" height="25.0" fill="#3a3ad0" stroke="#4646ff" stroke-width="1"/><rect x="748" y="277.9" width="1" height="23.7" fill="#ff2222"/><rect x="746.5" y="285.7" width="3" height="9.0" fill="#c81e1e" stroke="#ff2222" stroke-width="1"/><rect x="752" y="244.2" width="1" height="59.2" fill="#ff2222"/><rect x="750.5" y="262.9" width="3" height="20.9" fill="#c81e1e" stroke="#ff2222" stroke-width="1"/><rect x="756" y="258.8" width="1" height="51.0" fill="#4646ff"/><rect x="754.5" y="264.7" width="3" height="5.4" fill="#3a3ad0" stroke="#4646ff" stroke-width="1"/><rect x="760" y="265.1" width="1" height="30.1" fill="#4646ff"/><rect x="758.5" y="270.2" width="3" height="21.8" fill="#3a3ad0" stroke="#4646ff" stroke-width="1"/><rect x="764" y="286.0" width="1" height="34.7" fill="#4646ff"/><rect x="762.5" y="292.9" width="3" height="20.0" fill="#3a3ad0" stroke="#4646ff" stroke-width="1"/><rect x="768" y="297.0" width="1" height="35.5" fill="#ff2222"/><rect x="766.5" y="308.4" width="3" height="5.4" fill="#c81e1e" stroke="#ff2222" stroke-width="1"/><rect x="772" y="278.8" width="1" height="47.3" fill="#ff2222"/><rect x="770.5" y="298.4" width="3" height="9.9" fill="#c81e1e" stroke="#ff2222" stroke-width="1"/><rect x="776" y="275.1" width="1" height="29.2" fill="#ff2222"/><rect x="774.5" y="287.5" width="3" height="10.8" fill="#c81e1e" stroke="#ff2222" stroke-width="1"/><rect x="781" y="273.3" width="1" height="36.5" fill="#4646ff"/><rect x="779.5" y="288.4" width="3" height="11.7" fill="#3a3ad0" stroke="#4646ff" stroke-width="1"/><rect x="785" y="280.6" width="1" height="52.8" fill="#4646ff"/><rect x="783.5" y="302.1" width="3" height="23.5" fill="#3a3ad0" stroke="#4646ff" stroke-width="1"/><rect x="789" y="319.8" width="1" height="24.6" fill="#4646ff"/><rect x="787.5" y="326.6" width="3" height="7.2" fill="#3a3ad0" stroke="#4646ff" stroke-width="1"/><rect x="793" y="311.6" width="1" height="25.5" fill="#ff2222"/><rect x="791.5" y="314.8" width="3" height="20.9" fill="#c81e1e" stroke="#ff2222" stroke-width="1"/><rect x="797" y="277.9" width="1" height="38.2" fill="#ff2222"/><rect x="795.5" y="285.7" width="3" height="29.0" fill="#c81e1e" stroke="#ff2222" stroke-width="1"/><rect x="801" y="251.5" width="1" height="41.9" fill="#ff2222"/><rect x="799.5" y="255.6" width="3" height="29.1" fill="#c81e1e" stroke="#ff2222" stroke-width="1"/><rect x="805" y="232.3" width="1" height="31.9" fill="#ff2222"/><rect x="803.5" y="239.2" width="3" height="17.2" fill="#c81e1e" stroke="#ff2222" stroke-width="1"/><rect x="809" y="228.7" width="1" height="20.9" fill="#4646ff"/><rect x="807.5" y="239.2" width="3" height="1.0" fill="#3a3ad0" stroke="#4646ff" stroke-width="1"/><rect x="813" y="251.5" width="1" height="24.6" fill="#4646ff"/><rect x="811.5" y="254.7" width="3" height="18.1" fill="#3a3ad0" stroke="#4646ff" stroke-width="1"/><rect x="817" y="266.0" width="1" height="23.7" fill="#4646ff"/><rect x="815.5" y="273.8" width="3" height="2.7" fill="#3a3ad0" stroke="#4646ff" stroke-width="1"/><rect x="821" y="257.4" width="1" height="23.7" fill="#ff2222"/><rect x="819.5" y="275.2" width="3" height="1.0" fill="#c81e1e" stroke="#ff2222" stroke-width="1"/><rect x="825" y="250.1" width="1" height="27.4" fill="#4646ff"/><rect x="823.5" y="275.2" width="3" height="1.0" fill="#3a3ad0" stroke="#4646ff" stroke-width="1"/><rect x="830" y="272.0" width="1" height="8.2" fill="#ff2222"/><rect x="828.5" y="274.3" width="3" height="1.0" fill="#c81e1e" stroke="#ff2222" stroke-width="1"/><rect x="834" y="267.4" width="1" height="22.8" fill="#4646ff"/><rect x="832.5" y="276.1" width="3" height="10.0" fill="#3a3ad0" stroke="#4646ff" stroke-width="1"/><rect x="838" y="270.2" width="1" height="20.9" fill="#ff2222"/><rect x="836.5" y="281.6" width="3" height="4.5" fill="#c81e1e" stroke="#ff2222" stroke-width="1"/><rect x="842" y="255.6" width="1" height="29.2" fill="#ff2222"/><rect x="840.5" y="275.2" width="3" height="6.3" fill="#c81e1e" stroke="#ff2222" stroke-width="1"/><rect x="846" y="262.0" width="1" height="21.8" fill="#ff2222"/><rect x="844.5" y="267.9" width="3" height="7.2" fill="#c81e1e" stroke="#ff2222" stroke-width="1"/><rect x="850" y="258.3" width="1" height="13.7" fill="#ff2222"/><rect x="848.5" y="266.1" width="3" height="1.8" fill="#c81e1e" stroke="#ff2222" stroke-width="1"/><rect x="854" y="242.0" width="1" height="35.5" fill="#ff2222"/><rect x="852.5" y="257.9" width="3" height="6.3" fill="#c81e1e" stroke="#ff2222" stroke-width="1"/><rect x="858" y="242.0" width="1" height="37.3" fill="#4646ff"/><rect x="856.5" y="257.9" width="3" height="17.2" fill="#3a3ad0" stroke="#4646ff" stroke-width="1"/><rect x="862" y="244.7" width="1" height="53.7" fill="#ff2222"/><rect x="860.5" y="249.7" width="3" height="29.1" fill="#c81e1e" stroke="#ff2222" stroke-width="1"/><rect x="866" y="237.4" width="1" height="15.5" fill="#ff2222"/><rect x="864.5" y="248.8" width="3" height="1.8" fill="#c81e1e" stroke="#ff2222" stroke-width="1"/><rect x="870" y="241.0" width="1" height="27.4" fill="#ff2222"/><rect x="868.5" y="247.0" width="3" height="2.6" fill="#c81e1e" stroke="#ff2222" stroke-width="1"/><rect x="874" y="238.8" width="1" height="14.5" fill="#ff2222"/><rect x="872.5" y="243.8" width="3" height="1.7" fill="#c81e1e" stroke="#ff2222" stroke-width="1"/><rect x="879" y="205.0" width="1" height="42.0" fill="#ff2222"/><rect x="877.5" y="217.4" width="3" height="27.2" fill="#c81e1e" stroke="#ff2222" stroke-width="1"/><rect x="883" y="212.3" width="1" height="15.5" fill="#4646ff"/><rect x="881.5" y="218.3" width="3" height="7.2" fill="#3a3ad0" stroke="#4646ff" stroke-width="1"/><rect x="887" y="182.3" width="1" height="83.7" fill="#4646ff"/><rect x="885.5" y="226.5" width="3" height="35.4" fill="#3a3ad0" stroke="#4646ff" stroke-width="1"/><rect x="891" y="260.6" width="1" height="51.0" fill="#4646ff"/><rect x="889.5" y="262.9" width="3" height="41.8" fill="#3a3ad0" stroke="#4646ff" stroke-width="1"/><rect x="895" y="295.2" width="1" height="14.6" fill="#ff2222"/><rect x="893.5" y="304.8" width="3" height="2.7" fill="#c81e1e" stroke="#ff2222" stroke-width="1"/><rect x="899" y="298.2" width="1" height="41.8" fill="#4646ff"/><rect x="897.5" y="306.0" width="3" height="28.1" fill="#3a3ad0" stroke="#4646ff" stroke-width="1"/><rect x="903" y="319.1" width="1" height="18.3" fill="#ff2222"/><rect x="901.5" y="328.8" width="3" height="5.3" fill="#c81e1e" stroke="#ff2222" stroke-width="1"/><rect x="907" y="313.7" width="1" height="47.3" fill="#4646ff"/><rect x="905.5" y="328.8" width="3" height="1.0" fill="#3a3ad0" stroke="#4646ff" stroke-width="1"/><rect x="911" y="324.6" width="1" height="18.2" fill="#4646ff"/><rect x="909.5" y="329.7" width="3" height="7.2" fill="#3a3ad0" stroke="#4646ff" stroke-width="1"/><rect x="915" y="317.3" width="1" height="21.0" fill="#ff2222"/><rect x="913.5" y="330.5" width="3" height="6.4" fill="#c81e1e" stroke="#ff2222" stroke-width="1"/><rect x="919" y="328.3" width="1" height="18.2" fill="#4646ff"/><rect x="917.5" y="332.4" width="3" height="1.0" fill="#3a3ad0" stroke="#4646ff" stroke-width="1"/><rect x="923" y="322.8" width="1" height="43.7" fill="#4646ff"/><rect x="921.5" y="336.0" width="3" height="5.4" fill="#3a3ad0" stroke="#4646ff" stroke-width="1"/><rect x="927" y="341.0" width="1" height="23.7" fill="#4646ff"/><rect x="925.5" y="343.3" width="3" height="14.5" fill="#3a3ad0" stroke="#4646ff" stroke-width="1"/><rect x="932" y="355.6" width="1" height="23.7" fill="#4646ff"/><rect x="930.5" y="357.9" width="3" height="11.7" fill="#3a3ad0" stroke="#4646ff" stroke-width="1"/><rect x="936" y="358.3" width="1" height="21.9" fill="#ff2222"/><rect x="934.5" y="364.3" width="3" height="9.9" fill="#c81e1e" stroke="#ff2222" stroke-width="1"/><rect x="940" y="351.0" width="1" height="30.0" fill="#4646ff"/><rect x="938.5" y="364.3" width="3" height="3.5" fill="#3a3ad0" stroke="#4646ff" stroke-width="1"/><rect x="944" y="366.5" width="1" height="26.4" fill="#4646ff"/><rect x="942.5" y="368.8" width="3" height="22.7" fill="#3a3ad0" stroke="#4646ff" stroke-width="1"/><rect x="948" y="372.9" width="1" height="20.9" fill="#ff2222"/><rect x="946.5" y="385.2" width="3" height="6.3" fill="#c81e1e" stroke="#ff2222" stroke-width="1"/><rect x="952" y="361.0" width="1" height="26.4" fill="#ff2222"/><rect x="950.5" y="368.8" width="3" height="16.3" fill="#c81e1e" stroke="#ff2222" stroke-width="1"/><rect x="956" y="368.3" width="1" height="25.5" fill="#4646ff"/><rect x="954.5" y="371.5" width="3" height="16.3" fill="#3a3ad0" stroke="#4646ff" stroke-width="1"/><rect x="960" y="362.8" width="1" height="32.8" fill="#ff2222"/><rect x="958.5" y="374.3" width="3" height="13.5" fill="#c81e1e" stroke="#ff2222" stroke-width="1"/><rect x="964" y="366.5" width="1" height="22.8" fill="#4646ff"/><rect x="962.5" y="374.3" width="3" height="12.6" fill="#3a3ad0" stroke="#4646ff" stroke-width="1"/><rect x="968" y="350.1" width="1" height="86.5" fill="#ff2222"/><rect x="966.5" y="354.2" width="3" height="32.7" fill="#c81e1e" stroke="#ff2222" stroke-width="1"/><rect x="972" y="347.4" width="1" height="29.1" fill="#4646ff"/><rect x="970.5" y="354.8" width="3" height="9.4" fill="#3a3ad0" stroke="#4646ff" stroke-width="1"/>
<polyline points="607.2,287.4 614.3,284.5 623.9,282.6 629.9,286.2 635.8,293.4 647.8,275.5 659.7,251.6 672.9,233.6 678.8,232.0 685.5,218.6 692.0,227.2 698.0,237.2 705.1,227.7 712.3,203.8 719.5,184.7 724.2,185.9 730.2,167.9 735.0,155.5 738.6,154.8 748.1,157.2 757.7,159.6 767.2,169.1 772.0,168.4 780.4,173.4 789.6,167.5 796.8,173.9 803.9,174.6 808.7,173.9 814.7,189.5 820.6,208.6 831.4,209.8 840.9,212.1 848.1,209.0 857.7,207.4 864.8,200.2 869.6,202.6 873.9,211.0 880.4,201.9 886.3,200.9 894.7,199.5 900.7,184.7 910.2,172.2 919.8,164.4 929.3,154.8 935.3,152.4 938.9,153.1 943.7,149.3 949.7,159.6 955.6,172.7 960.4,191.8 966.4,225.3 972.3,274.3" fill="none" stroke="#5fa8f0" stroke-width="1.1" stroke-linejoin="round"/>
<polyline points="607.2,318.5 623.9,317.3 635.8,324.7 647.8,304.1 659.7,291.0 671.7,277.8 681.2,273.1 686.0,264.7 694.4,267.1 699.1,271.9 705.1,258.7 714.7,238.4 721.8,224.1 729.0,213.3 735.0,197.8 743.3,197.1 752.9,196.6 767.2,202.6 779.2,205.0 795.6,208.1 808.7,209.3 814.7,220.5 820.6,234.8 831.4,234.8 839.8,236.8 848.1,234.4 857.7,231.3 867.2,225.3 874.4,228.9 880.4,221.7 886.3,221.7 894.7,222.4 903.1,213.3 912.6,207.4 924.6,203.3 931.7,200.7 942.5,203.3 950.8,215.7 958.0,237.2 965.2,268.3 972.3,301.7" fill="none" stroke="#1f7ae8" stroke-width="1.1" stroke-linejoin="round"/>
<polyline points="608.4,447.0 616.7,453.7 628.7,453.0 638.2,452.5 644.2,454.2 650.2,452.3 657.3,451.3 661.6,447.0 669.3,449.4 678.8,449.9 684.8,447.5 689.6,432.7 695.6,413.6 702.7,396.8 709.9,393.3 718.3,387.3 723.0,374.1 731.4,368.2 741.0,363.4 752.9,351.4 762.5,341.9 769.6,337.1 774.4,338.3 780.4,332.8 784.0,333.5 786.0,340.7 793.2,347.1 808.7,347.1 820.6,337.6 843.3,335.9 857.7,327.6 864.8,326.4 869.6,318.0 874.4,304.1 881.6,298.2 888.7,299.3 893.5,304.1 900.7,332.3 915.0,351.4 924.6,365.8 934.1,389.7 943.7,413.6 953.2,427.9 959.2,432.7 965.2,423.1 972.3,405.2" fill="none" stroke="#1f7ae8" stroke-width="1.1" stroke-linejoin="round"/>
<polyline points="608.4,474.5 615.5,488.1 626.3,487.1 635.8,483.3 645.4,488.1 653.8,491.2 662.1,487.1 671.7,493.1 678.8,494.8 684.8,494.3 690.8,470.9 696.8,451.8 702.7,430.3 709.9,431.5 718.3,428.4 723.0,412.4 733.8,409.3 743.3,404.0 752.9,389.7 762.5,378.2 767.2,371.8 772.0,373.4 776.8,365.8 782.8,364.6 786.0,372.9 792.0,382.5 807.5,382.0 817.1,370.6 820.6,362.9 845.7,359.8 857.7,352.6 864.8,351.4 869.6,337.1 874.4,322.8 881.6,317.3 888.7,320.4 898.3,339.5 907.8,363.4 919.8,389.7 929.3,413.6 938.9,437.5 946.1,466.1 953.2,482.8 958.0,480.5 965.2,459.0 972.3,432.7" fill="none" stroke="#5fa8f0" stroke-width="1.1" stroke-linejoin="round"/>
<polyline points="608.4,381.3 614.3,384.9 626.3,386.1 635.8,388.5 643.0,387.3 650.2,381.3 662.1,367.0 671.7,363.9 681.2,362.2 690.8,350.3 700.3,337.1 719.5,306.5 726.6,294.6 736.2,281.4 748.1,275.5 762.5,270.7 772.0,269.5 781.6,268.3 795.6,277.8 807.5,278.3 817.1,282.6 826.6,285.5 836.2,286.2 845.7,285.0 855.3,280.2 864.8,276.7 874.4,267.1 882.8,259.2 893.5,265.9 907.8,273.1 922.2,283.8 938.9,301.7 948.5,318.0 958.0,332.3 972.3,352.6" fill="none" stroke="#e2621a" stroke-width="1.2" stroke-linejoin="round"/>
<polyline points="608.4,394.5 616.7,423.1 622.7,421.9 631.1,399.2 640.6,377.7 650.2,349.1 657.3,332.3 664.5,325.2 669.3,316.5 676.5,320.8 686.0,317.3 693.2,317.3 700.3,304.1 709.9,275.5 717.1,254.0 724.2,240.8 733.8,230.1 743.3,246.8 752.9,265.9 762.5,285.0 772.0,298.2 781.6,301.7 786.0,308.9 795.6,312.5 802.7,285.0 809.9,262.3 815.9,256.3 826.6,271.9 836.2,277.8 843.3,277.8 852.9,271.9 862.5,262.3 870.8,254.0 878.0,245.6 883.5,236.0 888.7,254.0 895.9,280.2 903.1,308.9 905.5,318.0 919.8,332.3 924.6,337.1 934.1,353.8 941.3,365.8 948.5,375.3 958.0,380.6 965.2,378.9 972.3,373.4" fill="none" stroke="#9412e8" stroke-width="1.3" stroke-linejoin="round"/>
<text x="700" y="197" fill="#ff8c1a" stroke="#ff8c1a" stroke-width="0.25" textLength="45" lengthAdjust="spacingAndGlyphs">1.39665</text>
<text x="864.5" y="182.5" fill="#ff8c1a" stroke="#ff8c1a" stroke-width="0.25" textLength="44" lengthAdjust="spacingAndGlyphs">1.39933</text>
<text x="767" y="365" fill="#22cc22" stroke="#22cc22" stroke-width="0.25" textLength="44" lengthAdjust="spacingAndGlyphs">1.36723</text>
<text x="947" y="452" fill="#22cc22" stroke="#22cc22" stroke-width="0.25" textLength="44" lengthAdjust="spacingAndGlyphs">1.35030</text>
<text x="593" y="465" fill="#22cc22" stroke="#22cc22" stroke-width="0.25" textLength="38" lengthAdjust="spacingAndGlyphs">1.34768</text>
</g>
<rect x="1016" y="355" width="65" height="19" fill="#f7a035" fill-opacity="0.93"/>
<rect x="1016" y="355" width="65" height="1" fill="#e8861a"/>
<rect x="1016" y="373" width="65" height="1" fill="#e8861a"/>
<rect x="1016" y="355" width="1" height="19" fill="#e8861a"/>
<rect x="1080" y="355" width="1" height="19" fill="#e8861a"/>
<text x="1030.5" y="369" fill="#ffffff" stroke="#ffffff" stroke-width="0.25" textLength="37" lengthAdjust="spacingAndGlyphs">1.36430</text>
<clipPath id="w2r"><rect x="607" y="554" width="409" height="133"/></clipPath><g clip-path="url(#w2r)">
<rect x="610" y="554" width="1" height="133" fill="#262626"/><rect x="614" y="554" width="1" height="133" fill="#262626"/><rect x="618" y="554" width="1" height="133" fill="#262626"/><rect x="622" y="554" width="1" height="133" fill="#262626"/><rect x="626" y="554" width="1" height="133" fill="#3d3d3d"/><rect x="630" y="554" width="1" height="133" fill="#262626"/><rect x="634" y="554" width="1" height="133" fill="#262626"/><rect x="638" y="554" width="1" height="133" fill="#262626"/><rect x="642" y="554" width="1" height="133" fill="#262626"/><rect x="646" y="554" width="1" height="133" fill="#3d3d3d"/><rect x="650" y="554" width="1" height="133" fill="#262626"/><rect x="654" y="554" width="1" height="133" fill="#262626"/><rect x="658" y="554" width="1" height="133" fill="#262626"/><rect x="662" y="554" width="1" height="133" fill="#262626"/><rect x="666" y="554" width="1" height="133" fill="#3d3d3d"/><rect x="670" y="554" width="1" height="133" fill="#262626"/><rect x="674" y="554" width="1" height="133" fill="#262626"/><rect x="678" y="554" width="1" height="133" fill="#262626"/><rect x="682" y="554" width="1" height="133" fill="#262626"/><rect x="686" y="554" width="1" height="133" fill="#3d3d3d"/><rect x="690" y="554" width="1" height="133" fill="#262626"/><rect x="694" y="554" width="1" height="133" fill="#262626"/><rect x="698" y="554" width="1" height="133" fill="#262626"/><rect x="702" y="554" width="1" height="133" fill="#262626"/><rect x="706" y="554" width="1" height="133" fill="#3d3d3d"/><rect x="710" y="554" width="1" height="133" fill="#262626"/><rect x="714" y="554" width="1" height="133" fill="#262626"/><rect x="718" y="554" width="1" height="133" fill="#262626"/><rect x="722" y="554" width="1" height="133" fill="#262626"/><rect x="726" y="554" width="1" height="133" fill="#3d3d3d"/><rect x="730" y="554" width="1" height="133" fill="#262626"/><rect x="734" y="554" width="1" height="133" fill="#262626"/><rect x="738" y="554" width="1" height="133" fill="#262626"/><rect x="742" y="554" width="1" height="133" fill="#262626"/><rect x="746" y="554" width="1" height="133" fill="#3d3d3d"/><rect x="750" y="554" width="1" height="133" fill="#262626"/><rect x="754" y="554" width="1" height="133" fill="#262626"/><rect x="758" y="554" width="1" height="133" fill="#262626"/><rect x="762" y="554" width="1" height="133" fill="#262626"/><rect x="766" y="554" width="1" height="133" fill="#3d3d3d"/><rect x="770" y="554" width="1" height="133" fill="#262626"/><rect x="774" y="554" width="1" height="133" fill="#262626"/><rect x="778" y="554" width="1" height="133" fill="#262626"/><rect x="782" y="554" width="1" height="133" fill="#262626"/><rect x="786" y="554" width="1" height="133" fill="#3d3d3d"/><rect x="790" y="554" width="1" height="133" fill="#262626"/><rect x="794" y="554" width="1" height="133" fill="#262626"/><rect x="798" y="554" width="1" height="133" fill="#262626"/><rect x="802" y="554" width="1" height="133" fill="#262626"/><rect x="806" y="554" width="1" height="133" fill="#3d3d3d"/><rect x="810" y="554" width="1" height="133" fill="#262626"/><rect x="814" y="554" width="1" height="133" fill="#262626"/><rect x="818" y="554" width="1" height="133" fill="#262626"/><rect x="822" y="554" width="1" height="133" fill="#262626"/><rect x="826" y="554" width="1" height="133" fill="#3d3d3d"/><rect x="830" y="554" width="1" height="133" fill="#262626"/><rect x="834" y="554" width="1" height="133" fill="#262626"/><rect x="838" y="554" width="1" height="133" fill="#262626"/><rect x="842" y="554" width="1" height="133" fill="#262626"/><rect x="846" y="554" width="1" height="133" fill="#3d3d3d"/><rect x="850" y="554" width="1" height="133" fill="#262626"/><rect x="854" y="554" width="1" height="133" fill="#262626"/><rect x="858" y="554" width="1" height="133" fill="#262626"/><rect x="862" y="554" width="1" height="133" fill="#262626"/><rect x="866" y="554" width="1" height="133" fill="#3d3d3d"/><rect x="870" y="554" width="1" height="133" fill="#262626"/><rect x="874" y="554" width="1" height="133" fill="#262626"/><rect x="878" y="554" width="1" height="133" fill="#262626"/><rect x="882" y="554" width="1" height="133" fill="#262626"/><rect x="886" y="554" width="1" height="133" fill="#3d3d3d"/><rect x="890" y="554" width="1" height="133" fill="#262626"/><rect x="894" y="554" width="1" height="133" fill="#262626"/><rect x="898" y="554" width="1" height="133" fill="#262626"/><rect x="902" y="554" width="1" height="133" fill="#262626"/><rect x="906" y="554" width="1" height="133" fill="#3d3d3d"/><rect x="910" y="554" width="1" height="133" fill="#262626"/><rect x="914" y="554" width="1" height="133" fill="#262626"/><rect x="918" y="554" width="1" height="133" fill="#262626"/><rect x="922" y="554" width="1" height="133" fill="#262626"/><rect x="926" y="554" width="1" height="133" fill="#3d3d3d"/><rect x="930" y="554" width="1" height="133" fill="#262626"/><rect x="934" y="554" width="1" height="133" fill="#262626"/><rect x="938" y="554" width="1" height="133" fill="#262626"/><rect x="942" y="554" width="1" height="133" fill="#262626"/><rect x="946" y="554" width="1" height="133" fill="#3d3d3d"/><rect x="950" y="554" width="1" height="133" fill="#262626"/><rect x="954" y="554" width="1" height="133" fill="#262626"/><rect x="958" y="554" width="1" height="133" fill="#262626"/><rect x="962" y="554" width="1" height="133" fill="#262626"/><rect x="966" y="554" width="1" height="133" fill="#3d3d3d"/><rect x="970" y="554" width="1" height="133" fill="#262626"/><rect x="974" y="554" width="1" height="133" fill="#262626"/><rect x="978" y="554" width="1" height="133" fill="#262626"/><rect x="982" y="554" width="1" height="133" fill="#262626"/><rect x="986" y="554" width="1" height="133" fill="#3d3d3d"/><rect x="990" y="554" width="1" height="133" fill="#262626"/><rect x="994" y="554" width="1" height="133" fill="#262626"/><rect x="998" y="554" width="1" height="133" fill="#262626"/><rect x="1002" y="554" width="1" height="133" fill="#262626"/><rect x="1006" y="554" width="1" height="133" fill="#3d3d3d"/><rect x="1010" y="554" width="1" height="133" fill="#262626"/><rect x="1014" y="554" width="1" height="133" fill="#262626"/><rect x="607" y="555" width="409" height="1" fill="#262626"/><rect x="607" y="558" width="409" height="1" fill="#262626"/><rect x="607" y="561" width="409" height="1" fill="#262626"/><rect x="607" y="564" width="409" height="1" fill="#262626"/><rect x="607" y="566" width="409" height="1" fill="#3d3d3d"/><rect x="607" y="569" width="409" height="1" fill="#262626"/><rect x="607" y="572" width="409" height="1" fill="#262626"/><rect x="607" y="574" width="409" height="1" fill="#262626"/><rect x="607" y="577" width="409" height="1" fill="#262626"/><rect x="607" y="580" width="409" height="1" fill="#262626"/><rect x="607" y="582" width="409" height="1" fill="#262626"/><rect x="607" y="585" width="409" height="1" fill="#262626"/><rect x="607" y="588" width="409" height="1" fill="#262626"/><rect x="607" y="590" width="409" height="1" fill="#262626"/><rect x="607" y="593" width="409" height="1" fill="#3d3d3d"/><rect x="607" y="596" width="409" height="1" fill="#262626"/><rect x="607" y="598" width="409" height="1" fill="#262626"/><rect x="607" y="601" width="409" height="1" fill="#262626"/><rect x="607" y="604" width="409" height="1" fill="#262626"/><rect x="607" y="607" width="409" height="1" fill="#262626"/><rect x="607" y="609" width="409" height="1" fill="#262626"/><rect x="607" y="612" width="409" height="1" fill="#262626"/><rect x="607" y="615" width="409" height="1" fill="#262626"/><rect x="607" y="617" width="409" height="1" fill="#262626"/><rect x="607" y="620" width="409" height="1" fill="#3d3d3d"/><rect x="607" y="623" width="409" height="1" fill="#262626"/><rect x="607" y="625" width="409" height="1" fill="#262626"/><rect x="607" y="628" width="409" height="1" fill="#262626"/><rect x="607" y="631" width="409" height="1" fill="#262626"/><rect x="607" y="633" width="409" height="1" fill="#262626"/><rect x="607" y="636" width="409" height="1" fill="#262626"/><rect x="607" y="639" width="409" height="1" fill="#262626"/><rect x="607" y="642" width="409" height="1" fill="#262626"/><rect x="607" y="644" width="409" height="1" fill="#262626"/><rect x="607" y="647" width="409" height="1" fill="#3d3d3d"/><rect x="607" y="650" width="409" height="1" fill="#262626"/><rect x="607" y="652" width="409" height="1" fill="#262626"/><rect x="607" y="655" width="409" height="1" fill="#262626"/><rect x="607" y="658" width="409" height="1" fill="#262626"/><rect x="607" y="660" width="409" height="1" fill="#262626"/><rect x="607" y="663" width="409" height="1" fill="#262626"/><rect x="607" y="666" width="409" height="1" fill="#262626"/><rect x="607" y="668" width="409" height="1" fill="#262626"/><rect x="607" y="671" width="409" height="1" fill="#262626"/><rect x="607" y="674" width="409" height="1" fill="#3d3d3d"/><rect x="607" y="676" width="409" height="1" fill="#262626"/><rect x="607" y="679" width="409" height="1" fill="#262626"/><rect x="607" y="682" width="409" height="1" fill="#262626"/><rect x="607" y="685" width="409" height="1" fill="#262626"/><rect x="687" y="554" width="1" height="133" fill="#6a6a6a"/><rect x="773" y="554" width="1" height="133" fill="#6a6a6a"/><rect x="863" y="554" width="1" height="133" fill="#6a6a6a"/><rect x="953" y="554" width="1" height="133" fill="#6a6a6a"/>
<rect x="607" y="620" width="409" height="1" fill="#3d3d3d"/>
<rect x="607" y="647" width="409" height="1" fill="#3d3d3d"/>
<polyline points="608.2,623.6 613.1,623.6 617.6,621.8 624.4,618.3 632.7,618.3 636.5,620.6 640.3,617.5 644.8,616.0 649.4,616.0 653.6,613.3 657.7,615.6 663.0,615.3 666.0,614.5 670.5,615.6 673.6,614.5 677.4,617.9 681.1,616.0 685.7,612.3 689.5,616.3 693.2,615.3 698.5,616.5 702.3,611.8 706.9,610.4 711.4,610.7 714.7,611.5 719.0,609.5 722.8,611.5 729.6,609.7 734.9,609.7 738.6,614.5 743.9,616.5 747.7,616.3 751.5,614.5 756.0,616.0 763.6,619.8 770.4,617.5 775.0,616.3 783.3,620.3 788.6,621.3 794.6,618.3 800.7,614.5 805.2,613.0 809.0,613.5 806.0,613.5 812.1,616.3 828.7,616.3 833.2,617.5 838.5,617.5 842.3,616.0 849.9,616.0 853.7,615.3 857.4,617.5 862.0,614.5 873.3,614.5 878.6,611.5 883.2,612.3 890.0,621.3 895.3,621.3 899.1,624.4 902.8,623.6 907.4,623.6 910.4,624.4 914.2,623.6 922.5,624.4 927.0,626.6 931.6,627.7 936.1,626.6 943.7,629.7 952.0,626.6 955.8,628.4 959.6,626.6 963.4,628.6 968.7,624.4 972.4,625.4" fill="none" stroke="#ff6a00" stroke-width="1.5" stroke-linejoin="round"/>
<polyline points="608.2,635.7 612.7,638.4 617.6,631.9 621.4,620.6 625.2,612.3 628.9,611.2 632.7,612.3 636.5,623.9 640.3,606.7 644.1,604.4 648.6,602.1 653.6,594.1 657.7,600.9 661.5,606.7 666.0,602.1 669.0,603.2 673.6,601.4 677.4,620.6 681.1,615.3 685.7,596.8 689.5,614.5 693.2,612.3 698.5,614.5 702.3,595.3 706.9,593.3 710.6,593.3 714.7,598.6 719.0,592.3 722.8,603.6 726.5,596.8 730.3,595.6 734.9,593.8 738.6,621.3 743.9,631.9 747.7,626.6 751.5,617.2 756.0,620.6 759.8,628.9 763.6,636.5 768.1,632.7 775.0,623.3 779.5,629.7 784.0,639.2 788.6,641.5 793.9,626.6 800.7,605.4 805.2,600.1 809.0,601.7 808.3,600.9 812.1,618.3 818.1,619.4 828.7,619.4 833.2,626.6 837.8,622.1 842.3,616.8 845.3,612.3 849.9,612.3 853.7,605.4 857.4,623.9 862.0,605.4 868.0,605.0 873.3,603.2 878.6,590.3 883.2,599.4 886.2,619.1 890.7,642.2 894.5,642.2 898.3,651.6 902.8,646.3 910.4,649.3 914.2,643.6 922.5,647.8 927.0,653.9 931.6,658.4 936.1,651.6 939.2,653.1 943.7,660.7 948.2,653.1 952.0,638.7 955.8,647.8 959.6,634.9 964.1,641.5 968.7,620.3 972.4,625.1" fill="none" stroke="#9400ff" stroke-width="1.4" stroke-linejoin="round"/>
</g>
<clipPath id="w2c"><rect x="607" y="713" width="409" height="133"/></clipPath><g clip-path="url(#w2c)">
<rect x="610" y="713" width="1" height="133" fill="#262626"/><rect x="614" y="713" width="1" height="133" fill="#262626"/><rect x="618" y="713" width="1" height="133" fill="#262626"/><rect x="622" y="713" width="1" height="133" fill="#262626"/><rect x="626" y="713" width="1" height="133" fill="#3d3d3d"/><rect x="630" y="713" width="1" height="133" fill="#262626"/><rect x="634" y="713" width="1" height="133" fill="#262626"/><rect x="638" y="713" width="1" height="133" fill="#262626"/><rect x="642" y="713" width="1" height="133" fill="#262626"/><rect x="646" y="713" width="1" height="133" fill="#3d3d3d"/><rect x="650" y="713" width="1" height="133" fill="#262626"/><rect x="654" y="713" width="1" height="133" fill="#262626"/><rect x="658" y="713" width="1" height="133" fill="#262626"/><rect x="662" y="713" width="1" height="133" fill="#262626"/><rect x="666" y="713" width="1" height="133" fill="#3d3d3d"/><rect x="670" y="713" width="1" height="133" fill="#262626"/><rect x="674" y="713" width="1" height="133" fill="#262626"/><rect x="678" y="713" width="1" height="133" fill="#262626"/><rect x="682" y="713" width="1" height="133" fill="#262626"/><rect x="686" y="713" width="1" height="133" fill="#3d3d3d"/><rect x="690" y="713" width="1" height="133" fill="#262626"/><rect x="694" y="713" width="1" height="133" fill="#262626"/><rect x="698" y="713" width="1" height="133" fill="#262626"/><rect x="702" y="713" width="1" height="133" fill="#262626"/><rect x="706" y="713" width="1" height="133" fill="#3d3d3d"/><rect x="710" y="713" width="1" height="133" fill="#262626"/><rect x="714" y="713" width="1" height="133" fill="#262626"/><rect x="718" y="713" width="1" height="133" fill="#262626"/><rect x="722" y="713" width="1" height="133" fill="#262626"/><rect x="726" y="713" width="1" height="133" fill="#3d3d3d"/><rect x="730" y="713" width="1" height="133" fill="#262626"/><rect x="734" y="713" width="1" height="133" fill="#262626"/><rect x="738" y="713" width="1" height="133" fill="#262626"/><rect x="742" y="713" width="1" height="133" fill="#262626"/><rect x="746" y="713" width="1" height="133" fill="#3d3d3d"/><rect x="750" y="713" width="1" height="133" fill="#262626"/><rect x="754" y="713" width="1" height="133" fill="#262626"/><rect x="758" y="713" width="1" height="133" fill="#262626"/><rect x="762" y="713" width="1" height="133" fill="#262626"/><rect x="766" y="713" width="1" height="133" fill="#3d3d3d"/><rect x="770" y="713" width="1" height="133" fill="#262626"/><rect x="774" y="713" width="1" height="133" fill="#262626"/><rect x="778" y="713" width="1" height="133" fill="#262626"/><rect x="782" y="713" width="1" height="133" fill="#262626"/><rect x="786" y="713" width="1" height="133" fill="#3d3d3d"/><rect x="790" y="713" width="1" height="133" fill="#262626"/><rect x="794" y="713" width="1" height="133" fill="#262626"/><rect x="798" y="713" width="1" height="133" fill="#262626"/><rect x="802" y="713" width="1" height="133" fill="#262626"/><rect x="806" y="713" width="1" height="133" fill="#3d3d3d"/><rect x="810" y="713" width="1" height="133" fill="#262626"/><rect x="814" y="713" width="1" height="133" fill="#262626"/><rect x="818" y="713" width="1" height="133" fill="#262626"/><rect x="822" y="713" width="1" height="133" fill="#262626"/><rect x="826" y="713" width="1" height="133" fill="#3d3d3d"/><rect x="830" y="713" width="1" height="133" fill="#262626"/><rect x="834" y="713" width="1" height="133" fill="#262626"/><rect x="838" y="713" width="1" height="133" fill="#262626"/><rect x="842" y="713" width="1" height="133" fill="#262626"/><rect x="846" y="713" width="1" height="133" fill="#3d3d3d"/><rect x="850" y="713" width="1" height="133" fill="#262626"/><rect x="854" y="713" width="1" height="133" fill="#262626"/><rect x="858" y="713" width="1" height="133" fill="#262626"/><rect x="862" y="713" width="1" height="133" fill="#262626"/><rect x="866" y="713" width="1" height="133" fill="#3d3d3d"/><rect x="870" y="713" width="1" height="133" fill="#262626"/><rect x="874" y="713" width="1" height="133" fill="#262626"/><rect x="878" y="713" width="1" height="133" fill="#262626"/><rect x="882" y="713" width="1" height="133" fill="#262626"/><rect x="886" y="713" width="1" height="133" fill="#3d3d3d"/><rect x="890" y="713" width="1" height="133" fill="#262626"/><rect x="894" y="713" width="1" height="133" fill="#262626"/><rect x="898" y="713" width="1" height="133" fill="#262626"/><rect x="902" y="713" width="1" height="133" fill="#262626"/><rect x="906" y="713" width="1" height="133" fill="#3d3d3d"/><rect x="910" y="713" width="1" height="133" fill="#262626"/><rect x="914" y="713" width="1" height="133" fill="#262626"/><rect x="918" y="713" width="1" height="133" fill="#262626"/><rect x="922" y="713" width="1" height="133" fill="#262626"/><rect x="926" y="713" width="1" height="133" fill="#3d3d3d"/><rect x="930" y="713" width="1" height="133" fill="#262626"/><rect x="934" y="713" width="1" height="133" fill="#262626"/><rect x="938" y="713" width="1" height="133" fill="#262626"/><rect x="942" y="713" width="1" height="133" fill="#262626"/><rect x="946" y="713" width="1" height="133" fill="#3d3d3d"/><rect x="950" y="713" width="1" height="133" fill="#262626"/><rect x="954" y="713" width="1" height="133" fill="#262626"/><rect x="958" y="713" width="1" height="133" fill="#262626"/><rect x="962" y="713" width="1" height="133" fill="#262626"/><rect x="966" y="713" width="1" height="133" fill="#3d3d3d"/><rect x="970" y="713" width="1" height="133" fill="#262626"/><rect x="974" y="713" width="1" height="133" fill="#262626"/><rect x="978" y="713" width="1" height="133" fill="#262626"/><rect x="982" y="713" width="1" height="133" fill="#262626"/><rect x="986" y="713" width="1" height="133" fill="#3d3d3d"/><rect x="990" y="713" width="1" height="133" fill="#262626"/><rect x="994" y="713" width="1" height="133" fill="#262626"/><rect x="998" y="713" width="1" height="133" fill="#262626"/><rect x="1002" y="713" width="1" height="133" fill="#262626"/><rect x="1006" y="713" width="1" height="133" fill="#3d3d3d"/><rect x="1010" y="713" width="1" height="133" fill="#262626"/><rect x="1014" y="713" width="1" height="133" fill="#262626"/><rect x="607" y="716" width="409" height="1" fill="#262626"/><rect x="607" y="721" width="409" height="1" fill="#262626"/><rect x="607" y="725" width="409" height="1" fill="#262626"/><rect x="607" y="730" width="409" height="1" fill="#262626"/><rect x="607" y="734" width="409" height="1" fill="#262626"/><rect x="607" y="739" width="409" height="1" fill="#3d3d3d"/><rect x="607" y="744" width="409" height="1" fill="#262626"/><rect x="607" y="748" width="409" height="1" fill="#262626"/><rect x="607" y="753" width="409" height="1" fill="#262626"/><rect x="607" y="757" width="409" height="1" fill="#262626"/><rect x="607" y="762" width="409" height="1" fill="#262626"/><rect x="607" y="766" width="409" height="1" fill="#262626"/><rect x="607" y="771" width="409" height="1" fill="#262626"/><rect x="607" y="776" width="409" height="1" fill="#262626"/><rect x="607" y="780" width="409" height="1" fill="#262626"/><rect x="607" y="785" width="409" height="1" fill="#3d3d3d"/><rect x="607" y="789" width="409" height="1" fill="#262626"/><rect x="607" y="794" width="409" height="1" fill="#262626"/><rect x="607" y="799" width="409" height="1" fill="#262626"/><rect x="607" y="803" width="409" height="1" fill="#262626"/><rect x="607" y="808" width="409" height="1" fill="#262626"/><rect x="607" y="812" width="409" height="1" fill="#262626"/><rect x="607" y="817" width="409" height="1" fill="#262626"/><rect x="607" y="821" width="409" height="1" fill="#262626"/><rect x="607" y="826" width="409" height="1" fill="#262626"/><rect x="607" y="831" width="409" height="1" fill="#3d3d3d"/><rect x="607" y="835" width="409" height="1" fill="#262626"/><rect x="607" y="840" width="409" height="1" fill="#262626"/><rect x="607" y="844" width="409" height="1" fill="#262626"/><rect x="687" y="713" width="1" height="133" fill="#6a6a6a"/><rect x="773" y="713" width="1" height="133" fill="#6a6a6a"/><rect x="863" y="713" width="1" height="133" fill="#6a6a6a"/><rect x="953" y="713" width="1" height="133" fill="#6a6a6a"/>
<rect x="608.5" y="785.3" width="2" height="9.4" fill="none" stroke="#a0a0a0" stroke-width="1"/><rect x="611.5" y="785.3" width="2" height="10.2" fill="none" stroke="#a0a0a0" stroke-width="1"/><rect x="615.5" y="785.3" width="2" height="10.2" fill="none" stroke="#a0a0a0" stroke-width="1"/><rect x="619.5" y="785.3" width="2" height="5.2" fill="none" stroke="#a0a0a0" stroke-width="1"/><rect x="623" y="784" width="3" height="2" fill="#a0a0a0"/><rect x="627.5" y="781.1" width="2" height="4.2" fill="none" stroke="#a0a0a0" stroke-width="1"/><rect x="631.5" y="779.6" width="2" height="5.7" fill="none" stroke="#a0a0a0" stroke-width="1"/><rect x="635.5" y="780.3" width="2" height="5.0" fill="none" stroke="#a0a0a0" stroke-width="1"/><rect x="639.5" y="776.5" width="2" height="8.8" fill="none" stroke="#a0a0a0" stroke-width="1"/><rect x="643.5" y="773.5" width="2" height="11.8" fill="none" stroke="#a0a0a0" stroke-width="1"/><rect x="647.5" y="771.3" width="2" height="14.0" fill="none" stroke="#a0a0a0" stroke-width="1"/><rect x="651.5" y="767.2" width="2" height="18.1" fill="none" stroke="#a0a0a0" stroke-width="1"/><rect x="655.5" y="768.2" width="2" height="17.1" fill="none" stroke="#a0a0a0" stroke-width="1"/><rect x="660.5" y="769.3" width="2" height="16.0" fill="none" stroke="#a0a0a0" stroke-width="1"/><rect x="664.5" y="770.5" width="2" height="14.8" fill="none" stroke="#a0a0a0" stroke-width="1"/><rect x="668.5" y="772.0" width="2" height="13.3" fill="none" stroke="#a0a0a0" stroke-width="1"/><rect x="672.5" y="773.5" width="2" height="11.8" fill="none" stroke="#a0a0a0" stroke-width="1"/><rect x="676.5" y="778.4" width="2" height="6.9" fill="none" stroke="#a0a0a0" stroke-width="1"/><rect x="680.5" y="781.4" width="2" height="3.9" fill="none" stroke="#a0a0a0" stroke-width="1"/><rect x="684.5" y="777.3" width="2" height="8.0" fill="none" stroke="#a0a0a0" stroke-width="1"/><rect x="688.5" y="780.3" width="2" height="5.0" fill="none" stroke="#a0a0a0" stroke-width="1"/><rect x="692.5" y="781.4" width="2" height="3.9" fill="none" stroke="#a0a0a0" stroke-width="1"/><rect x="696.5" y="783.4" width="2" height="1.9" fill="none" stroke="#a0a0a0" stroke-width="1"/><rect x="701.5" y="777.3" width="2" height="8.0" fill="none" stroke="#a0a0a0" stroke-width="1"/><rect x="705.5" y="773.5" width="2" height="11.8" fill="none" stroke="#a0a0a0" stroke-width="1"/><rect x="709.5" y="772.3" width="2" height="13.0" fill="none" stroke="#a0a0a0" stroke-width="1"/><rect x="713.5" y="773.5" width="2" height="11.8" fill="none" stroke="#a0a0a0" stroke-width="1"/><rect x="717.5" y="772.3" width="2" height="13.0" fill="none" stroke="#a0a0a0" stroke-width="1"/><rect x="721.5" y="774.3" width="2" height="11.0" fill="none" stroke="#a0a0a0" stroke-width="1"/><rect x="725.5" y="775.3" width="2" height="10.0" fill="none" stroke="#a0a0a0" stroke-width="1"/><rect x="729.5" y="775.3" width="2" height="10.0" fill="none" stroke="#a0a0a0" stroke-width="1"/><rect x="733.5" y="776.5" width="2" height="8.8" fill="none" stroke="#a0a0a0" stroke-width="1"/><rect x="737.5" y="783.4" width="2" height="1.9" fill="none" stroke="#a0a0a0" stroke-width="1"/><rect x="741.5" y="785.3" width="2" height="5.2" fill="none" stroke="#a0a0a0" stroke-width="1"/><rect x="745.5" y="785.3" width="2" height="9.4" fill="none" stroke="#a0a0a0" stroke-width="1"/><rect x="750.5" y="785.3" width="2" height="9.4" fill="none" stroke="#a0a0a0" stroke-width="1"/><rect x="754.5" y="785.3" width="2" height="10.2" fill="none" stroke="#a0a0a0" stroke-width="1"/><rect x="758.5" y="785.3" width="2" height="13.2" fill="none" stroke="#a0a0a0" stroke-width="1"/><rect x="762.5" y="785.3" width="2" height="17.7" fill="none" stroke="#a0a0a0" stroke-width="1"/><rect x="766.5" y="785.3" width="2" height="18.2" fill="none" stroke="#a0a0a0" stroke-width="1"/><rect x="770.5" y="785.3" width="2" height="17.0" fill="none" stroke="#a0a0a0" stroke-width="1"/><rect x="774.5" y="785.3" width="2" height="13.9" fill="none" stroke="#a0a0a0" stroke-width="1"/><rect x="778.5" y="785.3" width="2" height="13.6" fill="none" stroke="#a0a0a0" stroke-width="1"/><rect x="782.5" y="785.3" width="2" height="15.2" fill="none" stroke="#a0a0a0" stroke-width="1"/><rect x="786.5" y="785.3" width="2" height="17.0" fill="none" stroke="#a0a0a0" stroke-width="1"/><rect x="790.5" y="785.3" width="2" height="13.9" fill="none" stroke="#a0a0a0" stroke-width="1"/><rect x="795.5" y="785.3" width="2" height="9.4" fill="none" stroke="#a0a0a0" stroke-width="1"/><rect x="799.5" y="785.3" width="2" height="2.1" fill="none" stroke="#a0a0a0" stroke-width="1"/><rect x="803.5" y="782.6" width="2" height="2.7" fill="none" stroke="#a0a0a0" stroke-width="1"/><rect x="807.5" y="779.9" width="2" height="5.4" fill="none" stroke="#a0a0a0" stroke-width="1"/><rect x="811.5" y="780.8" width="2" height="4.5" fill="none" stroke="#a0a0a0" stroke-width="1"/><rect x="815.5" y="782.6" width="2" height="2.7" fill="none" stroke="#a0a0a0" stroke-width="1"/><rect x="819.5" y="783.4" width="2" height="1.9" fill="none" stroke="#a0a0a0" stroke-width="1"/><rect x="823" y="784" width="3" height="2" fill="#a0a0a0"/><rect x="827" y="784" width="3" height="2" fill="#a0a0a0"/><rect x="831" y="784" width="3" height="2" fill="#a0a0a0"/><rect x="836" y="784" width="3" height="2" fill="#a0a0a0"/><rect x="840" y="784" width="3" height="2" fill="#a0a0a0"/><rect x="844" y="784" width="3" height="2" fill="#a0a0a0"/><rect x="848" y="784" width="3" height="2" fill="#a0a0a0"/><rect x="852" y="784" width="3" height="2" fill="#a0a0a0"/><rect x="856" y="784" width="3" height="2" fill="#a0a0a0"/><rect x="860.5" y="783.4" width="2" height="1.9" fill="none" stroke="#a0a0a0" stroke-width="1"/><rect x="864.5" y="782.3" width="2" height="3.0" fill="none" stroke="#a0a0a0" stroke-width="1"/><rect x="868.5" y="781.1" width="2" height="4.2" fill="none" stroke="#a0a0a0" stroke-width="1"/><rect x="872.5" y="781.1" width="2" height="4.2" fill="none" stroke="#a0a0a0" stroke-width="1"/><rect x="876.5" y="778.4" width="2" height="6.9" fill="none" stroke="#a0a0a0" stroke-width="1"/><rect x="881.5" y="778.4" width="2" height="6.9" fill="none" stroke="#a0a0a0" stroke-width="1"/><rect x="885.5" y="782.6" width="2" height="2.7" fill="none" stroke="#a0a0a0" stroke-width="1"/><rect x="889.5" y="785.3" width="2" height="4.1" fill="none" stroke="#a0a0a0" stroke-width="1"/><rect x="893.5" y="785.3" width="2" height="9.4" fill="none" stroke="#a0a0a0" stroke-width="1"/><rect x="897.5" y="785.3" width="2" height="15.2" fill="none" stroke="#a0a0a0" stroke-width="1"/><rect x="901.5" y="785.3" width="2" height="17.3" fill="none" stroke="#a0a0a0" stroke-width="1"/><rect x="905.5" y="785.3" width="2" height="17.0" fill="none" stroke="#a0a0a0" stroke-width="1"/><rect x="909.5" y="785.3" width="2" height="18.2" fill="none" stroke="#a0a0a0" stroke-width="1"/><rect x="913.5" y="785.3" width="2" height="17.3" fill="none" stroke="#a0a0a0" stroke-width="1"/><rect x="917.5" y="785.3" width="2" height="15.2" fill="none" stroke="#a0a0a0" stroke-width="1"/><rect x="921.5" y="785.3" width="2" height="14.2" fill="none" stroke="#a0a0a0" stroke-width="1"/><rect x="926.5" y="785.3" width="2" height="14.2" fill="none" stroke="#a0a0a0" stroke-width="1"/><rect x="930.5" y="785.3" width="2" height="15.2" fill="none" stroke="#a0a0a0" stroke-width="1"/><rect x="934.5" y="785.3" width="2" height="13.2" fill="none" stroke="#a0a0a0" stroke-width="1"/><rect x="938.5" y="785.3" width="2" height="12.1" fill="none" stroke="#a0a0a0" stroke-width="1"/><rect x="942.5" y="785.3" width="2" height="12.4" fill="none" stroke="#a0a0a0" stroke-width="1"/><rect x="946.5" y="785.3" width="2" height="12.4" fill="none" stroke="#a0a0a0" stroke-width="1"/><rect x="950.5" y="785.3" width="2" height="8.2" fill="none" stroke="#a0a0a0" stroke-width="1"/><rect x="954.5" y="785.3" width="2" height="7.1" fill="none" stroke="#a0a0a0" stroke-width="1"/><rect x="958.5" y="785.3" width="2" height="4.1" fill="none" stroke="#a0a0a0" stroke-width="1"/><rect x="962.5" y="785.3" width="2" height="3.1" fill="none" stroke="#a0a0a0" stroke-width="1"/><rect x="966" y="784" width="3" height="2" fill="#a0a0a0"/><rect x="971.5" y="782.9" width="2" height="2.4" fill="none" stroke="#a0a0a0" stroke-width="1"/>
<polyline points="608.2,796.2 614.6,800.8 621.4,803.5 626.7,803.0 632.7,800.5 636.5,799.2 643.3,793.9 650.9,787.1 658.4,779.6 666.0,773.5 673.6,767.5 682.7,763.7 690.2,760.2 698.5,759.1 705.4,753.9 712.9,747.8 720.5,742.1 728.0,737.5 734.1,734.2 738.6,733.4 746.2,737.2 755.3,743.3 764.4,752.3 773.4,762.9 781.0,770.5 788.6,778.1 794.6,781.8 800.7,782.9 806.0,779.6 815.1,776.2 824.2,776.2 833.2,776.5 842.3,777.8 851.4,776.5 863.5,775.8 872.6,773.5 881.7,769.7 887.7,768.2 893.8,772.0 902.8,781.8 911.9,793.2 921.0,800.8 930.1,808.3 939.2,816.6 948.2,823.5 954.3,827.2 961.8,829.5 967.9,829.5 972.4,828.3" fill="none" stroke="#12b4c4" stroke-width="1.4" stroke-linejoin="round"/>
<polyline points="608.2,806.1 612.3,809.8 616.4,812.6 621.4,808.3 626.7,800.5 632.7,793.9 636.5,793.2 641.8,785.6 647.9,777.3 652.4,769.0 658.4,762.9 663.0,760.7 667.5,757.2 673.6,755.4 678.1,758.4 681.1,759.1 685.4,754.2 689.5,755.4 694.0,755.7 698.5,757.6 703.8,747.8 709.9,738.0 714.4,735.4 719.0,731.5 722.8,731.5 728.0,727.8 734.9,724.3 740.2,732.7 747.7,747.5 754.5,752.6 758.3,756.1 762.8,766.7 767.4,773.5 771.9,777.8 776.5,778.8 781.0,782.6 787.1,790.2 792.4,794.7 796.9,791.7 803.7,779.6 809.0,771.3 815.1,773.2 821.1,773.5 828.7,775.0 836.3,778.4 842.3,778.4 849.9,776.5 854.4,775.0 860.5,775.0 866.5,770.8 872.6,768.7 877.1,766.0 882.4,761.4 887.7,766.7 893.8,781.1 899.8,795.9 908.9,807.6 918.0,813.6 924.0,816.6 931.6,825.0 939.2,829.5 947.5,835.3 952.0,833.3 955.8,835.3 960.3,833.3 964.1,833.3 967.9,828.8 972.4,824.2" fill="none" stroke="#ff1010" stroke-width="1.4" stroke-linejoin="round"/>
</g>
<rect x="1130" y="101" width="94" height="14" fill="#3d5278"/>
<rect x="1130" y="114" width="94" height="1" fill="#24345a"/>
<text x="1130.5" y="113" fill="#ffffff" stroke="#ffffff" stroke-width="0.25" textLength="89.5" lengthAdjust="spacingAndGlyphs">2014/06/03 12:00</text>
<clipPath id="w3m"><rect x="1133" y="115" width="400" height="413"/></clipPath><g clip-path="url(#w3m)">
<rect x="1136" y="115" width="1" height="413" fill="#262626"/><rect x="1140" y="115" width="1" height="413" fill="#262626"/><rect x="1144" y="115" width="1" height="413" fill="#262626"/><rect x="1148" y="115" width="1" height="413" fill="#262626"/><rect x="1152" y="115" width="1" height="413" fill="#262626"/><rect x="1156" y="115" width="1" height="413" fill="#262626"/><rect x="1160" y="115" width="1" height="413" fill="#262626"/><rect x="1164" y="115" width="1" height="413" fill="#262626"/><rect x="1168" y="115" width="1" height="413" fill="#262626"/><rect x="1172" y="115" width="1" height="413" fill="#262626"/><rect x="1176" y="115" width="1" height="413" fill="#262626"/><rect x="1180" y="115" width="1" height="413" fill="#262626"/><rect x="1184" y="115" width="1" height="413" fill="#262626"/><rect x="1188" y="115" width="1" height="413" fill="#262626"/><rect x="1192" y="115" width="1" height="413" fill="#262626"/><rect x="1196" y="115" width="1" height="413" fill="#262626"/><rect x="1200" y="115" width="1" height="413" fill="#262626"/><rect x="1204" y="115" width="1" height="413" fill="#262626"/><rect x="1208" y="115" width="1" height="413" fill="#262626"/><rect x="1212" y="115" width="1" height="413" fill="#262626"/><rect x="1216" y="115" width="1" height="413" fill="#262626"/><rect x="1220" y="115" width="1" height="413" fill="#262626"/><rect x="1224" y="115" width="1" height="413" fill="#262626"/><rect x="1228" y="115" width="1" height="413" fill="#262626"/><rect x="1232" y="115" width="1" height="413" fill="#262626"/><rect x="1236" y="115" width="1" height="413" fill="#262626"/><rect x="1240" y="115" width="1" height="413" fill="#262626"/><rect x="1244" y="115" width="1" height="413" fill="#262626"/><rect x="1248" y="115" width="1" height="413" fill="#262626"/><rect x="1252" y="115" width="1" height="413" fill="#262626"/><rect x="1256" y="115" width="1" height="413" fill="#262626"/><rect x="1260" y="115" width="1" height="413" fill="#262626"/><rect x="1264" y="115" width="1" height="413" fill="#262626"/><rect x="1268" y="115" width="1" height="413" fill="#262626"/><rect x="1272" y="115" width="1" height="413" fill="#262626"/><rect x="1276" y="115" width="1" height="413" fill="#262626"/><rect x="1280" y="115" width="1" height="413" fill="#262626"/><rect x="1284" y="115" width="1" height="413" fill="#262626"/><rect x="1288" y="115" width="1" height="413" fill="#262626"/><rect x="1292" y="115" width="1" height="413" fill="#262626"/><rect x="1296" y="115" width="1" height="413" fill="#262626"/><rect x="1300" y="115" width="1" height="413" fill="#262626"/><rect x="1304" y="115" width="1" height="413" fill="#262626"/><rect x="1308" y="115" width="1" height="413" fill="#262626"/><rect x="1312" y="115" width="1" height="413" fill="#262626"/><rect x="1316" y="115" width="1" height="413" fill="#262626"/><rect x="1320" y="115" width="1" height="413" fill="#262626"/><rect x="1324" y="115" width="1" height="413" fill="#262626"/><rect x="1328" y="115" width="1" height="413" fill="#262626"/><rect x="1332" y="115" width="1" height="413" fill="#262626"/><rect x="1336" y="115" width="1" height="413" fill="#262626"/><rect x="1340" y="115" width="1" height="413" fill="#262626"/><rect x="1344" y="115" width="1" height="413" fill="#262626"/><rect x="1348" y="115" width="1" height="413" fill="#262626"/><rect x="1352" y="115" width="1" height="413" fill="#262626"/><rect x="1356" y="115" width="1" height="413" fill="#262626"/><rect x="1360" y="115" width="1" height="413" fill="#262626"/><rect x="1364" y="115" width="1" height="413" fill="#262626"/><rect x="1368" y="115" width="1" height="413" fill="#262626"/><rect x="1372" y="115" width="1" height="413" fill="#262626"/><rect x="1376" y="115" width="1" height="413" fill="#262626"/><rect x="1380" y="115" width="1" height="413" fill="#262626"/><rect x="1384" y="115" width="1" height="413" fill="#262626"/><rect x="1388" y="115" width="1" height="413" fill="#262626"/><rect x="1392" y="115" width="1" height="413" fill="#262626"/><rect x="1396" y="115" width="1" height="413" fill="#262626"/><rect x="1400" y="115" width="1" height="413" fill="#262626"/><rect x="1404" y="115" width="1" height="413" fill="#262626"/><rect x="1408" y="115" width="1" height="413" fill="#262626"/><rect x="1412" y="115" width="1" height="413" fill="#262626"/><rect x="1416" y="115" width="1" height="413" fill="#262626"/><rect x="1420" y="115" width="1" height="413" fill="#262626"/><rect x="1424" y="115" width="1" height="413" fill="#262626"/><rect x="1428" y="115" width="1" height="413" fill="#262626"/><rect x="1432" y="115" width="1" height="413" fill="#262626"/><rect x="1436" y="115" width="1" height="413" fill="#262626"/><rect x="1440" y="115" width="1" height="413" fill="#262626"/><rect x="1444" y="115" width="1" height="413" fill="#262626"/><rect x="1448" y="115" width="1" height="413" fill="#262626"/><rect x="1452" y="115" width="1" height="413" fill="#262626"/><rect x="1456" y="115" width="1" height="413" fill="#262626"/><rect x="1460" y="115" width="1" height="413" fill="#262626"/><rect x="1464" y="115" width="1" height="413" fill="#262626"/><rect x="1468" y="115" width="1" height="413" fill="#262626"/><rect x="1472" y="115" width="1" height="413" fill="#262626"/><rect x="1476" y="115" width="1" height="413" fill="#262626"/><rect x="1480" y="115" width="1" height="413" fill="#262626"/><rect x="1484" y="115" width="1" height="413" fill="#262626"/><rect x="1488" y="115" width="1" height="413" fill="#262626"/><rect x="1492" y="115" width="1" height="413" fill="#262626"/><rect x="1496" y="115" width="1" height="413" fill="#262626"/><rect x="1500" y="115" width="1" height="413" fill="#262626"/><rect x="1504" y="115" width="1" height="413" fill="#262626"/><rect x="1508" y="115" width="1" height="413" fill="#262626"/><rect x="1512" y="115" width="1" height="413" fill="#262626"/><rect x="1516" y="115" width="1" height="413" fill="#262626"/><rect x="1520" y="115" width="1" height="413" fill="#262626"/><rect x="1524" y="115" width="1" height="413" fill="#262626"/><rect x="1528" y="115" width="1" height="413" fill="#262626"/><rect x="1133" y="117" width="400" height="1" fill="#262626"/><rect x="1133" y="121" width="400" height="1" fill="#262626"/><rect x="1133" y="125" width="400" height="1" fill="#262626"/><rect x="1133" y="130" width="400" height="1" fill="#262626"/><rect x="1133" y="134" width="400" height="1" fill="#262626"/><rect x="1133" y="138" width="400" height="1" fill="#262626"/><rect x="1133" y="143" width="400" height="1" fill="#3d3d3d"/><rect x="1133" y="147" width="400" height="1" fill="#262626"/><rect x="1133" y="151" width="400" height="1" fill="#262626"/><rect x="1133" y="156" width="400" height="1" fill="#262626"/><rect x="1133" y="160" width="400" height="1" fill="#262626"/><rect x="1133" y="165" width="400" height="1" fill="#262626"/><rect x="1133" y="169" width="400" height="1" fill="#262626"/><rect x="1133" y="173" width="400" height="1" fill="#262626"/><rect x="1133" y="178" width="400" height="1" fill="#262626"/><rect x="1133" y="182" width="400" height="1" fill="#262626"/><rect x="1133" y="186" width="400" height="1" fill="#3d3d3d"/><rect x="1133" y="191" width="400" height="1" fill="#262626"/><rect x="1133" y="195" width="400" height="1" fill="#262626"/><rect x="1133" y="199" width="400" height="1" fill="#262626"/><rect x="1133" y="204" width="400" height="1" fill="#262626"/><rect x="1133" y="208" width="400" height="1" fill="#262626"/><rect x="1133" y="213" width="400" height="1" fill="#262626"/><rect x="1133" y="217" width="400" height="1" fill="#262626"/><rect x="1133" y="221" width="400" height="1" fill="#262626"/><rect x="1133" y="226" width="400" height="1" fill="#262626"/><rect x="1133" y="230" width="400" height="1" fill="#3d3d3d"/><rect x="1133" y="234" width="400" height="1" fill="#262626"/><rect x="1133" y="239" width="400" height="1" fill="#262626"/><rect x="1133" y="243" width="400" height="1" fill="#262626"/><rect x="1133" y="247" width="400" height="1" fill="#262626"/><rect x="1133" y="252" width="400" height="1" fill="#262626"/><rect x="1133" y="256" width="400" height="1" fill="#262626"/><rect x="1133" y="261" width="400" height="1" fill="#262626"/><rect x="1133" y="265" width="400" height="1" fill="#262626"/><rect x="1133" y="269" width="400" height="1" fill="#262626"/><rect x="1133" y="274" width="400" height="1" fill="#3d3d3d"/><rect x="1133" y="278" width="400" height="1" fill="#262626"/><rect x="1133" y="282" width="400" height="1" fill="#262626"/><rect x="1133" y="287" width="400" height="1" fill="#262626"/><rect x="1133" y="291" width="400" height="1" fill="#262626"/><rect x="1133" y="295" width="400" height="1" fill="#262626"/><rect x="1133" y="300" width="400" height="1" fill="#262626"/><rect x="1133" y="304" width="400" height="1" fill="#262626"/><rect x="1133" y="309" width="400" height="1" fill="#262626"/><rect x="1133" y="313" width="400" height="1" fill="#262626"/><rect x="1133" y="317" width="400" height="1" fill="#3d3d3d"/><rect x="1133" y="322" width="400" height="1" fill="#262626"/><rect x="1133" y="326" width="400" height="1" fill="#262626"/><rect x="1133" y="330" width="400" height="1" fill="#262626"/><rect x="1133" y="335" width="400" height="1" fill="#262626"/><rect x="1133" y="339" width="400" height="1" fill="#262626"/><rect x="1133" y="343" width="400" height="1" fill="#262626"/><rect x="1133" y="348" width="400" height="1" fill="#262626"/><rect x="1133" y="352" width="400" height="1" fill="#262626"/><rect x="1133" y="357" width="400" height="1" fill="#262626"/><rect x="1133" y="361" width="400" height="1" fill="#3d3d3d"/><rect x="1133" y="365" width="400" height="1" fill="#262626"/><rect x="1133" y="370" width="400" height="1" fill="#262626"/><rect x="1133" y="374" width="400" height="1" fill="#262626"/><rect x="1133" y="378" width="400" height="1" fill="#262626"/><rect x="1133" y="383" width="400" height="1" fill="#262626"/><rect x="1133" y="387" width="400" height="1" fill="#262626"/><rect x="1133" y="391" width="400" height="1" fill="#262626"/><rect x="1133" y="396" width="400" height="1" fill="#262626"/><rect x="1133" y="400" width="400" height="1" fill="#262626"/><rect x="1133" y="405" width="400" height="1" fill="#3d3d3d"/><rect x="1133" y="409" width="400" height="1" fill="#262626"/><rect x="1133" y="413" width="400" height="1" fill="#262626"/><rect x="1133" y="418" width="400" height="1" fill="#262626"/><rect x="1133" y="422" width="400" height="1" fill="#262626"/><rect x="1133" y="426" width="400" height="1" fill="#262626"/><rect x="1133" y="431" width="400" height="1" fill="#262626"/><rect x="1133" y="435" width="400" height="1" fill="#262626"/><rect x="1133" y="439" width="400" height="1" fill="#262626"/><rect x="1133" y="444" width="400" height="1" fill="#262626"/><rect x="1133" y="448" width="400" height="1" fill="#3d3d3d"/><rect x="1133" y="452" width="400" height="1" fill="#262626"/><rect x="1133" y="457" width="400" height="1" fill="#262626"/><rect x="1133" y="461" width="400" height="1" fill="#262626"/><rect x="1133" y="466" width="400" height="1" fill="#262626"/><rect x="1133" y="470" width="400" height="1" fill="#262626"/><rect x="1133" y="474" width="400" height="1" fill="#262626"/><rect x="1133" y="479" width="400" height="1" fill="#262626"/><rect x="1133" y="483" width="400" height="1" fill="#262626"/><rect x="1133" y="487" width="400" height="1" fill="#262626"/><rect x="1133" y="492" width="400" height="1" fill="#3d3d3d"/><rect x="1133" y="496" width="400" height="1" fill="#262626"/><rect x="1133" y="500" width="400" height="1" fill="#262626"/><rect x="1133" y="505" width="400" height="1" fill="#262626"/><rect x="1133" y="509" width="400" height="1" fill="#262626"/><rect x="1133" y="514" width="400" height="1" fill="#262626"/><rect x="1133" y="518" width="400" height="1" fill="#262626"/><rect x="1133" y="522" width="400" height="1" fill="#262626"/><rect x="1228" y="115" width="1" height="413" fill="#3d3d3d"/><rect x="1324" y="115" width="1" height="413" fill="#3d3d3d"/><rect x="1420" y="115" width="1" height="413" fill="#3d3d3d"/><rect x="1516" y="115" width="1" height="413" fill="#3d3d3d"/><rect x="1180" y="115" width="1" height="413" fill="#6a6a6a"/><rect x="1276" y="115" width="1" height="413" fill="#6a6a6a"/><rect x="1372" y="115" width="1" height="413" fill="#6a6a6a"/><rect x="1468" y="115" width="1" height="413" fill="#6a6a6a"/>
<rect x="1133" y="252" width="400" height="1" fill="#ff9a00"/>
<rect x="1134" y="359.0" width="1" height="25.5" fill="#ff2222"/><rect x="1132.5" y="359.9" width="3" height="20.2" fill="#c81e1e" stroke="#ff2222" stroke-width="1"/><rect x="1138" y="350.1" width="1" height="30.0" fill="#4646ff"/><rect x="1136.5" y="361.1" width="3" height="1.2" fill="#3a3ad0" stroke="#4646ff" stroke-width="1"/><rect x="1142" y="343.7" width="1" height="24.6" fill="#ff2222"/><rect x="1140.5" y="346.9" width="3" height="15.4" fill="#c81e1e" stroke="#ff2222" stroke-width="1"/><rect x="1146" y="332.8" width="1" height="24.6" fill="#ff2222"/><rect x="1144.5" y="341.5" width="3" height="6.3" fill="#c81e1e" stroke="#ff2222" stroke-width="1"/><rect x="1150" y="331.9" width="1" height="37.3" fill="#4646ff"/><rect x="1148.5" y="341.5" width="3" height="12.6" fill="#3a3ad0" stroke="#4646ff" stroke-width="1"/><rect x="1154" y="331.9" width="1" height="27.3" fill="#ff2222"/><rect x="1152.5" y="344.2" width="3" height="9.9" fill="#c81e1e" stroke="#ff2222" stroke-width="1"/><rect x="1158" y="336.4" width="1" height="22.8" fill="#4646ff"/><rect x="1156.5" y="344.2" width="3" height="9.9" fill="#3a3ad0" stroke="#4646ff" stroke-width="1"/><rect x="1162" y="352.8" width="1" height="15.5" fill="#4646ff"/><rect x="1160.5" y="354.2" width="3" height="11.8" fill="#3a3ad0" stroke="#4646ff" stroke-width="1"/><rect x="1166" y="357.4" width="1" height="15.4" fill="#ff2222"/><rect x="1164.5" y="365.1" width="3" height="1.8" fill="#c81e1e" stroke="#ff2222" stroke-width="1"/><rect x="1170" y="355.5" width="1" height="18.3" fill="#ff2222"/><rect x="1168.5" y="363.7" width="3" height="1.4" fill="#c81e1e" stroke="#ff2222" stroke-width="1"/><rect x="1174" y="349.2" width="1" height="17.3" fill="#4646ff"/><rect x="1172.5" y="363.7" width="3" height="1.0" fill="#3a3ad0" stroke="#4646ff" stroke-width="1"/><rect x="1178" y="342.8" width="1" height="76.5" fill="#4646ff"/><rect x="1176.5" y="363.7" width="3" height="48.7" fill="#3a3ad0" stroke="#4646ff" stroke-width="1"/><rect x="1182" y="397.4" width="1" height="27.4" fill="#4646ff"/><rect x="1180.5" y="412.5" width="3" height="1.0" fill="#3a3ad0" stroke="#4646ff" stroke-width="1"/><rect x="1186" y="394.7" width="1" height="21.9" fill="#ff2222"/><rect x="1184.5" y="398.8" width="3" height="14.5" fill="#c81e1e" stroke="#ff2222" stroke-width="1"/><rect x="1190" y="394.7" width="1" height="22.7" fill="#4646ff"/><rect x="1188.5" y="398.8" width="3" height="10.8" fill="#3a3ad0" stroke="#4646ff" stroke-width="1"/><rect x="1194" y="403.8" width="1" height="26.4" fill="#ff2222"/><rect x="1192.5" y="409.7" width="3" height="1.0" fill="#c81e1e" stroke="#ff2222" stroke-width="1"/><rect x="1198" y="397.4" width="1" height="20.0" fill="#ff2222"/><rect x="1196.5" y="402.5" width="3" height="7.1" fill="#c81e1e" stroke="#ff2222" stroke-width="1"/><rect x="1202" y="398.3" width="1" height="15.5" fill="#4646ff"/><rect x="1200.5" y="402.5" width="3" height="4.4" fill="#3a3ad0" stroke="#4646ff" stroke-width="1"/><rect x="1206" y="384.6" width="1" height="25.5" fill="#ff2222"/><rect x="1204.5" y="390.6" width="3" height="10.9" fill="#c81e1e" stroke="#ff2222" stroke-width="1"/><rect x="1210" y="380.1" width="1" height="20.9" fill="#ff2222"/><rect x="1208.5" y="384.2" width="3" height="6.3" fill="#c81e1e" stroke="#ff2222" stroke-width="1"/><rect x="1214" y="371.0" width="1" height="15.5" fill="#ff2222"/><rect x="1212.5" y="382.4" width="3" height="1.7" fill="#c81e1e" stroke="#ff2222" stroke-width="1"/><rect x="1218" y="376.4" width="1" height="27.4" fill="#4646ff"/><rect x="1216.5" y="382.4" width="3" height="13.6" fill="#3a3ad0" stroke="#4646ff" stroke-width="1"/><rect x="1222" y="351.0" width="1" height="53.7" fill="#4646ff"/><rect x="1220.5" y="395.2" width="3" height="7.2" fill="#3a3ad0" stroke="#4646ff" stroke-width="1"/><rect x="1226" y="401.0" width="1" height="14.6" fill="#4646ff"/><rect x="1224.5" y="403.4" width="3" height="3.5" fill="#3a3ad0" stroke="#4646ff" stroke-width="1"/><rect x="1230" y="376.4" width="1" height="31.9" fill="#ff2222"/><rect x="1228.5" y="383.3" width="3" height="23.6" fill="#c81e1e" stroke="#ff2222" stroke-width="1"/><rect x="1234" y="378.3" width="1" height="30.9" fill="#4646ff"/><rect x="1232.5" y="383.3" width="3" height="22.7" fill="#3a3ad0" stroke="#4646ff" stroke-width="1"/><rect x="1238" y="403.8" width="1" height="22.7" fill="#4646ff"/><rect x="1236.5" y="407.0" width="3" height="1.0" fill="#3a3ad0" stroke="#4646ff" stroke-width="1"/><rect x="1242" y="397.4" width="1" height="28.2" fill="#4646ff"/><rect x="1240.5" y="407.9" width="3" height="9.0" fill="#3a3ad0" stroke="#4646ff" stroke-width="1"/><rect x="1246" y="398.3" width="1" height="22.8" fill="#ff2222"/><rect x="1244.5" y="411.5" width="3" height="5.4" fill="#c81e1e" stroke="#ff2222" stroke-width="1"/><rect x="1250" y="405.6" width="1" height="20.0" fill="#4646ff"/><rect x="1248.5" y="411.5" width="3" height="5.4" fill="#3a3ad0" stroke="#4646ff" stroke-width="1"/><rect x="1254" y="409.2" width="1" height="25.5" fill="#4646ff"/><rect x="1252.5" y="412.5" width="3" height="12.6" fill="#3a3ad0" stroke="#4646ff" stroke-width="1"/><rect x="1258" y="410.1" width="1" height="20.1" fill="#ff2222"/><rect x="1256.5" y="417.0" width="3" height="8.1" fill="#c81e1e" stroke="#ff2222" stroke-width="1"/><rect x="1262" y="414.7" width="1" height="18.2" fill="#4646ff"/><rect x="1260.5" y="419.8" width="3" height="10.8" fill="#3a3ad0" stroke="#4646ff" stroke-width="1"/><rect x="1266" y="414.7" width="1" height="46.4" fill="#ff2222"/><rect x="1264.5" y="418.8" width="3" height="10.9" fill="#c81e1e" stroke="#ff2222" stroke-width="1"/><rect x="1270" y="413.8" width="1" height="10.0" fill="#4646ff"/><rect x="1268.5" y="418.8" width="3" height="2.7" fill="#3a3ad0" stroke="#4646ff" stroke-width="1"/><rect x="1274" y="382.8" width="1" height="41.0" fill="#ff2222"/><rect x="1272.5" y="394.3" width="3" height="28.1" fill="#c81e1e" stroke="#ff2222" stroke-width="1"/><rect x="1278" y="387.4" width="1" height="15.5" fill="#ff2222"/><rect x="1276.5" y="389.7" width="3" height="4.5" fill="#c81e1e" stroke="#ff2222" stroke-width="1"/><rect x="1282" y="386.5" width="1" height="22.7" fill="#4646ff"/><rect x="1280.5" y="389.7" width="3" height="18.1" fill="#3a3ad0" stroke="#4646ff" stroke-width="1"/><rect x="1286" y="401.0" width="1" height="10.0" fill="#ff2222"/><rect x="1284.5" y="406.1" width="3" height="1.7" fill="#c81e1e" stroke="#ff2222" stroke-width="1"/><rect x="1290" y="391.0" width="1" height="20.0" fill="#ff2222"/><rect x="1288.5" y="397.9" width="3" height="7.2" fill="#c81e1e" stroke="#ff2222" stroke-width="1"/><rect x="1294" y="384.6" width="1" height="19.2" fill="#ff2222"/><rect x="1292.5" y="389.7" width="3" height="11.8" fill="#c81e1e" stroke="#ff2222" stroke-width="1"/><rect x="1298" y="375.5" width="1" height="21.0" fill="#ff2222"/><rect x="1296.5" y="385.1" width="3" height="6.4" fill="#c81e1e" stroke="#ff2222" stroke-width="1"/><rect x="1302" y="378.3" width="1" height="12.8" fill="#4646ff"/><rect x="1300.5" y="379.7" width="3" height="5.4" fill="#3a3ad0" stroke="#4646ff" stroke-width="1"/><rect x="1306" y="379.2" width="1" height="12.8" fill="#ff2222"/><rect x="1304.5" y="381.6" width="3" height="3.5" fill="#c81e1e" stroke="#ff2222" stroke-width="1"/><rect x="1310" y="377.4" width="1" height="13.7" fill="#4646ff"/><rect x="1308.5" y="381.6" width="3" height="5.3" fill="#3a3ad0" stroke="#4646ff" stroke-width="1"/><rect x="1314" y="368.3" width="1" height="21.0" fill="#ff2222"/><rect x="1312.5" y="378.8" width="3" height="8.1" fill="#c81e1e" stroke="#ff2222" stroke-width="1"/><rect x="1318" y="377.1" width="1" height="33.1" fill="#4646ff"/><rect x="1316.5" y="378.8" width="3" height="10.9" fill="#3a3ad0" stroke="#4646ff" stroke-width="1"/><rect x="1322" y="378.3" width="1" height="18.3" fill="#4646ff"/><rect x="1320.5" y="384.3" width="3" height="6.3" fill="#3a3ad0" stroke="#4646ff" stroke-width="1"/><rect x="1326" y="378.3" width="1" height="14.6" fill="#ff2222"/><rect x="1324.5" y="386.1" width="3" height="4.5" fill="#c81e1e" stroke="#ff2222" stroke-width="1"/><rect x="1330" y="359.2" width="1" height="28.2" fill="#ff2222"/><rect x="1328.5" y="374.3" width="3" height="10.8" fill="#c81e1e" stroke="#ff2222" stroke-width="1"/><rect x="1334" y="369.2" width="1" height="24.6" fill="#4646ff"/><rect x="1332.5" y="372.5" width="3" height="14.4" fill="#3a3ad0" stroke="#4646ff" stroke-width="1"/><rect x="1338" y="358.3" width="1" height="35.5" fill="#ff2222"/><rect x="1336.5" y="367.9" width="3" height="20.0" fill="#c81e1e" stroke="#ff2222" stroke-width="1"/><rect x="1342" y="362.0" width="1" height="23.6" fill="#4646ff"/><rect x="1340.5" y="367.9" width="3" height="10.9" fill="#3a3ad0" stroke="#4646ff" stroke-width="1"/><rect x="1346" y="374.7" width="1" height="11.8" fill="#4646ff"/><rect x="1344.5" y="379.8" width="3" height="4.4" fill="#3a3ad0" stroke="#4646ff" stroke-width="1"/><rect x="1350" y="381.7" width="1" height="10.2" fill="#4646ff"/><rect x="1348.5" y="385.2" width="3" height="1.0" fill="#3a3ad0" stroke="#4646ff" stroke-width="1"/><rect x="1354" y="366.3" width="1" height="32.8" fill="#ff2222"/><rect x="1352.5" y="368.9" width="3" height="19.4" fill="#c81e1e" stroke="#ff2222" stroke-width="1"/><rect x="1358" y="340.7" width="1" height="29.7" fill="#ff2222"/><rect x="1356.5" y="354.5" width="3" height="14.4" fill="#c81e1e" stroke="#ff2222" stroke-width="1"/><rect x="1362" y="307.9" width="1" height="63.5" fill="#ff2222"/><rect x="1360.5" y="325.8" width="3" height="27.7" fill="#c81e1e" stroke="#ff2222" stroke-width="1"/><rect x="1366" y="312.0" width="1" height="28.7" fill="#4646ff"/><rect x="1364.5" y="325.8" width="3" height="6.2" fill="#3a3ad0" stroke="#4646ff" stroke-width="1"/><rect x="1370" y="329.4" width="1" height="57.4" fill="#4646ff"/><rect x="1368.5" y="332.0" width="3" height="8.2" fill="#3a3ad0" stroke="#4646ff" stroke-width="1"/><rect x="1374" y="302.8" width="1" height="45.1" fill="#ff2222"/><rect x="1372.5" y="305.4" width="3" height="35.8" fill="#c81e1e" stroke="#ff2222" stroke-width="1"/><rect x="1378" y="249.6" width="1" height="56.3" fill="#ff2222"/><rect x="1376.5" y="262.4" width="3" height="42.0" fill="#c81e1e" stroke="#ff2222" stroke-width="1"/><rect x="1382" y="249.6" width="1" height="16.4" fill="#ff2222"/><rect x="1380.5" y="254.2" width="3" height="7.2" fill="#c81e1e" stroke="#ff2222" stroke-width="1"/><rect x="1386" y="242.4" width="1" height="15.4" fill="#4646ff"/><rect x="1384.5" y="254.2" width="3" height="1.0" fill="#3a3ad0" stroke="#4646ff" stroke-width="1"/><rect x="1390" y="253.7" width="1" height="17.4" fill="#4646ff"/><rect x="1388.5" y="255.2" width="3" height="8.2" fill="#3a3ad0" stroke="#4646ff" stroke-width="1"/><rect x="1394" y="253.7" width="1" height="17.4" fill="#4646ff"/><rect x="1392.5" y="263.4" width="3" height="3.1" fill="#3a3ad0" stroke="#4646ff" stroke-width="1"/><rect x="1398" y="267.0" width="1" height="10.2" fill="#4646ff"/><rect x="1396.5" y="271.6" width="3" height="1.0" fill="#3a3ad0" stroke="#4646ff" stroke-width="1"/><rect x="1402" y="271.1" width="1" height="17.4" fill="#4646ff"/><rect x="1400.5" y="272.6" width="3" height="10.3" fill="#3a3ad0" stroke="#4646ff" stroke-width="1"/><rect x="1406" y="283.4" width="1" height="20.4" fill="#4646ff"/><rect x="1404.5" y="284.9" width="3" height="15.4" fill="#3a3ad0" stroke="#4646ff" stroke-width="1"/><rect x="1410" y="298.0" width="1" height="14.5" fill="#4646ff"/><rect x="1408.5" y="301.2" width="3" height="4.5" fill="#3a3ad0" stroke="#4646ff" stroke-width="1"/><rect x="1414" y="286.1" width="1" height="31.0" fill="#ff2222"/><rect x="1412.5" y="292.1" width="3" height="13.6" fill="#c81e1e" stroke="#ff2222" stroke-width="1"/><rect x="1418" y="278.8" width="1" height="24.6" fill="#ff2222"/><rect x="1416.5" y="291.2" width="3" height="1.0" fill="#c81e1e" stroke="#ff2222" stroke-width="1"/><rect x="1422" y="283.4" width="1" height="20.9" fill="#4646ff"/><rect x="1420.5" y="291.2" width="3" height="7.2" fill="#3a3ad0" stroke="#4646ff" stroke-width="1"/><rect x="1426" y="295.2" width="1" height="22.8" fill="#4646ff"/><rect x="1424.5" y="296.6" width="3" height="9.1" fill="#3a3ad0" stroke="#4646ff" stroke-width="1"/><rect x="1430" y="287.0" width="1" height="27.4" fill="#ff2222"/><rect x="1428.5" y="298.5" width="3" height="7.2" fill="#c81e1e" stroke="#ff2222" stroke-width="1"/><rect x="1434" y="278.8" width="1" height="30.1" fill="#ff2222"/><rect x="1432.5" y="280.3" width="3" height="18.1" fill="#c81e1e" stroke="#ff2222" stroke-width="1"/><rect x="1438" y="236.0" width="1" height="56.5" fill="#ff2222"/><rect x="1436.5" y="243.8" width="3" height="37.3" fill="#c81e1e" stroke="#ff2222" stroke-width="1"/><rect x="1442" y="202.3" width="1" height="46.5" fill="#ff2222"/><rect x="1440.5" y="219.2" width="3" height="23.6" fill="#c81e1e" stroke="#ff2222" stroke-width="1"/><rect x="1446" y="207.7" width="1" height="23.7" fill="#4646ff"/><rect x="1444.5" y="218.6" width="3" height="1.2" fill="#3a3ad0" stroke="#4646ff" stroke-width="1"/><rect x="1450" y="206.2" width="1" height="20.0" fill="#ff2222"/><rect x="1448.5" y="210.5" width="3" height="10.0" fill="#c81e1e" stroke="#ff2222" stroke-width="1"/><rect x="1454" y="207.0" width="1" height="26.6" fill="#4646ff"/><rect x="1452.5" y="210.5" width="3" height="17.4" fill="#3a3ad0" stroke="#4646ff" stroke-width="1"/><rect x="1458" y="175.9" width="1" height="98.4" fill="#ff2222"/><rect x="1456.5" y="197.1" width="3" height="30.8" fill="#c81e1e" stroke="#ff2222" stroke-width="1"/><rect x="1462" y="188.5" width="1" height="51.8" fill="#4646ff"/><rect x="1460.5" y="197.1" width="3" height="27.9" fill="#3a3ad0" stroke="#4646ff" stroke-width="1"/><rect x="1466" y="216.6" width="1" height="34.0" fill="#4646ff"/><rect x="1464.5" y="226.0" width="3" height="10.8" fill="#3a3ad0" stroke="#4646ff" stroke-width="1"/><rect x="1470" y="227.7" width="1" height="22.9" fill="#4646ff"/><rect x="1468.5" y="237.8" width="3" height="11.6" fill="#3a3ad0" stroke="#4646ff" stroke-width="1"/><rect x="1474" y="240.3" width="1" height="11.1" fill="#ff2222"/><rect x="1472.5" y="243.0" width="3" height="6.4" fill="#c81e1e" stroke="#ff2222" stroke-width="1"/><rect x="1478" y="229.2" width="1" height="16.2" fill="#ff2222"/><rect x="1476.5" y="235.6" width="3" height="5.7" fill="#c81e1e" stroke="#ff2222" stroke-width="1"/><rect x="1482" y="227.0" width="1" height="19.9" fill="#4646ff"/><rect x="1480.5" y="234.8" width="3" height="2.7" fill="#3a3ad0" stroke="#4646ff" stroke-width="1"/><rect x="1486" y="233.6" width="1" height="22.2" fill="#4646ff"/><rect x="1484.5" y="238.5" width="3" height="15.3" fill="#3a3ad0" stroke="#4646ff" stroke-width="1"/><rect x="1490" y="235.1" width="1" height="24.4" fill="#ff2222"/><rect x="1488.5" y="252.8" width="3" height="1.0" fill="#c81e1e" stroke="#ff2222" stroke-width="1"/>
<polyline points="1133.0,325.2 1147.3,324.7 1168.8,324.0 1176.0,318.0 1180.8,313.7 1190.3,307.7 1202.3,302.9 1214.2,302.9 1222.6,305.3 1228.6,313.7 1231.0,319.2 1238.1,332.3 1247.7,346.7 1258.4,368.6 1264.4,367.0 1276.3,365.8 1288.3,364.6 1300.2,362.2 1309.8,356.7 1321.7,351.4 1331.3,347.9 1338.5,344.8 1343.2,344.8 1348.0,351.4 1354.4,355.0 1360.3,341.9 1372.3,308.9 1381.8,265.9 1389.0,220.5 1396.2,189.5 1402.1,175.6 1408.1,173.9 1415.3,174.6 1422.5,177.5 1427.2,184.7 1433.2,200.2 1438.0,202.6 1444.0,191.8 1451.1,175.6 1458.3,162.0 1467.8,157.2 1473.8,155.5 1482.2,150.0 1490.5,152.4" fill="none" stroke="#5fa8f0" stroke-width="1.1" stroke-linejoin="round"/>
<polyline points="1133.0,349.1 1142.6,346.7 1152.1,344.3 1161.7,338.3 1168.8,337.6 1177.2,337.1 1185.6,331.1 1199.9,328.0 1214.2,327.6 1223.8,331.1 1233.3,339.5 1242.9,352.6 1252.5,367.0 1258.4,381.3 1264.4,378.9 1276.3,376.5 1288.3,375.8 1297.8,375.1 1303.0,376.5 1317.3,369.4 1329.3,364.6 1341.2,361.0 1354.4,365.3 1362.7,341.9 1367.5,318.0 1381.8,280.2 1389.0,256.3 1398.6,230.1 1405.7,224.1 1415.3,222.9 1422.5,222.9 1427.2,225.3 1434.4,232.5 1440.4,229.6 1446.3,218.1 1453.5,206.2 1460.7,194.2 1470.2,189.5 1479.8,186.6 1485.8,185.2 1490.5,186.6" fill="none" stroke="#1f7ae8" stroke-width="1.1" stroke-linejoin="round"/>
<polyline points="1133.0,420.7 1142.6,412.4 1152.1,404.0 1164.1,396.8 1176.0,396.8 1180.8,407.6 1187.9,418.3 1197.5,423.1 1204.7,427.9 1216.6,428.4 1226.2,430.3 1233.3,432.7 1242.9,433.9 1252.5,432.7 1266.8,433.4 1276.3,433.4 1295.5,433.2 1303.0,432.7 1317.3,433.9 1331.7,432.2 1343.6,425.5 1355.6,406.9 1362.7,416.0 1372.3,414.8 1379.5,427.9 1389.0,444.1 1398.6,440.3 1408.1,425.5 1417.7,410.0 1427.2,392.1 1436.8,365.8 1444.0,346.2 1453.5,331.9 1475.0,331.9 1484.6,327.1 1490.5,321.6" fill="none" stroke="#1f7ae8" stroke-width="1.1" stroke-linejoin="round"/>
<polyline points="1133.0,437.5 1142.6,429.1 1152.1,420.7 1164.1,411.7 1176.0,411.7 1180.8,423.1 1190.3,436.3 1199.9,447.0 1209.5,453.0 1219.0,454.7 1226.2,458.5 1233.3,452.3 1242.9,451.3 1252.5,445.8 1258.4,441.0 1264.4,447.0 1276.3,447.7 1288.3,447.0 1295.5,446.1 1303.0,447.0 1317.3,449.9 1326.9,448.2 1341.2,439.8 1354.4,418.3 1362.7,435.1 1371.1,435.1 1379.5,461.3 1384.2,480.5 1393.8,494.3 1403.3,487.6 1412.9,468.5 1422.5,444.6 1432.0,413.6 1440.4,382.5 1446.3,375.8 1452.3,372.9 1454.7,361.0 1461.9,367.0 1477.4,367.0 1487.0,359.8 1490.5,355.7" fill="none" stroke="#5fa8f0" stroke-width="1.1" stroke-linejoin="round"/>
<polyline points="1133.0,384.9 1144.9,375.3 1156.9,369.4 1166.4,367.0 1176.0,368.2 1185.6,371.8 1195.1,376.5 1211.8,377.2 1223.8,381.3 1233.3,387.3 1245.3,394.5 1259.6,401.6 1269.2,406.4 1281.1,406.4 1295.5,405.9 1303.0,405.2 1317.3,402.8 1336.4,395.6 1350.8,388.5 1365.1,377.7 1374.7,368.2 1386.6,349.1 1398.6,334.7 1415.3,318.0 1422.5,313.2 1436.8,297.0 1446.3,282.6 1458.3,263.5 1470.2,260.6 1477.4,260.6 1484.6,256.3 1490.5,252.8" fill="none" stroke="#e2621a" stroke-width="1.2" stroke-linejoin="round"/>
<polyline points="1133.0,380.1 1137.8,370.6 1144.9,358.6 1152.1,351.4 1159.3,349.1 1166.4,355.0 1176.0,364.6 1183.2,383.7 1190.3,399.2 1195.1,408.8 1202.3,406.9 1209.5,400.4 1216.6,394.0 1223.8,393.3 1231.0,395.6 1240.5,401.6 1252.5,412.4 1262.0,417.1 1270.4,419.5 1276.3,412.4 1285.9,404.0 1295.5,398.0 1303.0,390.9 1312.6,383.7 1322.1,382.0 1336.4,380.6 1346.0,380.1 1353.2,384.9 1360.3,376.5 1368.7,349.1 1374.7,334.7 1381.8,294.6 1389.0,265.9 1395.0,261.1 1401.0,268.3 1408.1,285.0 1417.7,295.0 1427.2,298.2 1435.6,294.6 1440.4,280.2 1446.3,256.3 1453.5,227.7 1459.5,215.7 1465.5,218.1 1475.0,232.5 1484.6,242.0 1490.5,243.9" fill="none" stroke="#9412e8" stroke-width="1.3" stroke-linejoin="round"/>
<text x="1131" y="332" fill="#ff8c1a" stroke="#ff8c1a" stroke-width="0.25" textLength="38" lengthAdjust="spacingAndGlyphs">86.736</text>
<text x="1247.5" y="477" fill="#22cc22" stroke="#22cc22" stroke-width="0.25" textLength="38" lengthAdjust="spacingAndGlyphs">86.143</text>
<text x="1439" y="176" fill="#ff8c1a" stroke="#ff8c1a" stroke-width="0.25" textLength="38" lengthAdjust="spacingAndGlyphs">87.454</text>
</g>
<rect x="1533" y="243" width="65" height="19" fill="#f7a035" fill-opacity="0.93"/>
<rect x="1533" y="243" width="65" height="1" fill="#e8861a"/>
<rect x="1533" y="261" width="65" height="1" fill="#e8861a"/>
<rect x="1533" y="243" width="1" height="19" fill="#e8861a"/>
<rect x="1597" y="243" width="1" height="19" fill="#e8861a"/>
<text x="1549.5" y="256.5" fill="#ffffff" stroke="#ffffff" stroke-width="0.25" textLength="32" lengthAdjust="spacingAndGlyphs">87.103</text>
<clipPath id="w3r"><rect x="1133" y="554" width="400" height="133"/></clipPath><g clip-path="url(#w3r)">
<rect x="1136" y="554" width="1" height="133" fill="#262626"/><rect x="1140" y="554" width="1" height="133" fill="#262626"/><rect x="1144" y="554" width="1" height="133" fill="#262626"/><rect x="1148" y="554" width="1" height="133" fill="#262626"/><rect x="1152" y="554" width="1" height="133" fill="#262626"/><rect x="1156" y="554" width="1" height="133" fill="#262626"/><rect x="1160" y="554" width="1" height="133" fill="#262626"/><rect x="1164" y="554" width="1" height="133" fill="#262626"/><rect x="1168" y="554" width="1" height="133" fill="#262626"/><rect x="1172" y="554" width="1" height="133" fill="#262626"/><rect x="1176" y="554" width="1" height="133" fill="#262626"/><rect x="1180" y="554" width="1" height="133" fill="#262626"/><rect x="1184" y="554" width="1" height="133" fill="#262626"/><rect x="1188" y="554" width="1" height="133" fill="#262626"/><rect x="1192" y="554" width="1" height="133" fill="#262626"/><rect x="1196" y="554" width="1" height="133" fill="#262626"/><rect x="1200" y="554" width="1" height="133" fill="#262626"/><rect x="1204" y="554" width="1" height="133" fill="#262626"/><rect x="1208" y="554" width="1" height="133" fill="#262626"/><rect x="1212" y="554" width="1" height="133" fill="#262626"/><rect x="1216" y="554" width="1" height="133" fill="#262626"/><rect x="1220" y="554" width="1" height="133" fill="#262626"/><rect x="1224" y="554" width="1" height="133" fill="#262626"/><rect x="1228" y="554" width="1" height="133" fill="#262626"/><rect x="1232" y="554" width="1" height="133" fill="#262626"/><rect x="1236" y="554" width="1" height="133" fill="#262626"/><rect x="1240" y="554" width="1" height="133" fill="#262626"/><rect x="1244" y="554" width="1" height="133" fill="#262626"/><rect x="1248" y="554" width="1" height="133" fill="#262626"/><rect x="1252" y="554" width="1" height="133" fill="#262626"/><rect x="1256" y="554" width="1" height="133" fill="#262626"/><rect x="1260" y="554" width="1" height="133" fill="#262626"/><rect x="1264" y="554" width="1" height="133" fill="#262626"/><rect x="1268" y="554" width="1" height="133" fill="#262626"/><rect x="1272" y="554" width="1" height="133" fill="#262626"/><rect x="1276" y="554" width="1" height="133" fill="#262626"/><rect x="1280" y="554" width="1" height="133" fill="#262626"/><rect x="1284" y="554" width="1" height="133" fill="#262626"/><rect x="1288" y="554" width="1" height="133" fill="#262626"/><rect x="1292" y="554" width="1" height="133" fill="#262626"/><rect x="1296" y="554" width="1" height="133" fill="#262626"/><rect x="1300" y="554" width="1" height="133" fill="#262626"/><rect x="1304" y="554" width="1" height="133" fill="#262626"/><rect x="1308" y="554" width="1" height="133" fill="#262626"/><rect x="1312" y="554" width="1" height="133" fill="#262626"/><rect x="1316" y="554" width="1" height="133" fill="#262626"/><rect x="1320" y="554" width="1" height="133" fill="#262626"/><rect x="1324" y="554" width="1" height="133" fill="#262626"/><rect x="1328" y="554" width="1" height="133" fill="#262626"/><rect x="1332" y="554" width="1" height="133" fill="#262626"/><rect x="1336" y="554" width="1" height="133" fill="#262626"/><rect x="1340" y="554" width="1" height="133" fill="#262626"/><rect x="1344" y="554" width="1" height="133" fill="#262626"/><rect x="1348" y="554" width="1" height="133" fill="#262626"/><rect x="1352" y="554" width="1" height="133" fill="#262626"/><rect x="1356" y="554" width="1" height="133" fill="#262626"/><rect x="1360" y="554" width="1" height="133" fill="#262626"/><rect x="1364" y="554" width="1" height="133" fill="#262626"/><rect x="1368" y="554" width="1" height="133" fill="#262626"/><rect x="1372" y="554" width="1" height="133" fill="#262626"/><rect x="1376" y="554" width="1" height="133" fill="#262626"/><rect x="1380" y="554" width="1" height="133" fill="#262626"/><rect x="1384" y="554" width="1" height="133" fill="#262626"/><rect x="1388" y="554" width="1" height="133" fill="#262626"/><rect x="1392" y="554" width="1" height="133" fill="#262626"/><rect x="1396" y="554" width="1" height="133" fill="#262626"/><rect x="1400" y="554" width="1" height="133" fill="#262626"/><rect x="1404" y="554" width="1" height="133" fill="#262626"/><rect x="1408" y="554" width="1" height="133" fill="#262626"/><rect x="1412" y="554" width="1" height="133" fill="#262626"/><rect x="1416" y="554" width="1" height="133" fill="#262626"/><rect x="1420" y="554" width="1" height="133" fill="#262626"/><rect x="1424" y="554" width="1" height="133" fill="#262626"/><rect x="1428" y="554" width="1" height="133" fill="#262626"/><rect x="1432" y="554" width="1" height="133" fill="#262626"/><rect x="1436" y="554" width="1" height="133" fill="#262626"/><rect x="1440" y="554" width="1" height="133" fill="#262626"/><rect x="1444" y="554" width="1" height="133" fill="#262626"/><rect x="1448" y="554" width="1" height="133" fill="#262626"/><rect x="1452" y="554" width="1" height="133" fill="#262626"/><rect x="1456" y="554" width="1" height="133" fill="#262626"/><rect x="1460" y="554" width="1" height="133" fill="#262626"/><rect x="1464" y="554" width="1" height="133" fill="#262626"/><rect x="1468" y="554" width="1" height="133" fill="#262626"/><rect x="1472" y="554" width="1" height="133" fill="#262626"/><rect x="1476" y="554" width="1" height="133" fill="#262626"/><rect x="1480" y="554" width="1" height="133" fill="#262626"/><rect x="1484" y="554" width="1" height="133" fill="#262626"/><rect x="1488" y="554" width="1" height="133" fill="#262626"/><rect x="1492" y="554" width="1" height="133" fill="#262626"/><rect x="1496" y="554" width="1" height="133" fill="#262626"/><rect x="1500" y="554" width="1" height="133" fill="#262626"/><rect x="1504" y="554" width="1" height="133" fill="#262626"/><rect x="1508" y="554" width="1" height="133" fill="#262626"/><rect x="1512" y="554" width="1" height="133" fill="#262626"/><rect x="1516" y="554" width="1" height="133" fill="#262626"/><rect x="1520" y="554" width="1" height="133" fill="#262626"/><rect x="1524" y="554" width="1" height="133" fill="#262626"/><rect x="1528" y="554" width="1" height="133" fill="#262626"/><rect x="1133" y="555" width="400" height="1" fill="#262626"/><rect x="1133" y="558" width="400" height="1" fill="#262626"/><rect x="1133" y="561" width="400" height="1" fill="#262626"/><rect x="1133" y="564" width="400" height="1" fill="#262626"/><rect x="1133" y="566" width="400" height="1" fill="#3d3d3d"/><rect x="1133" y="569" width="400" height="1" fill="#262626"/><rect x="1133" y="572" width="400" height="1" fill="#262626"/><rect x="1133" y="574" width="400" height="1" fill="#262626"/><rect x="1133" y="577" width="400" height="1" fill="#262626"/><rect x="1133" y="580" width="400" height="1" fill="#262626"/><rect x="1133" y="582" width="400" height="1" fill="#262626"/><rect x="1133" y="585" width="400" height="1" fill="#262626"/><rect x="1133" y="588" width="400" height="1" fill="#262626"/><rect x="1133" y="590" width="400" height="1" fill="#262626"/><rect x="1133" y="593" width="400" height="1" fill="#3d3d3d"/><rect x="1133" y="596" width="400" height="1" fill="#262626"/><rect x="1133" y="598" width="400" height="1" fill="#262626"/><rect x="1133" y="601" width="400" height="1" fill="#262626"/><rect x="1133" y="604" width="400" height="1" fill="#262626"/><rect x="1133" y="607" width="400" height="1" fill="#262626"/><rect x="1133" y="609" width="400" height="1" fill="#262626"/><rect x="1133" y="612" width="400" height="1" fill="#262626"/><rect x="1133" y="615" width="400" height="1" fill="#262626"/><rect x="1133" y="617" width="400" height="1" fill="#262626"/><rect x="1133" y="620" width="400" height="1" fill="#3d3d3d"/><rect x="1133" y="623" width="400" height="1" fill="#262626"/><rect x="1133" y="625" width="400" height="1" fill="#262626"/><rect x="1133" y="628" width="400" height="1" fill="#262626"/><rect x="1133" y="631" width="400" height="1" fill="#262626"/><rect x="1133" y="633" width="400" height="1" fill="#262626"/><rect x="1133" y="636" width="400" height="1" fill="#262626"/><rect x="1133" y="639" width="400" height="1" fill="#262626"/><rect x="1133" y="642" width="400" height="1" fill="#262626"/><rect x="1133" y="644" width="400" height="1" fill="#262626"/><rect x="1133" y="647" width="400" height="1" fill="#3d3d3d"/><rect x="1133" y="650" width="400" height="1" fill="#262626"/><rect x="1133" y="652" width="400" height="1" fill="#262626"/><rect x="1133" y="655" width="400" height="1" fill="#262626"/><rect x="1133" y="658" width="400" height="1" fill="#262626"/><rect x="1133" y="660" width="400" height="1" fill="#262626"/><rect x="1133" y="663" width="400" height="1" fill="#262626"/><rect x="1133" y="666" width="400" height="1" fill="#262626"/><rect x="1133" y="668" width="400" height="1" fill="#262626"/><rect x="1133" y="671" width="400" height="1" fill="#262626"/><rect x="1133" y="674" width="400" height="1" fill="#3d3d3d"/><rect x="1133" y="676" width="400" height="1" fill="#262626"/><rect x="1133" y="679" width="400" height="1" fill="#262626"/><rect x="1133" y="682" width="400" height="1" fill="#262626"/><rect x="1133" y="685" width="400" height="1" fill="#262626"/><rect x="1228" y="554" width="1" height="133" fill="#3d3d3d"/><rect x="1324" y="554" width="1" height="133" fill="#3d3d3d"/><rect x="1420" y="554" width="1" height="133" fill="#3d3d3d"/><rect x="1516" y="554" width="1" height="133" fill="#3d3d3d"/><rect x="1180" y="554" width="1" height="133" fill="#6a6a6a"/><rect x="1276" y="554" width="1" height="133" fill="#6a6a6a"/><rect x="1372" y="554" width="1" height="133" fill="#6a6a6a"/><rect x="1468" y="554" width="1" height="133" fill="#6a6a6a"/>
<rect x="1133" y="620" width="400" height="1" fill="#3d3d3d"/>
<rect x="1133" y="647" width="400" height="1" fill="#3d3d3d"/>
<polyline points="1134.2,617.5 1138.7,617.5 1142.8,615.3 1146.6,614.5 1151.2,616.3 1154.9,615.3 1162.5,618.8 1174.6,618.8 1178.4,625.4 1182.9,625.1 1186.7,623.6 1191.3,625.4 1195.0,625.4 1198.8,624.4 1202.6,624.4 1206.4,622.4 1210.2,621.3 1214.7,620.6 1219.2,622.8 1226.8,624.7 1230.6,620.6 1234.4,624.4 1242.7,625.4 1247.2,624.4 1251.0,624.4 1254.8,626.3 1258.6,625.6 1262.4,627.7 1266.9,625.4 1270.7,625.4 1274.5,621.6 1278.6,620.6 1282.5,623.6 1290.4,621.6 1297.9,619.8 1305.5,619.8 1310.8,620.6 1314.6,618.8 1322.9,620.6 1326.8,620.3 1330.6,618.3 1334.3,620.3 1338.1,617.5 1342.4,619.4 1346.5,620.3 1350.2,620.6 1354.8,617.2 1358.6,615.3 1362.6,611.5 1366.9,612.7 1370.7,614.5 1374.4,609.7 1378.2,604.7 1382.8,603.2 1389.6,604.7 1398.7,607.3 1404.7,610.7 1410.5,612.6 1413.8,611.5 1418.3,611.5 1426.6,613.3 1431.2,612.3 1435.0,610.0 1438.8,606.2 1442.5,603.9 1446.3,603.6 1450.9,602.4 1454.6,605.4 1458.4,602.4 1462.2,607.0 1468.3,610.0 1474.3,610.3 1478.8,609.7 1482.6,609.7 1486.4,612.3 1490.6,612.3" fill="none" stroke="#ff6a00" stroke-width="1.5" stroke-linejoin="round"/>
<polyline points="1134.2,601.7 1138.7,604.7 1142.8,594.1 1146.9,591.5 1150.4,607.7 1154.9,600.1 1158.7,610.7 1162.5,620.6 1166.3,621.3 1170.1,619.4 1174.6,619.1 1178.4,650.1 1182.9,650.1 1186.7,636.5 1191.3,642.5 1194.3,642.5 1198.8,634.5 1202.6,638.7 1206.4,621.3 1210.2,617.5 1214.7,615.3 1219.2,626.6 1223.0,632.7 1226.8,635.7 1230.6,613.8 1234.4,630.4 1238.2,631.2 1242.7,636.5 1247.2,631.5 1251.0,632.7 1254.8,640.5 1258.6,633.4 1262.4,641.8 1266.9,628.9 1270.7,631.5 1274.5,610.3 1278.6,607.3 1282.5,622.4 1286.6,619.8 1293.4,610.0 1299.4,606.2 1302.5,606.2 1306.2,602.4 1310.8,610.7 1314.6,603.2 1319.1,610.7 1322.9,618.3 1326.8,612.3 1330.6,602.1 1334.3,618.8 1338.1,603.2 1342.4,615.3 1346.5,619.4 1350.2,622.4 1354.8,607.0 1358.6,599.4 1362.6,588.5 1366.9,596.4 1370.7,603.6 1374.4,590.3 1378.2,579.7 1382.8,578.2 1386.5,579.4 1390.3,585.5 1394.9,589.1 1399.4,596.4 1403.2,605.4 1406.2,616.0 1410.5,620.3 1413.8,611.8 1418.3,611.8 1422.9,617.5 1426.6,622.4 1431.2,616.0 1435.0,602.4 1438.8,590.3 1442.5,583.5 1446.3,584.7 1450.9,582.4 1454.6,597.9 1458.4,587.3 1462.2,605.4 1466.0,612.3 1470.5,619.4 1475.1,616.0 1478.8,612.3 1482.6,614.5 1486.4,624.4 1490.6,623.3" fill="none" stroke="#9400ff" stroke-width="1.4" stroke-linejoin="round"/>
</g>
<clipPath id="w3c"><rect x="1133" y="713" width="400" height="133"/></clipPath><g clip-path="url(#w3c)">
<rect x="1136" y="713" width="1" height="133" fill="#262626"/><rect x="1140" y="713" width="1" height="133" fill="#262626"/><rect x="1144" y="713" width="1" height="133" fill="#262626"/><rect x="1148" y="713" width="1" height="133" fill="#262626"/><rect x="1152" y="713" width="1" height="133" fill="#262626"/><rect x="1156" y="713" width="1" height="133" fill="#262626"/><rect x="1160" y="713" width="1" height="133" fill="#262626"/><rect x="1164" y="713" width="1" height="133" fill="#262626"/><rect x="1168" y="713" width="1" height="133" fill="#262626"/><rect x="1172" y="713" width="1" height="133" fill="#262626"/><rect x="1176" y="713" width="1" height="133" fill="#262626"/><rect x="1180" y="713" width="1" height="133" fill="#262626"/><rect x="1184" y="713" width="1" height="133" fill="#262626"/><rect x="1188" y="713" width="1" height="133" fill="#262626"/><rect x="1192" y="713" width="1" height="133" fill="#262626"/><rect x="1196" y="713" width="1" height="133" fill="#262626"/><rect x="1200" y="713" width="1" height="133" fill="#262626"/><rect x="1204" y="713" width="1" height="133" fill="#262626"/><rect x="1208" y="713" width="1" height="133" fill="#262626"/><rect x="1212" y="713" width="1" height="133" fill="#262626"/><rect x="1216" y="713" width="1" height="133" fill="#262626"/><rect x="1220" y="713" width="1" height="133" fill="#262626"/><rect x="1224" y="713" width="1" height="133" fill="#262626"/><rect x="1228" y="713" width="1" height="133" fill="#262626"/><rect x="1232" y="713" width="1" height="133" fill="#262626"/><rect x="1236" y="713" width="1" height="133" fill="#262626"/><rect x="1240" y="713" width="1" height="133" fill="#262626"/><rect x="1244" y="713" width="1" height="133" fill="#262626"/><rect x="1248" y="713" width="1" height="133" fill="#262626"/><rect x="1252" y="713" width="1" height="133" fill="#262626"/><rect x="1256" y="713" width="1" height="133" fill="#262626"/><rect x="1260" y="713" width="1" height="133" fill="#262626"/><rect x="1264" y="713" width="1" height="133" fill="#262626"/><rect x="1268" y="713" width="1" height="133" fill="#262626"/><rect x="1272" y="713" width="1" height="133" fill="#262626"/><rect x="1276" y="713" width="1" height="133" fill="#262626"/><rect x="1280" y="713" width="1" height="133" fill="#262626"/><rect x="1284" y="713" width="1" height="133" fill="#262626"/><rect x="1288" y="713" width="1" height="133" fill="#262626"/><rect x="1292" y="713" width="1" height="133" fill="#262626"/><rect x="1296" y="713" width="1" height="133" fill="#262626"/><rect x="1300" y="713" width="1" height="133" fill="#262626"/><rect x="1304" y="713" width="1" height="133" fill="#262626"/><rect x="1308" y="713" width="1" height="133" fill="#262626"/><rect x="1312" y="713" width="1" height="133" fill="#262626"/><rect x="1316" y="713" width="1" height="133" fill="#262626"/><rect x="1320" y="713" width="1" height="133" fill="#262626"/><rect x="1324" y="713" width="1" height="133" fill="#262626"/><rect x="1328" y="713" width="1" height="133" fill="#262626"/><rect x="1332" y="713" width="1" height="133" fill="#262626"/><rect x="1336" y="713" width="1" height="133" fill="#262626"/><rect x="1340" y="713" width="1" height="133" fill="#262626"/><rect x="1344" y="713" width="1" height="133" fill="#262626"/><rect x="1348" y="713" width="1" height="133" fill="#262626"/><rect x="1352" y="713" width="1" height="133" fill="#262626"/><rect x="1356" y="713" width="1" height="133" fill="#262626"/><rect x="1360" y="713" width="1" height="133" fill="#262626"/><rect x="1364" y="713" width="1" height="133" fill="#262626"/><rect x="1368" y="713" width="1" height="133" fill="#262626"/><rect x="1372" y="713" width="1" height="133" fill="#262626"/><rect x="1376" y="713" width="1" height="133" fill="#262626"/><rect x="1380" y="713" width="1" height="133" fill="#262626"/><rect x="1384" y="713" width="1" height="133" fill="#262626"/><rect x="1388" y="713" width="1" height="133" fill="#262626"/><rect x="1392" y="713" width="1" height="133" fill="#262626"/><rect x="1396" y="713" width="1" height="133" fill="#262626"/><rect x="1400" y="713" width="1" height="133" fill="#262626"/><rect x="1404" y="713" width="1" height="133" fill="#262626"/><rect x="1408" y="713" width="1" height="133" fill="#262626"/><rect x="1412" y="713" width="1" height="133" fill="#262626"/><rect x="1416" y="713" width="1" height="133" fill="#262626"/><rect x="1420" y="713" width="1" height="133" fill="#262626"/><rect x="1424" y="713" width="1" height="133" fill="#262626"/><rect x="1428" y="713" width="1" height="133" fill="#262626"/><rect x="1432" y="713" width="1" height="133" fill="#262626"/><rect x="1436" y="713" width="1" height="133" fill="#262626"/><rect x="1440" y="713" width="1" height="133" fill="#262626"/><rect x="1444" y="713" width="1" height="133" fill="#262626"/><rect x="1448" y="713" width="1" height="133" fill="#262626"/><rect x="1452" y="713" width="1" height="133" fill="#262626"/><rect x="1456" y="713" width="1" height="133" fill="#262626"/><rect x="1460" y="713" width="1" height="133" fill="#262626"/><rect x="1464" y="713" width="1" height="133" fill="#262626"/><rect x="1468" y="713" width="1" height="133" fill="#262626"/><rect x="1472" y="713" width="1" height="133" fill="#262626"/><rect x="1476" y="713" width="1" height="133" fill="#262626"/><rect x="1480" y="713" width="1" height="133" fill="#262626"/><rect x="1484" y="713" width="1" height="133" fill="#262626"/><rect x="1488" y="713" width="1" height="133" fill="#262626"/><rect x="1492" y="713" width="1" height="133" fill="#262626"/><rect x="1496" y="713" width="1" height="133" fill="#262626"/><rect x="1500" y="713" width="1" height="133" fill="#262626"/><rect x="1504" y="713" width="1" height="133" fill="#262626"/><rect x="1508" y="713" width="1" height="133" fill="#262626"/><rect x="1512" y="713" width="1" height="133" fill="#262626"/><rect x="1516" y="713" width="1" height="133" fill="#262626"/><rect x="1520" y="713" width="1" height="133" fill="#262626"/><rect x="1524" y="713" width="1" height="133" fill="#262626"/><rect x="1528" y="713" width="1" height="133" fill="#262626"/><rect x="1133" y="713" width="400" height="1" fill="#262626"/><rect x="1133" y="718" width="400" height="1" fill="#262626"/><rect x="1133" y="722" width="400" height="1" fill="#262626"/><rect x="1133" y="727" width="400" height="1" fill="#3d3d3d"/><rect x="1133" y="731" width="400" height="1" fill="#262626"/><rect x="1133" y="736" width="400" height="1" fill="#262626"/><rect x="1133" y="741" width="400" height="1" fill="#262626"/><rect x="1133" y="745" width="400" height="1" fill="#262626"/><rect x="1133" y="750" width="400" height="1" fill="#262626"/><rect x="1133" y="754" width="400" height="1" fill="#3d3d3d"/><rect x="1133" y="759" width="400" height="1" fill="#262626"/><rect x="1133" y="763" width="400" height="1" fill="#262626"/><rect x="1133" y="768" width="400" height="1" fill="#262626"/><rect x="1133" y="773" width="400" height="1" fill="#262626"/><rect x="1133" y="777" width="400" height="1" fill="#262626"/><rect x="1133" y="782" width="400" height="1" fill="#3d3d3d"/><rect x="1133" y="786" width="400" height="1" fill="#262626"/><rect x="1133" y="791" width="400" height="1" fill="#262626"/><rect x="1133" y="795" width="400" height="1" fill="#262626"/><rect x="1133" y="800" width="400" height="1" fill="#262626"/><rect x="1133" y="804" width="400" height="1" fill="#262626"/><rect x="1133" y="809" width="400" height="1" fill="#3d3d3d"/><rect x="1133" y="814" width="400" height="1" fill="#262626"/><rect x="1133" y="818" width="400" height="1" fill="#262626"/><rect x="1133" y="823" width="400" height="1" fill="#262626"/><rect x="1133" y="827" width="400" height="1" fill="#262626"/><rect x="1133" y="832" width="400" height="1" fill="#262626"/><rect x="1133" y="836" width="400" height="1" fill="#3d3d3d"/><rect x="1133" y="841" width="400" height="1" fill="#262626"/><rect x="1228" y="713" width="1" height="133" fill="#3d3d3d"/><rect x="1324" y="713" width="1" height="133" fill="#3d3d3d"/><rect x="1420" y="713" width="1" height="133" fill="#3d3d3d"/><rect x="1516" y="713" width="1" height="133" fill="#3d3d3d"/><rect x="1180" y="713" width="1" height="133" fill="#6a6a6a"/><rect x="1276" y="713" width="1" height="133" fill="#6a6a6a"/><rect x="1372" y="713" width="1" height="133" fill="#6a6a6a"/><rect x="1468" y="713" width="1" height="133" fill="#6a6a6a"/>
<rect x="1134" y="809" width="3" height="2" fill="#a0a0a0"/><rect x="1137" y="809" width="3" height="2" fill="#a0a0a0"/><rect x="1141.5" y="806.1" width="2" height="3.4" fill="none" stroke="#a0a0a0" stroke-width="1"/><rect x="1145.5" y="803.5" width="2" height="6.0" fill="none" stroke="#a0a0a0" stroke-width="1"/><rect x="1149.5" y="804.2" width="2" height="5.3" fill="none" stroke="#a0a0a0" stroke-width="1"/><rect x="1153.5" y="804.5" width="2" height="5.0" fill="none" stroke="#a0a0a0" stroke-width="1"/><rect x="1157.5" y="805.3" width="2" height="4.2" fill="none" stroke="#a0a0a0" stroke-width="1"/><rect x="1161" y="809" width="3" height="2" fill="#a0a0a0"/><rect x="1165" y="809" width="3" height="2" fill="#a0a0a0"/><rect x="1169.5" y="809.5" width="2" height="2.6" fill="none" stroke="#a0a0a0" stroke-width="1"/><rect x="1173.5" y="809.5" width="2" height="4.1" fill="none" stroke="#a0a0a0" stroke-width="1"/><rect x="1177.5" y="809.5" width="2" height="12.1" fill="none" stroke="#a0a0a0" stroke-width="1"/><rect x="1181.5" y="809.5" width="2" height="17.0" fill="none" stroke="#a0a0a0" stroke-width="1"/><rect x="1185.5" y="809.5" width="2" height="17.0" fill="none" stroke="#a0a0a0" stroke-width="1"/><rect x="1189.5" y="809.5" width="2" height="18.2" fill="none" stroke="#a0a0a0" stroke-width="1"/><rect x="1193.5" y="809.5" width="2" height="18.2" fill="none" stroke="#a0a0a0" stroke-width="1"/><rect x="1197.5" y="809.5" width="2" height="16.7" fill="none" stroke="#a0a0a0" stroke-width="1"/><rect x="1201.5" y="809.5" width="2" height="14.3" fill="none" stroke="#a0a0a0" stroke-width="1"/><rect x="1205.5" y="809.5" width="2" height="10.2" fill="none" stroke="#a0a0a0" stroke-width="1"/><rect x="1209.5" y="809.5" width="2" height="5.2" fill="none" stroke="#a0a0a0" stroke-width="1"/><rect x="1213.5" y="809.5" width="2" height="1.9" fill="none" stroke="#a0a0a0" stroke-width="1"/><rect x="1217.5" y="809.5" width="2" height="1.5" fill="none" stroke="#a0a0a0" stroke-width="1"/><rect x="1221.5" y="809.5" width="2" height="3.4" fill="none" stroke="#a0a0a0" stroke-width="1"/><rect x="1225.5" y="809.5" width="2" height="4.1" fill="none" stroke="#a0a0a0" stroke-width="1"/><rect x="1229" y="809" width="3" height="2" fill="#a0a0a0"/><rect x="1233.5" y="809.5" width="2" height="1.5" fill="none" stroke="#a0a0a0" stroke-width="1"/><rect x="1237.5" y="809.5" width="2" height="1.9" fill="none" stroke="#a0a0a0" stroke-width="1"/><rect x="1241.5" y="809.5" width="2" height="4.1" fill="none" stroke="#a0a0a0" stroke-width="1"/><rect x="1245.5" y="809.5" width="2" height="4.1" fill="none" stroke="#a0a0a0" stroke-width="1"/><rect x="1249.5" y="809.5" width="2" height="4.6" fill="none" stroke="#a0a0a0" stroke-width="1"/><rect x="1253.5" y="809.5" width="2" height="4.9" fill="none" stroke="#a0a0a0" stroke-width="1"/><rect x="1257.5" y="809.5" width="2" height="4.9" fill="none" stroke="#a0a0a0" stroke-width="1"/><rect x="1261.5" y="809.5" width="2" height="6.1" fill="none" stroke="#a0a0a0" stroke-width="1"/><rect x="1265.5" y="809.5" width="2" height="4.1" fill="none" stroke="#a0a0a0" stroke-width="1"/><rect x="1269.5" y="809.5" width="2" height="3.4" fill="none" stroke="#a0a0a0" stroke-width="1"/><rect x="1273" y="809" width="3" height="2" fill="#a0a0a0"/><rect x="1277.5" y="804.5" width="2" height="5.0" fill="none" stroke="#a0a0a0" stroke-width="1"/><rect x="1281.5" y="804.5" width="2" height="5.0" fill="none" stroke="#a0a0a0" stroke-width="1"/><rect x="1285.5" y="804.2" width="2" height="5.3" fill="none" stroke="#a0a0a0" stroke-width="1"/><rect x="1289.5" y="803.5" width="2" height="6.0" fill="none" stroke="#a0a0a0" stroke-width="1"/><rect x="1293.5" y="802.3" width="2" height="7.2" fill="none" stroke="#a0a0a0" stroke-width="1"/><rect x="1297.5" y="800.5" width="2" height="9.0" fill="none" stroke="#a0a0a0" stroke-width="1"/><rect x="1301.5" y="800.5" width="2" height="9.0" fill="none" stroke="#a0a0a0" stroke-width="1"/><rect x="1305.5" y="799.2" width="2" height="10.3" fill="none" stroke="#a0a0a0" stroke-width="1"/><rect x="1309.5" y="800.5" width="2" height="9.0" fill="none" stroke="#a0a0a0" stroke-width="1"/><rect x="1313.5" y="800.5" width="2" height="9.0" fill="none" stroke="#a0a0a0" stroke-width="1"/><rect x="1317.5" y="801.1" width="2" height="8.4" fill="none" stroke="#a0a0a0" stroke-width="1"/><rect x="1321.5" y="804.5" width="2" height="5.0" fill="none" stroke="#a0a0a0" stroke-width="1"/><rect x="1325.5" y="805.0" width="2" height="4.5" fill="none" stroke="#a0a0a0" stroke-width="1"/><rect x="1329.5" y="803.8" width="2" height="5.7" fill="none" stroke="#a0a0a0" stroke-width="1"/><rect x="1333.5" y="806.5" width="2" height="3.0" fill="none" stroke="#a0a0a0" stroke-width="1"/><rect x="1337.5" y="804.1" width="2" height="5.4" fill="none" stroke="#a0a0a0" stroke-width="1"/><rect x="1341.5" y="805.3" width="2" height="4.2" fill="none" stroke="#a0a0a0" stroke-width="1"/><rect x="1345.5" y="807.6" width="2" height="1.9" fill="none" stroke="#a0a0a0" stroke-width="1"/><rect x="1349" y="809" width="3" height="2" fill="#a0a0a0"/><rect x="1353" y="809" width="3" height="2" fill="#a0a0a0"/><rect x="1357.5" y="805.3" width="2" height="4.2" fill="none" stroke="#a0a0a0" stroke-width="1"/><rect x="1361.5" y="798.5" width="2" height="11.0" fill="none" stroke="#a0a0a0" stroke-width="1"/><rect x="1365.5" y="796.2" width="2" height="13.3" fill="none" stroke="#a0a0a0" stroke-width="1"/><rect x="1369.5" y="797.4" width="2" height="12.1" fill="none" stroke="#a0a0a0" stroke-width="1"/><rect x="1373.5" y="793.5" width="2" height="16.0" fill="none" stroke="#a0a0a0" stroke-width="1"/><rect x="1377.5" y="785.3" width="2" height="24.2" fill="none" stroke="#a0a0a0" stroke-width="1"/><rect x="1381.5" y="780.3" width="2" height="29.2" fill="none" stroke="#a0a0a0" stroke-width="1"/><rect x="1385.5" y="779.6" width="2" height="29.9" fill="none" stroke="#a0a0a0" stroke-width="1"/><rect x="1389.5" y="781.4" width="2" height="28.1" fill="none" stroke="#a0a0a0" stroke-width="1"/><rect x="1393.5" y="786.4" width="2" height="23.1" fill="none" stroke="#a0a0a0" stroke-width="1"/><rect x="1397.5" y="791.4" width="2" height="18.1" fill="none" stroke="#a0a0a0" stroke-width="1"/><rect x="1401.5" y="798.5" width="2" height="11.0" fill="none" stroke="#a0a0a0" stroke-width="1"/><rect x="1405.5" y="806.5" width="2" height="3.0" fill="none" stroke="#a0a0a0" stroke-width="1"/><rect x="1409.5" y="809.5" width="2" height="2.6" fill="none" stroke="#a0a0a0" stroke-width="1"/><rect x="1413.5" y="809.5" width="2" height="5.6" fill="none" stroke="#a0a0a0" stroke-width="1"/><rect x="1417.5" y="809.5" width="2" height="6.7" fill="none" stroke="#a0a0a0" stroke-width="1"/><rect x="1421.5" y="809.5" width="2" height="9.4" fill="none" stroke="#a0a0a0" stroke-width="1"/><rect x="1425.5" y="809.5" width="2" height="11.7" fill="none" stroke="#a0a0a0" stroke-width="1"/><rect x="1429.5" y="809.5" width="2" height="12.4" fill="none" stroke="#a0a0a0" stroke-width="1"/><rect x="1433.5" y="809.5" width="2" height="9.4" fill="none" stroke="#a0a0a0" stroke-width="1"/><rect x="1437.5" y="809.5" width="2" height="2.6" fill="none" stroke="#a0a0a0" stroke-width="1"/><rect x="1441.5" y="804.5" width="2" height="5.0" fill="none" stroke="#a0a0a0" stroke-width="1"/><rect x="1445.5" y="800.5" width="2" height="9.0" fill="none" stroke="#a0a0a0" stroke-width="1"/><rect x="1449.5" y="797.4" width="2" height="12.1" fill="none" stroke="#a0a0a0" stroke-width="1"/><rect x="1453.5" y="799.2" width="2" height="10.3" fill="none" stroke="#a0a0a0" stroke-width="1"/><rect x="1457.5" y="796.2" width="2" height="13.3" fill="none" stroke="#a0a0a0" stroke-width="1"/><rect x="1461.5" y="801.5" width="2" height="8.0" fill="none" stroke="#a0a0a0" stroke-width="1"/><rect x="1465.5" y="806.5" width="2" height="3.0" fill="none" stroke="#a0a0a0" stroke-width="1"/><rect x="1469.5" y="809.5" width="2" height="2.6" fill="none" stroke="#a0a0a0" stroke-width="1"/><rect x="1473.5" y="809.5" width="2" height="5.6" fill="none" stroke="#a0a0a0" stroke-width="1"/><rect x="1477.5" y="809.5" width="2" height="6.7" fill="none" stroke="#a0a0a0" stroke-width="1"/><rect x="1481.5" y="809.5" width="2" height="8.7" fill="none" stroke="#a0a0a0" stroke-width="1"/><rect x="1485.5" y="809.5" width="2" height="11.7" fill="none" stroke="#a0a0a0" stroke-width="1"/><rect x="1489.5" y="809.5" width="2" height="13.7" fill="none" stroke="#a0a0a0" stroke-width="1"/>
<polyline points="1134.2,791.7 1140.6,790.9 1149.6,787.1 1158.7,784.1 1167.8,784.4 1175.4,787.1 1182.9,795.5 1193.5,807.6 1201.1,814.4 1207.1,818.2 1217.7,819.7 1226.8,821.2 1235.9,821.9 1246.5,825.0 1257.1,827.2 1264.6,830.3 1272.2,831.8 1278.3,829.5 1287.3,825.7 1296.4,820.4 1305.5,814.4 1314.6,809.1 1323.0,806.1 1329.1,803.8 1335.1,802.0 1342.4,799.2 1350.2,798.9 1357.8,797.0 1363.9,791.7 1371.4,785.6 1376.0,781.1 1380.5,773.5 1386.5,761.4 1392.6,750.8 1398.7,744.0 1404.7,741.0 1410.8,740.5 1416.8,744.0 1422.9,747.5 1428.9,752.6 1434.2,755.7 1438.8,756.1 1444.0,753.1 1450.1,749.3 1456.2,744.8 1462.2,740.5 1466.7,739.5 1472.8,741.0 1478.8,744.0 1483.4,746.6 1490.6,752.6" fill="none" stroke="#12b4c4" stroke-width="1.4" stroke-linejoin="round"/>
<polyline points="1134.2,792.4 1139.1,790.2 1146.3,781.8 1150.4,781.8 1154.9,779.3 1158.7,780.3 1164.8,785.3 1169.3,787.9 1174.6,790.2 1178.4,802.3 1182.9,812.1 1189.0,818.9 1195.0,825.7 1199.6,826.8 1202.6,829.5 1208.7,825.3 1214.7,821.2 1220.8,821.6 1226.8,824.7 1229.8,822.2 1235.9,823.5 1241.9,827.2 1251.0,830.3 1255.6,832.5 1263.1,835.3 1270.7,834.0 1278.3,823.5 1284.3,821.2 1291.9,817.4 1299.4,809.8 1307.0,804.5 1314.6,800.5 1323.0,800.5 1326.8,799.2 1330.6,797.4 1334.3,798.5 1338.1,795.9 1342.4,795.5 1346.5,796.2 1350.2,798.0 1354.5,796.2 1359.3,790.2 1362.6,782.9 1366.9,777.3 1371.1,774.3 1375.2,764.4 1379.0,752.3 1382.8,741.0 1387.3,730.4 1392.6,725.1 1397.1,725.1 1401.7,728.9 1406.2,736.5 1410.5,744.5 1415.3,749.0 1419.8,752.6 1424.4,759.1 1428.9,765.2 1434.2,766.0 1438.0,758.4 1442.5,748.1 1446.3,741.7 1450.1,736.5 1453.9,735.7 1458.4,729.6 1463.0,731.9 1468.3,739.0 1474.3,748.1 1478.8,751.6 1483.4,756.9 1487.2,762.2 1490.6,767.2" fill="none" stroke="#ff1010" stroke-width="1.4" stroke-linejoin="round"/>
</g>
<text x="39.1" y="862" fill="#000" stroke="#000" stroke-width="0.25" textLength="23.0" lengthAdjust="spacingAndGlyphs">始値:</text>
<text x="114.8" y="862" fill="#000" stroke="#000" stroke-width="0.25" textLength="23.0" lengthAdjust="spacingAndGlyphs">高値:</text>
<text x="191.2" y="862" fill="#000" stroke="#000" stroke-width="0.25" textLength="23.0" lengthAdjust="spacingAndGlyphs">安値:</text>
<text x="267.1" y="862" fill="#000" stroke="#000" stroke-width="0.25" textLength="64.4" lengthAdjust="spacingAndGlyphs">終値:102.492</text>
<rect x="336" y="850" width="16" height="15" fill="url(#gSBtn)"/>
<rect x="336" y="850" width="1" height="15" fill="#b4b4b4"/>
<rect x="352" y="850" width="1" height="15" fill="#b4b4b4"/>
<path d="M341,857.0 l6,-4.5 v9 z" fill="#444"/>
<rect x="353" y="850" width="104" height="15" fill="url(#gTrack)"/>
<rect x="423.5" y="850" width="14.0" height="15" fill="url(#gThumb)"/>
<rect x="424" y="850" width="1" height="15" fill="#b8b8b8"/>
<rect x="438" y="850" width="1" height="15" fill="#b8b8b8"/>
<rect x="457" y="850" width="16" height="15" fill="url(#gSBtn)"/>
<rect x="457" y="850" width="1" height="15" fill="#b4b4b4"/>
<rect x="473" y="850" width="1" height="15" fill="#b4b4b4"/>
<path d="M468,857.0 l-6,-4.5 v9 z" fill="#444"/>
<rect x="473" y="850" width="23" height="15" fill="#ffffff"/>
<text x="475" y="862" fill="#000" stroke="#000" stroke-width="0.25" textLength="18" lengthAdjust="spacingAndGlyphs">100</text>
<rect x="496" y="850" width="15" height="15" fill="url(#gDrop)"/>
<path d="M499.5,854 h8 l-4,6 z" fill="#444"/>
<rect x="528" y="850" width="16" height="15" fill="url(#gDrop)"/>
<rect x="544" y="850" width="15" height="15" fill="url(#gDrop)"/>
<rect x="528" y="850" width="1" height="15" fill="#c8c8c8"/>
<rect x="544" y="850" width="1" height="15" fill="#e8e8e8"/>
<path d="M531.5,857.0 h9 M536.0,852.5 v9" stroke="#3a3a3a" stroke-width="2.4"/>
<path d="M547.0,857.0 h9" stroke="#3a3a3a" stroke-width="2.4"/>
<text x="607.1" y="862" fill="#000" stroke="#000" stroke-width="0.25" textLength="23.0" lengthAdjust="spacingAndGlyphs">始値:</text>
<text x="683.1" y="862" fill="#000" stroke="#000" stroke-width="0.25" textLength="23.0" lengthAdjust="spacingAndGlyphs">高値:</text>
<text x="759.1" y="862" fill="#000" stroke="#000" stroke-width="0.25" textLength="23.0" lengthAdjust="spacingAndGlyphs">安値:</text>
<text x="835.1" y="862" fill="#000" stroke="#000" stroke-width="0.25" textLength="64.8" lengthAdjust="spacingAndGlyphs">終値:1.36430</text>
<rect x="904" y="850" width="17" height="15" fill="url(#gSBtn)"/>
<rect x="904" y="850" width="1" height="15" fill="#b4b4b4"/>
<rect x="921" y="850" width="1" height="15" fill="#b4b4b4"/>
<path d="M909,857.0 l6,-4.5 v9 z" fill="#444"/>
<rect x="922" y="850" width="56" height="15" fill="url(#gTrack)"/>
<rect x="954" y="850" width="15" height="15" fill="url(#gThumb)"/>
<rect x="954" y="850" width="1" height="15" fill="#b8b8b8"/>
<rect x="969" y="850" width="1" height="15" fill="#b8b8b8"/>
<rect x="978" y="850" width="16.5" height="15" fill="url(#gSBtn)"/>
<rect x="978" y="850" width="1" height="15" fill="#b4b4b4"/>
<rect x="994" y="850" width="1" height="15" fill="#b4b4b4"/>
<path d="M989,857.0 l-6,-4.5 v9 z" fill="#444"/>
<rect x="994.5" y="850" width="23.5" height="15" fill="#ffffff"/>
<text x="996.5" y="862" fill="#000" stroke="#000" stroke-width="0.25" textLength="18" lengthAdjust="spacingAndGlyphs">100</text>
<rect x="1018" y="850" width="15" height="15" fill="url(#gDrop)"/>
<path d="M1021.5,854 h8 l-4,6 z" fill="#444"/>
<rect x="1048" y="850" width="17" height="15" fill="url(#gDrop)"/>
<rect x="1065" y="850" width="16" height="15" fill="url(#gDrop)"/>
<rect x="1048" y="850" width="1" height="15" fill="#c8c8c8"/>
<rect x="1065" y="850" width="1" height="15" fill="#e8e8e8"/>
<path d="M1052.0,857.0 h9 M1056.5,852.5 v9" stroke="#3a3a3a" stroke-width="2.4"/>
<path d="M1068.5,857.0 h9" stroke="#3a3a3a" stroke-width="2.4"/>
<text x="1133.0" y="862" fill="#000" stroke="#000" stroke-width="0.25" textLength="23.0" lengthAdjust="spacingAndGlyphs">始値:</text>
<text x="1210.7" y="862" fill="#000" stroke="#000" stroke-width="0.25" textLength="23.0" lengthAdjust="spacingAndGlyphs">高値:</text>
<text x="1289.4" y="862" fill="#000" stroke="#000" stroke-width="0.25" textLength="23.0" lengthAdjust="spacingAndGlyphs">安値:</text>
<text x="1366.5" y="862" fill="#000" stroke="#000" stroke-width="0.25" textLength="59.5" lengthAdjust="spacingAndGlyphs">終値:87.103</text>
<rect x="1430.5" y="850" width="15.5" height="15" fill="url(#gSBtn)"/>
<rect x="1430.5" y="850" width="1" height="15" fill="#b4b4b4"/>
<rect x="1446" y="850" width="1" height="15" fill="#b4b4b4"/>
<path d="M1435.5,857.0 l6,-4.5 v9 z" fill="#444"/>
<rect x="1447" y="850" width="48.5" height="15" fill="url(#gTrack)"/>
<rect x="1473" y="850" width="14.5" height="15" fill="url(#gThumb)"/>
<rect x="1473" y="850" width="1" height="15" fill="#b8b8b8"/>
<rect x="1488" y="850" width="1" height="15" fill="#b8b8b8"/>
<rect x="1495.5" y="850" width="16.0" height="15" fill="url(#gSBtn)"/>
<rect x="1495.5" y="850" width="1" height="15" fill="#b4b4b4"/>
<rect x="1512" y="850" width="1" height="15" fill="#b4b4b4"/>
<path d="M1506.5,857.0 l-6,-4.5 v9 z" fill="#444"/>
<rect x="1511.5" y="850" width="23.5" height="15" fill="#ffffff"/>
<text x="1513.5" y="862" fill="#000" stroke="#000" stroke-width="0.25" textLength="18" lengthAdjust="spacingAndGlyphs">100</text>
<rect x="1535" y="850" width="16" height="15" fill="url(#gDrop)"/>
<path d="M1539.0,854 h8 l-4,6 z" fill="#444"/>
<rect x="1567" y="850" width="16" height="15" fill="url(#gDrop)"/>
<rect x="1583" y="850" width="15" height="15" fill="url(#gDrop)"/>
<rect x="1567" y="850" width="1" height="15" fill="#c8c8c8"/>
<rect x="1583" y="850" width="1" height="15" fill="#e8e8e8"/>
<path d="M1570.5,857.0 h9 M1575.0,852.5 v9" stroke="#3a3a3a" stroke-width="2.4"/>
<path d="M1586.0,857.0 h9" stroke="#3a3a3a" stroke-width="2.4"/>
</svg></body></html>
